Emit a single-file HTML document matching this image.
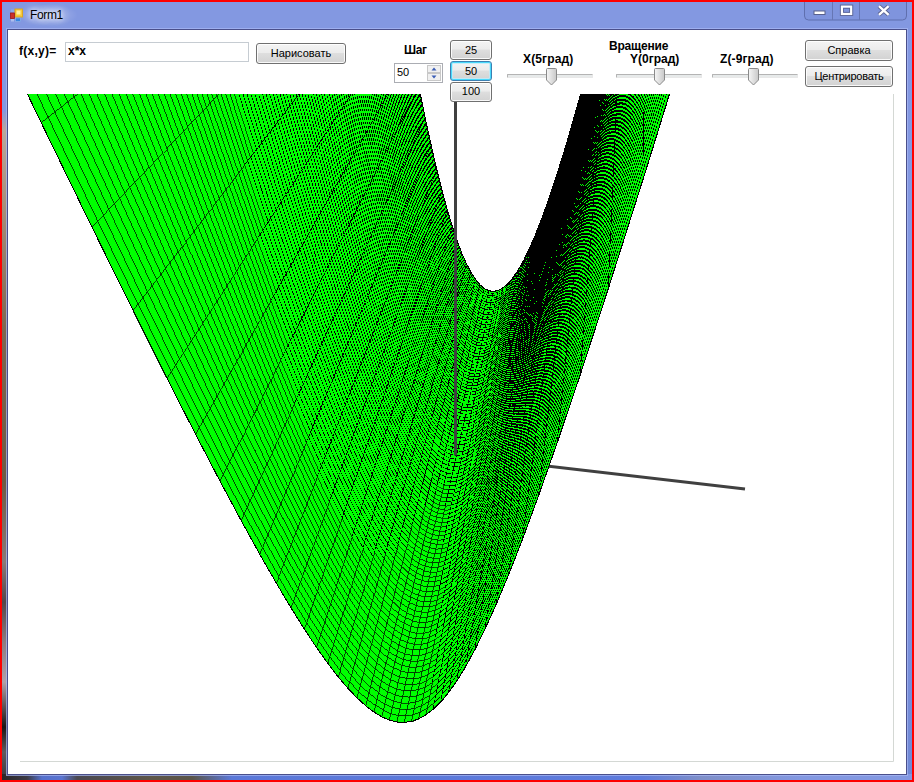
<!DOCTYPE html>
<html><head><meta charset="utf-8"><title>Form1</title><style>
html,body{margin:0;padding:0}
body{width:914px;height:782px;position:relative;overflow:hidden;background:#fe0000;font-family:"Liberation Sans",sans-serif;font-size:11px;color:#000}
div,span{position:absolute;box-sizing:border-box}
#frame{left:2px;top:2px;width:910px;height:778px;background:#8398e1}
#fl{left:2px;top:2px;width:6px;height:778px;background:linear-gradient(180deg,#8398e1 0,#8398e1 108px,#b9a79c 128px,#a8907c 200px,#7d6650 330px,#6e5a44 480px,#8a7a78 560px,#54464a 600px,#8c7c80 640px,#b0a0a8 680px,#1a1414 725px,#605a5e 750px,#38363c 778px)}
#fb{left:2px;top:774px;width:910px;height:6px;background:linear-gradient(90deg,#2a2628 0,#3c3a44 25px,#5570cc 40px,#5a74d0 60px,#4a4850 75px,#5e5648 150px,#5a5448 190px,#5b78d8 230px,#5e7bdc 640px,#7f8fc8 700px,#8398e1 800px)}
#fr{left:906px;top:30px;width:6px;height:750px;background:linear-gradient(180deg,#8398e1 0,#8398e1 500px,#6f88d4 750px)}
#client{left:7px;top:29px;width:900px;height:746px;background:#fff;border:1px solid #4a4f8a;box-shadow:0 0 0 1px rgba(170,185,245,.7)}
#title{left:30px;top:7.5px;font-size:12px;line-height:15px;letter-spacing:-.35px;color:#000;text-shadow:0 0 5px #fff,0 0 8px #dfe6ff,0 0 10px #dfe6ff}
#glow{left:18px;top:4px;width:60px;height:22px;border-radius:11px;background:radial-gradient(ellipse at center,rgba(255,255,255,.35),rgba(255,255,255,0) 70%)}
.b{font-weight:bold;font-size:12px;white-space:nowrap;line-height:13px}
.btn{border:1px solid #707070;border-radius:3px;background:linear-gradient(180deg,#f4f4f4 0,#ececec 45%,#dedede 50%,#d2d2d2 100%);box-shadow:inset 0 0 0 1px rgba(255,255,255,.85);text-align:center;white-space:nowrap}
.btn.f{border-color:#3c7fb1;box-shadow:inset 0 0 0 1px #48d8fb,inset 0 0 0 2px rgba(190,235,250,.8)}
.tr{height:4px;border:1px solid #b4b4b4;border-bottom-color:#e8e8e8;border-right-color:#e8e8e8;background:#e7eaea;border-radius:1px}
.th{width:11px;height:18px}
path.a{paint-order:normal;stroke-width:.85px;stroke:#003800}path.b{stroke-width:1.3px}path.c{stroke-width:1.18px}
</style></head><body>
<div id="frame"></div><div id="fl"></div><div id="fr"></div><div id="fb"></div>
<div id="glow"></div>
<svg style="position:absolute;left:10px;top:8px" width="13" height="14" viewBox="0 0 13 14"><rect x="5" y="1" width="7.5" height="8" fill="#f7c93a" stroke="#d9a520" stroke-width="1"/><rect x="6.5" y="2.5" width="4" height="4" fill="#fff0a8"/><rect x="0.5" y="5" width="4" height="5.5" fill="#c9302a" stroke="#a01818" stroke-width=".8"/><rect x="5.5" y="10" width="5" height="3.5" fill="#3a86e0" stroke="#9ab8e8" stroke-width=".6"/><rect x="1" y="1.5" width="3" height="2.5" fill="#8fb0ee" opacity=".8"/><rect x="1" y="11" width="3" height="2.5" fill="#b8c8f0" opacity=".8"/></svg>
<div id="title">Form1</div>
<svg style="position:absolute;left:803px;top:2px" width="105" height="20" viewBox="0 0 105 20"><path d="M1.5,0v14a4,4 0 0 0 4,4h94a4,4 0 0 0 4,-4v-14" fill="rgba(120,140,215,.35)" stroke="#5f6fae" stroke-width="1"/><path d="M29.5,0v18M56.5,0v18" stroke="#6676b4" stroke-width="1"/><rect x="11" y="9" width="11" height="3.5" fill="#fff" stroke="#58608c" stroke-width="1"/><rect x="38.8" y="4.5" width="9.5" height="7.5" fill="none" stroke="#fff" stroke-width="2.4"/><rect x="37.3" y="3" width="12.5" height="10.5" fill="none" stroke="#58608c" stroke-width=".8"/><rect x="40.6" y="6.3" width="6" height="4" fill="none" stroke="#58608c" stroke-width=".8"/><path d="M76,4.2l9.6,8.6M85.600,4.2l-9.6,8.6" stroke="#58608c" stroke-width="4.2"/><path d="M76,4.2l9.600,8.6M85.600,4.2l-9.6,8.6" stroke="#fff" stroke-width="2.4"/></svg>
<div id="client"></div>
<span class="b" style="left:19px;top:45px;letter-spacing:.27px">f(x,y)=</span>
<div style="left:65px;top:42px;width:184px;height:20px;border:1px solid #c6ccd2;background:#fff"></div>
<span class="b" style="left:68px;top:45px">x*x</span>
<div class="btn" style="left:256px;top:43px;width:90px;height:21px;line-height:19px">Нарисовать</div>
<span class="b" style="left:404px;top:44px;letter-spacing:-.4px">Шаг</span>
<div style="left:394px;top:63px;width:49px;height:20px;border:1px solid #abadb3;background:#fff"></div>
<span style="left:397px;top:66px;line-height:13px">50</span>
<div style="left:427px;top:65px;width:14px;height:8px;border:1px solid #c8c8c8;background:#f0f0f0"></div>
<div style="left:427px;top:73px;width:14px;height:8px;border:1px solid #c8c8c8;background:#f0f0f0"></div>
<svg style="position:absolute;left:427px;top:65px" width="14" height="16" viewBox="0 0 14 16"><path d="M4.500,5.500L7,2.500L9.500,5.500Z" fill="#3b5db5"/><path d="M4.500,10.500L7,13.500L9.500,10.500Z" fill="#3b5db5"/></svg>
<div class="btn" style="left:450px;top:40px;width:42px;height:20px;line-height:18px">25</div>
<div class="btn f" style="left:450px;top:61px;width:42px;height:20px;line-height:18px">50</div>
<div class="btn" style="left:450px;top:82px;width:42px;height:20px;line-height:17px;z-index:5">100</div>
<span class="b" style="left:523px;top:53px;letter-spacing:.15px">X(5град)</span>
<span class="b" style="left:609px;top:39.5px;letter-spacing:-.2px">Вращение</span>
<span class="b" style="left:630px;top:53px;letter-spacing:0">Y(0град)</span>
<span class="b" style="left:720px;top:53px;letter-spacing:.12px">Z(-9град)</span>
<div class="tr" style="left:507px;top:74px;width:86px"></div>
<div class="tr" style="left:616px;top:74px;width:86px"></div>
<div class="tr" style="left:712px;top:74px;width:86px"></div>
<svg class="th" style="position:absolute;left:546px;top:68px" width="11" height="18" viewBox="0 0 11 18"><defs><linearGradient id="tg1" x1="0" x2="1" y1="0" y2="0"><stop offset="0" stop-color="#f6f6f6"/><stop offset="1" stop-color="#c8c8c8"/></linearGradient></defs><path d="M1.5,.5h8a1,1 0 0 1 1,1v10.5l-5,5l-5,-5v-10.5a1,1 0 0 1 1,-1z" fill="url(#tg1)" stroke="#8a8a8a"/></svg><svg class="th" style="position:absolute;left:654px;top:68px" width="11" height="18" viewBox="0 0 11 18"><defs><linearGradient id="tg2" x1="0" x2="1" y1="0" y2="0"><stop offset="0" stop-color="#f6f6f6"/><stop offset="1" stop-color="#c8c8c8"/></linearGradient></defs><path d="M1.5,.5h8a1,1 0 0 1 1,1v10.5l-5,5l-5,-5v-10.5a1,1 0 0 1 1,-1z" fill="url(#tg2)" stroke="#8a8a8a"/></svg><svg class="th" style="position:absolute;left:748px;top:68px" width="11" height="18" viewBox="0 0 11 18"><defs><linearGradient id="tg3" x1="0" x2="1" y1="0" y2="0"><stop offset="0" stop-color="#f6f6f6"/><stop offset="1" stop-color="#c8c8c8"/></linearGradient></defs><path d="M1.5,.5h8a1,1 0 0 1 1,1v10.5l-5,5l-5,-5v-10.5a1,1 0 0 1 1,-1z" fill="url(#tg3)" stroke="#8a8a8a"/></svg>
<div class="btn" style="left:805px;top:40px;width:88px;height:21px;line-height:19px">Справка</div>
<div class="btn" style="left:805px;top:66px;width:88px;height:21px;line-height:19px;letter-spacing:-.25px">Центрировать</div>
<svg style="position:absolute;left:20px;top:94px" width="874" height="668" viewBox="20 94 874 668">
<path d="M893.5,94V761.500H20" fill="none" stroke="#d4d8d4" stroke-width="1"/>
<path d="M455.500,455.500L745,489" stroke="#404040" stroke-width="3" fill="none"/>
<g shape-rendering="crispEdges" fill="#0f0" stroke="#000" stroke-width="1.12" paint-order="stroke"><path d="M417.9,89l6.4,31.1l.9-1.9l-6.3-31.1z"/><path d="M424.3,120.1l6,27.6l.9-2l-6-27.5z"/><path d="M430.3,147.7l5.7,24.3l.8-2l-5.6-24.3z"/><path d="M436,172l5.4,21.6l.8-2.1l-5.4-21.5z"/><path d="M441.4,193.6l5.3,18.9l.7-2.1l-5.2-18.9z"/><path d="M446.7,212.5l5,16.6l.7-2.2l-5-16.5z"/><path d="M451.7,229.1l4.8,14.4l.7-2.2l-4.8-14.4z"/><path d="M456.5,243.5l4.8,12.4l.6-2.2l-4.7-12.4z"/><path d="M461.3,255.9l4.6,10.5l.7-2.3l-4.7-10.4z"/><path class="c" d="M465.9,266.4l4.6,8.6l.6-2.2l-4.5-8.7z"/><path class="c" d="M470.5,275l4.5,7l.6-2.3l-4.5-6.9z"/><path class="c" d="M475,282l4.6,5.3l.5-2.2l-4.5-5.4z"/><path class="c" d="M479.6,287.3l4.5,3.7l.5-2.2l-4.5-3.7z"/><path class="c" d="M484.1,291l4.5,2.2l.6-2.3l-4.6-2.1z"/><path class="c" d="M488.6,293.2l4.6,.5l.5-2.3l-4.5-.5z"/><path class="c" d="M493.2,293.7l4.7-1l.5-2.3l-4.7,1z"/><path class="c" d="M497.9,292.7l4.7-2.6l.5-2.3l-4.7,2.6z"/><path d="M502.6,290.1l4.9-4.2l.5-2.3l-4.9,4.2z"/><path d="M507.5,285.9l5-5.9l.5-2.3l-5,5.9z"/><path d="M512.5,280l5.2-7.6l.5-2.3l-5.2,7.6z"/><path d="M517.7,272.4l5.4-9.5l.5-2.3l-5.4,9.5z"/><path d="M523.1,262.9l5.7-11.5l.4-2.2l-5.6,11.4z"/><path d="M528.8,251.4l5.9-13.5l.4-2.3l-5.9,13.6z"/><path d="M534.7,237.9l6.3-15.8l.3-2.3l-6.2,15.8z"/><path d="M541,222.1l6.6-18.3l.4-2.2l-6.7,18.2z"/><path d="M547.6,203.8l7.1-21.1l.3-2.1l-7,21z"/><path d="M554.7,182.7l7.6-24l.3-2.1l-7.6,24z"/><path d="M562.3,158.7l8.2-27.5l.3-2.1l-8.2,27.5z"/><path d="M570.5,131.2l8.9-31.4l.2-2l-8.8,31.3z"/><path d="M579.4,99.8l9.7-35.8l.2-1.9l-9.7,35.7z"/><path d="M417,90.8l6.4,31.2l.9-1.9l-6.4-31.1z"/><path d="M423.4,122l6.1,27.7l.8-2l-6-27.6z"/><path d="M429.5,149.7l5.7,24.4l.8-2.1l-5.7-24.3z"/><path d="M435.2,174.1l5.5,21.6l.7-2.1l-5.4-21.6z"/><path d="M440.7,195.7l5.2,19l.8-2.2l-5.3-18.9z"/><path d="M445.9,214.7l5.1,16.6l.7-2.2l-5-16.6z"/><path d="M451,231.3l4.9,14.4l.6-2.2l-4.8-14.4z"/><path d="M455.9,245.7l4.7,12.4l.7-2.2l-4.8-12.4z"/><path d="M460.6,258.1l4.7,10.5l.6-2.2l-4.6-10.5z"/><path d="M465.3,268.6l4.6,8.7l.6-2.3l-4.6-8.6z"/><path class="c" d="M469.9,277.3l4.6,7l.5-2.3l-4.5-7z"/><path class="c" d="M474.5,284.3l4.5,5.3l.6-2.3l-4.6-5.3z"/><path class="c" d="M479,289.6l4.5,3.8l.6-2.4l-4.5-3.7z"/><path class="c" d="M483.5,293.4l4.6,2.1l.5-2.3l-4.5-2.2z"/><path class="c" d="M488.1,295.5l4.6,.6l.5-2.4l-4.6-.5z"/><path class="c" d="M492.7,296.1l4.7-1l.5-2.4l-4.7,1z"/><path class="c" d="M497.4,295.1l4.7-2.6l.5-2.4l-4.7,2.6z"/><path d="M502.1,292.5l4.9-4.3l.5-2.3l-4.9,4.2z"/><path d="M507,288.2l5.1-5.9l.4-2.3l-5,5.9z"/><path d="M512.1,282.3l5.2-7.6l.4-2.3l-5.2,7.6z"/><path d="M517.3,274.7l5.4-9.5l.4-2.3l-5.4,9.5z"/><path d="M522.7,265.2l5.7-11.5l.4-2.3l-5.7,11.5z"/><path d="M528.4,253.7l5.9-13.5l.4-2.3l-5.9,13.5z"/><path d="M534.3,240.2l6.3-15.9l.4-2.2l-6.3,15.8z"/><path d="M540.6,224.3l6.6-18.3l.4-2.2l-6.6,18.3z"/><path d="M547.2,206l7.2-21.1l.3-2.2l-7.1,21.1z"/><path d="M554.4,184.9l7.6-24.1l.3-2.1l-7.6,24z"/><path d="M562,160.8l8.2-27.6l.3-2l-8.2,27.5z"/><path d="M570.2,133.2l8.9-31.4l.3-2l-8.9,31.4z"/><path d="M579.1,101.8l9.8-35.9l.2-1.9l-9.7,35.8z"/><path d="M409.1,57.3l6.9,35.4l1-1.9l-6.9-35.3z"/><path d="M416,92.7l6.5,31.3l.9-2l-6.4-31.2z"/><path d="M422.5,124l6.1,27.7l.9-2l-6.1-27.7z"/><path d="M428.6,151.7l5.8,24.5l.8-2.1l-5.7-24.4z"/><path d="M434.4,176.2l5.5,21.6l.8-2.1l-5.5-21.6z"/><path d="M439.9,197.8l5.3,19l.7-2.1l-5.2-19z"/><path d="M445.2,216.8l5.1,16.7l.7-2.2l-5.1-16.6z"/><path d="M450.3,233.5l4.9,14.5l.7-2.3l-4.9-14.4z"/><path d="M455.2,248l4.8,12.4l.6-2.3l-4.7-12.4z"/><path d="M460,260.4l4.7,10.5l.6-2.3l-4.7-10.5z"/><path class="c" d="M464.7,270.9l4.6,8.7l.6-2.3l-4.6-8.7z"/><path class="c" d="M469.3,279.6l4.6,7l.6-2.3l-4.6-7z"/><path class="c" d="M473.9,286.6l4.5,5.3l.6-2.3l-4.5-5.3z"/><path class="c" d="M478.4,291.9l4.6,3.8l.5-2.3l-4.5-3.8z"/><path class="c" d="M483,295.7l4.5,2.1l.6-2.3l-4.6-2.1z"/><path class="c" d="M487.5,297.8l4.7,.6l.5-2.3l-4.6-.6z"/><path class="c" d="M492.2,298.4l4.7-1l.5-2.3l-4.7,1z"/><path class="c" d="M496.9,297.4l4.7-2.6l.5-2.3l-4.7,2.6z"/><path d="M501.6,294.8l5-4.2l.4-2.4l-4.9,4.3z"/><path d="M506.6,290.6l5-5.9l.5-2.4l-5.1,5.9z"/><path d="M511.6,284.7l5.2-7.7l.5-2.3l-5.2,7.6z"/><path d="M516.8,277l5.5-9.5l.4-2.3l-5.4,9.5z"/><path d="M522.3,267.5l5.6-11.5l.5-2.3l-5.7,11.5z"/><path d="M527.9,256l6-13.5l.4-2.3l-5.9,13.5z"/><path d="M533.9,242.5l6.3-15.9l.4-2.3l-6.3,15.9z"/><path d="M540.2,226.6l6.7-18.4l.3-2.2l-6.6,18.3z"/><path d="M546.9,208.2l7.1-21.1l.4-2.2l-7.2,21.1z"/><path d="M554,187.1l7.7-24.1l.3-2.2l-7.6,24.1z"/><path d="M561.7,163l8.2-27.7l.3-2.1l-8.2,27.6z"/><path d="M569.9,135.3l9-31.5l.2-2l-8.9,31.4z"/><path d="M578.9,103.8l9.8-36l.2-1.9l-9.8,35.9z"/><path d="M408.1,59.1l7,35.5l.9-1.9l-6.9-35.4z"/><path d="M415.1,94.6l6.5,31.4l.9-2l-6.5-31.3z"/><path d="M421.6,126l6.2,27.7l.8-2l-6.1-27.7z"/><path d="M427.8,153.7l5.8,24.6l.8-2.1l-5.8-24.5z"/><path d="M433.6,178.3l5.5,21.7l.8-2.2l-5.5-21.6z"/><path d="M439.1,200l5.3,19l.8-2.2l-5.3-19z"/><path d="M444.4,219l5.1,16.7l.8-2.2l-5.1-16.7z"/><path d="M449.5,235.7l5,14.5l.7-2.2l-4.9-14.5z"/><path d="M454.5,250.2l4.8,12.4l.7-2.2l-4.8-12.4z"/><path d="M459.3,262.6l4.7,10.6l.7-2.3l-4.7-10.5z"/><path class="c" d="M464,273.2l4.7,8.7l.6-2.3l-4.6-8.7z"/><path class="c" d="M468.7,281.9l4.6,7l.6-2.3l-4.6-7z"/><path class="c" d="M473.3,288.9l4.5,5.4l.6-2.4l-4.5-5.3z"/><path class="c" d="M477.8,294.3l4.6,3.7l.6-2.3l-4.6-3.8z"/><path class="c" d="M482.4,298l4.6,2.2l.5-2.4l-4.5-2.1z"/><path class="c" d="M487,300.2l4.6,.5l.6-2.3l-4.7-.6z"/><path class="c" d="M491.6,300.7l4.8-1l.5-2.3l-4.7,1z"/><path class="c" d="M496.4,299.7l4.8-2.5l.4-2.4l-4.7,2.6z"/><path d="M501.2,297.2l4.9-4.3l.5-2.3l-5,4.2z"/><path d="M506.1,292.9l5-5.9l.5-2.3l-5,5.9z"/><path d="M511.1,287l5.3-7.6l.4-2.4l-5.2,7.7z"/><path d="M516.4,279.4l5.4-9.6l.5-2.3l-5.5,9.5z"/><path d="M521.8,269.8l5.7-11.4l.4-2.4l-5.6,11.5z"/><path d="M527.5,258.4l6-13.6l.4-2.3l-6,13.5z"/><path d="M533.5,244.8l6.3-15.9l.4-2.3l-6.3,15.9z"/><path d="M539.8,228.9l6.7-18.4l.4-2.3l-6.7,18.4z"/><path d="M546.5,210.5l7.2-21.1l.3-2.3l-7.1,21.1z"/><path d="M553.7,189.4l7.6-24.3l.4-2.1l-7.7,24.1z"/><path d="M561.3,165.1l8.3-27.6l.3-2.2l-8.2,27.7z"/><path d="M569.6,137.5l9-31.7l.3-2l-9,31.5z"/><path d="M578.6,105.8l9.8-36.1l.3-1.9l-9.8,36z"/><path d="M407.1,60.9l7,35.6l1-1.9l-7-35.5z"/><path d="M414.1,96.5l6.6,31.5l.9-2l-6.5-31.4z"/><path d="M420.7,128l6.2,27.8l.9-2.1l-6.2-27.7z"/><path d="M426.9,155.8l5.9,24.6l.8-2.1l-5.8-24.6z"/><path d="M432.8,180.4l5.5,21.7l.8-2.1l-5.5-21.7z"/><path d="M438.3,202.1l5.4,19.1l.7-2.2l-5.3-19z"/><path d="M443.7,221.2l5.1,16.8l.7-2.3l-5.1-16.7z"/><path d="M448.8,238l5,14.5l.7-2.3l-5-14.5z"/><path d="M453.8,252.5l4.8,12.4l.7-2.3l-4.8-12.4z"/><path d="M458.6,264.9l4.8,10.6l.6-2.3l-4.7-10.6z"/><path class="c" d="M463.4,275.5l4.6,8.7l.7-2.3l-4.7-8.7z"/><path class="c" d="M468,284.2l4.7,7.1l.6-2.4l-4.6-7z"/><path class="c" d="M472.7,291.3l4.6,5.3l.5-2.3l-4.5-5.4z"/><path class="c" d="M477.3,296.6l4.5,3.8l.6-2.4l-4.6-3.7z"/><path class="c" d="M481.8,300.4l4.7,2.1l.5-2.3l-4.6-2.2z"/><path class="c" d="M486.5,302.5l4.6,.6l.5-2.4l-4.6-.5z"/><path class="c" d="M491.1,303.1l4.7-1l.6-2.4l-4.8,1z"/><path class="c" d="M495.8,302.1l4.8-2.6l.6-2.3l-4.8,2.5z"/><path d="M500.6,299.5l5-4.2l.5-2.4l-4.9,4.3z"/><path d="M505.6,295.3l5.1-5.9l.4-2.4l-5,5.9z"/><path d="M510.7,289.4l5.2-7.7l.5-2.3l-5.3,7.6z"/><path d="M515.9,281.7l5.5-9.5l.4-2.4l-5.4,9.6z"/><path d="M521.4,272.2l5.7-11.5l.4-2.3l-5.7,11.4z"/><path d="M527.1,260.7l6-13.6l.4-2.3l-6,13.6z"/><path d="M533.1,247.1l6.3-15.9l.4-2.3l-6.3,15.9z"/><path d="M539.4,231.2l6.7-18.4l.4-2.3l-6.7,18.4z"/><path d="M546.1,212.8l7.2-21.2l.4-2.2l-7.2,21.1z"/><path d="M553.3,191.6l7.7-24.3l.3-2.2l-7.6,24.3z"/><path d="M561,167.3l8.3-27.7l.3-2.1l-8.3,27.6z"/><path d="M569.3,139.6l9-31.7l.3-2.1l-9,31.7z"/><path d="M578.3,107.9l9.9-36.2l.2-2l-9.8,36.1z"/><path d="M406,62.7l7.2,35.7l.9-1.9l-7-35.6z"/><path d="M413.2,98.4l6.6,31.6l.9-2l-6.6-31.5z"/><path d="M419.8,130l6.2,27.9l.9-2.1l-6.2-27.8z"/><path d="M426,157.9l5.9,24.7l.9-2.2l-5.9-24.6z"/><path d="M431.9,182.6l5.6,21.7l.8-2.2l-5.5-21.7z"/><path d="M437.5,204.3l5.4,19.2l.8-2.3l-5.4-19.1z"/><path d="M442.9,223.5l5.2,16.7l.7-2.2l-5.1-16.8z"/><path d="M448.1,240.2l5,14.5l.7-2.2l-5-14.5z"/><path d="M453.1,254.7l4.9,12.5l.6-2.3l-4.8-12.4z"/><path d="M458,267.2l4.7,10.6l.7-2.3l-4.8-10.6z"/><path class="c" d="M462.7,277.8l4.7,8.8l.6-2.4l-4.6-8.7z"/><path class="c" d="M467.4,286.6l4.7,7l.6-2.3l-4.7-7.1z"/><path class="c" d="M472.1,293.6l4.6,5.4l.6-2.4l-4.6-5.3z"/><path class="c" d="M476.7,299l4.6,3.7l.5-2.3l-4.5-3.8z"/><path class="c" d="M481.3,302.7l4.6,2.2l.6-2.4l-4.7-2.1z"/><path class="b" d="M485.9,304.9l4.7,.6l.5-2.4l-4.6-.6z"/><path class="c" d="M490.6,305.5l4.7-1l.5-2.4l-4.7,1z"/><path class="c" d="M495.3,304.5l4.8-2.6l.5-2.4l-4.8,2.6z"/><path d="M500.1,301.9l5-4.2l.5-2.4l-5,4.2z"/><path d="M505.1,297.7l5.1-5.9l.5-2.4l-5.1,5.9z"/><path d="M510.2,291.8l5.3-7.7l.4-2.4l-5.2,7.7z"/><path d="M515.5,284.1l5.4-9.5l.5-2.4l-5.5,9.5z"/><path d="M520.9,274.6l5.8-11.5l.4-2.4l-5.7,11.5z"/><path d="M526.7,263.1l6-13.7l.4-2.3l-6,13.6z"/><path d="M532.7,249.4l6.3-15.9l.4-2.3l-6.3,15.9z"/><path d="M539,233.5l6.8-18.4l.3-2.3l-6.7,18.4z"/><path d="M545.8,215.1l7.2-21.2l.3-2.3l-7.2,21.2z"/><path d="M553,193.9l7.7-24.4l.3-2.2l-7.7,24.3z"/><path d="M560.7,169.5l8.3-27.8l.3-2.1l-8.3,27.7z"/><path d="M569,141.7l9.1-31.7l.2-2.1l-9,31.7z"/><path d="M578.1,110l9.9-36.4l.2-1.9l-9.9,36.2z"/><path d="M405,64.6l7.2,35.8l1-2l-7.2-35.7z"/><path d="M412.2,100.4l6.7,31.6l.9-2l-6.6-31.6z"/><path d="M418.9,132l6.3,28l.8-2.1l-6.2-27.9z"/><path d="M425.2,160l5.9,24.7l.8-2.1l-5.9-24.7z"/><path d="M431.1,184.7l5.6,21.8l.8-2.2l-5.6-21.7z"/><path d="M436.7,206.5l5.4,19.2l.8-2.2l-5.4-19.2z"/><path d="M442.1,225.7l5.2,16.8l.8-2.3l-5.2-16.7z"/><path d="M447.3,242.5l5.1,14.5l.7-2.3l-5-14.5z"/><path d="M452.4,257l4.9,12.6l.7-2.4l-4.9-12.5z"/><path d="M457.3,269.6l4.8,10.6l.6-2.4l-4.7-10.6z"/><path class="c" d="M462.1,280.2l4.7,8.7l.6-2.3l-4.7-8.8z"/><path class="c" d="M466.8,288.9l4.6,7.1l.7-2.4l-4.7-7z"/><path class="c" d="M471.4,296l4.7,5.4l.6-2.4l-4.6-5.4z"/><path class="c" d="M476.1,301.4l4.6,3.7l.6-2.4l-4.6-3.7z"/><path class="b" d="M480.7,305.1l4.6,2.2l.6-2.4l-4.6-2.2z"/><path class="b" d="M485.3,307.3l4.7,.6l.6-2.4l-4.7-.6z"/><path class="c" d="M490,307.9l4.8-1l.5-2.4l-4.7,1z"/><path class="c" d="M494.8,306.9l4.8-2.6l.5-2.4l-4.8,2.6z"/><path d="M499.6,304.3l5-4.2l.5-2.4l-5,4.2z"/><path d="M504.6,300.1l5.1-5.9l.5-2.4l-5.1,5.9z"/><path d="M509.7,294.2l5.3-7.7l.5-2.4l-5.3,7.7z"/><path d="M515,286.5l5.5-9.5l.4-2.4l-5.4,9.5z"/><path d="M520.5,277l5.7-11.6l.5-2.3l-5.8,11.5z"/><path d="M526.2,265.4l6.1-13.6l.4-2.4l-6,13.7z"/><path d="M532.3,251.8l6.3-15.9l.4-2.4l-6.3,15.9z"/><path d="M538.6,235.9l6.8-18.5l.4-2.3l-6.8,18.4z"/><path d="M545.4,217.4l7.2-21.3l.4-2.2l-7.2,21.2z"/><path d="M552.6,196.1l7.8-24.3l.3-2.3l-7.7,24.4z"/><path d="M560.4,171.8l8.3-27.9l.3-2.2l-8.3,27.8z"/><path d="M568.7,143.9l9.1-31.9l.3-2l-9.1,31.7z"/><path d="M577.8,112l9.9-36.4l.3-2l-9.9,36.4z"/><path d="M403.9,66.4l7.3,35.9l1-1.9l-7.2-35.8z"/><path d="M411.2,102.3l6.7,31.8l1-2.1l-6.7-31.6z"/><path d="M417.9,134.1l6.4,28l.9-2.1l-6.3-28z"/><path d="M424.3,162.1l6,24.8l.8-2.2l-5.9-24.7z"/><path d="M430.3,186.9l5.6,21.9l.8-2.3l-5.6-21.8z"/><path d="M435.9,208.8l5.5,19.2l.7-2.3l-5.4-19.2z"/><path d="M441.4,228l5.2,16.8l.7-2.3l-5.2-16.8z"/><path d="M446.6,244.8l5.1,14.6l.7-2.4l-5.1-14.5z"/><path d="M451.7,259.4l4.9,12.5l.7-2.3l-4.9-12.6z"/><path d="M456.6,271.9l4.8,10.6l.7-2.3l-4.8-10.6z"/><path class="c" d="M461.4,282.5l4.7,8.8l.7-2.4l-4.7-8.7z"/><path class="c" d="M466.1,291.3l4.7,7.1l.6-2.4l-4.6-7.1z"/><path class="c" d="M470.8,298.4l4.7,5.4l.6-2.4l-4.7-5.4z"/><path class="c" d="M475.5,303.8l4.6,3.7l.6-2.4l-4.6-3.7z"/><path class="b" d="M480.1,307.5l4.7,2.2l.5-2.4l-4.6-2.2z"/><path class="b" d="M484.8,309.7l4.7,.6l.5-2.4l-4.7-.6z"/><path class="c" d="M489.5,310.3l4.8-1l.5-2.4l-4.8,1z"/><path class="c" d="M494.3,309.3l4.8-2.5l.5-2.5l-4.8,2.6z"/><path d="M499.1,306.8l5-4.3l.5-2.4l-5,4.2z"/><path d="M504.1,302.5l5.1-5.9l.5-2.4l-5.1,5.9z"/><path d="M509.2,296.6l5.3-7.7l.5-2.4l-5.3,7.7z"/><path d="M514.5,288.9l5.5-9.5l.5-2.4l-5.5,9.5z"/><path d="M520,279.4l5.8-11.6l.4-2.4l-5.7,11.6z"/><path d="M525.8,267.8l6.1-13.6l.4-2.4l-6.1,13.6z"/><path d="M531.9,254.2l6.3-16l.4-2.3l-6.3,15.9z"/><path d="M538.2,238.2l6.8-18.5l.4-2.3l-6.8,18.5z"/><path d="M545,219.7l7.3-21.3l.3-2.3l-7.2,21.3z"/><path d="M552.3,198.4l7.7-24.4l.4-2.2l-7.8,24.3z"/><path d="M560,174l8.4-27.9l.3-2.2l-8.3,27.9z"/><path d="M568.4,146.1l9.1-31.9l.3-2.2l-9.1,31.9z"/><path d="M577.5,114.2l10-36.6l.2-2l-9.9,36.4z"/><path d="M402.9,68.3l7.3,36l1-2l-7.3-35.9z"/><path d="M410.2,104.3l6.8,31.8l.9-2l-6.7-31.8z"/><path d="M417,136.1l6.4,28.1l.9-2.1l-6.4-28z"/><path d="M423.4,164.2l6,24.9l.9-2.2l-6-24.8z"/><path d="M429.4,189.1l5.7,21.9l.8-2.2l-5.6-21.9z"/><path d="M435.1,211l5.5,19.2l.8-2.2l-5.5-19.2z"/><path d="M440.6,230.2l5.3,16.9l.7-2.3l-5.2-16.8z"/><path d="M445.9,247.1l5.1,14.6l.7-2.3l-5.1-14.6z"/><path d="M451,261.7l4.9,12.6l.7-2.4l-4.9-12.5z"/><path class="c" d="M455.9,274.3l4.8,10.6l.7-2.4l-4.8-10.6z"/><path class="c" d="M460.7,284.9l4.8,8.8l.6-2.4l-4.7-8.8z"/><path class="c" d="M465.5,293.7l4.7,7.1l.6-2.4l-4.7-7.1z"/><path class="c" d="M470.2,300.8l4.7,5.4l.6-2.4l-4.7-5.4z"/><path class="c" d="M474.9,306.2l4.6,3.8l.6-2.5l-4.6-3.7z"/><path class="b" d="M479.5,310l4.7,2.2l.6-2.5l-4.7-2.2z"/><path class="b" d="M484.2,312.2l4.7,.6l.6-2.5l-4.7-.6z"/><path class="c" d="M488.9,312.8l4.8-1l.6-2.5l-4.8,1z"/><path class="c" d="M493.7,311.8l4.9-2.6l.5-2.4l-4.8,2.5z"/><path d="M498.6,309.2l5-4.2l.5-2.5l-5,4.3z"/><path d="M503.6,305l5.1-5.9l.5-2.5l-5.1,5.9z"/><path d="M508.7,299.1l5.4-7.7l.4-2.5l-5.3,7.7z"/><path d="M514.1,291.4l5.5-9.6l.4-2.4l-5.5,9.5z"/><path d="M519.6,281.8l5.8-11.5l.4-2.5l-5.8,11.6z"/><path d="M525.4,270.3l6-13.7l.5-2.4l-6.1,13.6z"/><path d="M531.4,256.6l6.4-16l.4-2.4l-6.3,16z"/><path d="M537.8,240.6l6.8-18.5l.4-2.4l-6.8,18.5z"/><path d="M544.6,222.1l7.3-21.4l.4-2.3l-7.3,21.3z"/><path d="M551.9,200.7l7.8-24.4l.3-2.3l-7.7,24.4z"/><path d="M559.7,176.3l8.4-28l.3-2.2l-8.4,27.9z"/><path d="M568.1,148.3l9.2-32l.2-2.1l-9.1,31.9z"/><path d="M577.3,116.3l10-36.6l.2-2.1l-10,36.6z"/><path d="M401.8,70.2l7.4,36.1l1-2l-7.3-36z"/><path d="M409.2,106.3l6.8,31.9l1-2.1l-6.8-31.8z"/><path d="M416,138.2l6.5,28.2l.9-2.2l-6.4-28.1z"/><path d="M422.5,166.4l6,24.9l.9-2.2l-6-24.9z"/><path d="M428.5,191.3l5.8,21.9l.8-2.2l-5.7-21.9z"/><path d="M434.3,213.2l5.5,19.3l.8-2.3l-5.5-19.2z"/><path d="M439.8,232.5l5.3,16.9l.8-2.3l-5.3-16.9z"/><path d="M445.1,249.4l5.1,14.7l.8-2.4l-5.1-14.6z"/><path d="M450.2,264.1l5,12.5l.7-2.3l-4.9-12.6z"/><path d="M455.2,276.6l4.9,10.7l.6-2.4l-4.8-10.6z"/><path class="c" d="M460.1,287.3l4.8,8.8l.6-2.4l-4.8-8.8z"/><path class="c" d="M464.9,296.1l4.7,7.1l.6-2.4l-4.7-7.1z"/><path class="c" d="M469.6,303.2l4.7,5.4l.6-2.4l-4.7-5.4z"/><path class="c" d="M474.3,308.6l4.7,3.8l.5-2.4l-4.6-3.8z"/><path class="b" d="M479,312.4l4.6,2.2l.6-2.4l-4.7-2.2z"/><path class="b" d="M483.6,314.6l4.8,.6l.5-2.4l-4.7-.6z"/><path class="c" d="M488.4,315.2l4.8-1l.5-2.4l-4.8,1z"/><path class="c" d="M493.2,314.2l4.9-2.5l.5-2.5l-4.9,2.6z"/><path d="M498.1,311.7l5-4.3l.5-2.4l-5,4.2z"/><path d="M503.1,307.4l5.2-5.9l.4-2.4l-5.1,5.9z"/><path d="M508.3,301.5l5.3-7.7l.5-2.4l-5.4,7.7z"/><path d="M513.6,293.8l5.5-9.5l.5-2.5l-5.5,9.6z"/><path d="M519.1,284.3l5.8-11.6l.5-2.4l-5.8,11.5z"/><path d="M524.9,272.7l6.1-13.7l.4-2.4l-6,13.7z"/><path d="M531,259l6.4-16l.4-2.4l-6.4,16z"/><path d="M537.4,243l6.8-18.5l.4-2.4l-6.8,18.5z"/><path d="M544.2,224.5l7.3-21.4l.4-2.4l-7.3,21.4z"/><path d="M551.5,203.1l7.8-24.5l.4-2.3l-7.8,24.4z"/><path d="M559.3,178.6l8.5-28.1l.3-2.2l-8.4,28z"/><path d="M567.8,150.5l9.2-32.1l.3-2.1l-9.2,32z"/><path d="M577,118.4l10-36.7l.3-2l-10,36.6z"/><path d="M400.7,72.1l7.5,36.2l1-2l-7.4-36.1z"/><path d="M408.2,108.3l6.9,32l.9-2.1l-6.8-31.9z"/><path d="M415.1,140.3l6.5,28.3l.9-2.2l-6.5-28.2z"/><path d="M421.6,168.6l6.1,24.9l.8-2.2l-6-24.9z"/><path d="M427.7,193.5l5.8,22l.8-2.3l-5.8-21.9z"/><path d="M433.5,215.5l5.5,19.4l.8-2.4l-5.5-19.3z"/><path d="M439,234.9l5.4,16.9l.7-2.4l-5.3-16.9z"/><path d="M444.4,251.8l5.1,14.6l.7-2.3l-5.1-14.7z"/><path d="M449.5,266.4l5,12.6l.7-2.4l-5-12.5z"/><path class="c" d="M454.5,279l4.9,10.7l.7-2.4l-4.9-10.7z"/><path class="c" d="M459.4,289.7l4.8,8.9l.7-2.5l-4.8-8.8z"/><path class="c" d="M464.2,298.6l4.7,7.1l.7-2.5l-4.7-7.1z"/><path class="c" d="M468.9,305.7l4.8,5.4l.6-2.5l-4.7-5.4z"/><path class="c" d="M473.7,311.1l4.7,3.8l.6-2.5l-4.7-3.8z"/><path class="b" d="M478.4,314.9l4.7,2.2l.5-2.5l-4.6-2.2z"/><path class="b" d="M483.1,317.1l4.7,.6l.6-2.5l-4.8-.6z"/><path class="c" d="M487.8,317.7l4.9-1l.5-2.5l-4.8,1z"/><path class="c" d="M492.7,316.7l4.9-2.6l.5-2.4l-4.9,2.5z"/><path d="M497.6,314.1l5-4.2l.5-2.5l-5,4.3z"/><path d="M502.6,309.9l5.2-5.9l.5-2.5l-5.2,5.9z"/><path d="M507.8,304l5.3-7.7l.5-2.5l-5.3,7.7z"/><path d="M513.1,296.3l5.6-9.6l.4-2.4l-5.5,9.5z"/><path d="M518.7,286.7l5.8-11.5l.4-2.5l-5.8,11.6z"/><path d="M524.5,275.2l6.1-13.7l.4-2.5l-6.1,13.7z"/><path d="M530.6,261.5l6.4-16.1l.4-2.4l-6.4,16z"/><path d="M537,245.4l6.9-18.6l.3-2.3l-6.8,18.5z"/><path d="M543.9,226.8l7.3-21.4l.3-2.3l-7.3,21.4z"/><path d="M551.2,205.4l7.8-24.5l.3-2.3l-7.8,24.5z"/><path d="M559,180.9l8.5-28.1l.3-2.3l-8.5,28.1z"/><path d="M567.5,152.8l9.2-32.2l.3-2.2l-9.2,32.1z"/><path d="M576.7,120.6l10.1-36.8l.2-2.1l-10,36.7z"/><path d="M399.6,74.1l7.5,36.3l1.1-2.1l-7.5-36.2z"/><path d="M407.1,110.4l7,32l1-2.1l-6.9-32z"/><path d="M414.1,142.4l6.5,28.4l1-2.2l-6.5-28.3z"/><path d="M420.6,170.8l6.2,25l.9-2.3l-6.1-24.9z"/><path d="M426.8,195.8l5.8,22l.9-2.3l-5.8-22z"/><path d="M432.6,217.8l5.6,19.4l.8-2.3l-5.5-19.4z"/><path d="M438.2,237.2l5.4,16.9l.8-2.3l-5.4-16.9z"/><path d="M443.6,254.1l5.2,14.7l.7-2.4l-5.1-14.6z"/><path d="M448.8,268.8l5,12.7l.7-2.5l-5-12.6z"/><path class="c" d="M453.8,281.5l4.9,10.6l.7-2.4l-4.9-10.7z"/><path class="c" d="M458.7,292.1l4.8,8.9l.7-2.4l-4.8-8.9z"/><path class="c" d="M463.5,301l4.8,7.1l.6-2.4l-4.7-7.1z"/><path class="c" d="M468.3,308.1l4.7,5.5l.7-2.5l-4.8-5.4z"/><path class="c" d="M473,313.6l4.8,3.8l.6-2.5l-4.7-3.8z"/><path class="b" d="M477.8,317.4l4.7,2.2l.6-2.5l-4.7-2.2z"/><path class="b" d="M482.5,319.6l4.8,.6l.5-2.5l-4.7-.6z"/><path class="c" d="M487.3,320.2l4.8-1l.6-2.5l-4.9,1z"/><path class="c" d="M492.1,319.2l4.9-2.6l.6-2.5l-4.9,2.6z"/><path d="M497,316.6l5.1-4.2l.5-2.5l-5,4.2z"/><path d="M502.1,312.4l5.2-5.9l.5-2.5l-5.2,5.9z"/><path d="M507.3,306.5l5.3-7.7l.5-2.5l-5.3,7.7z"/><path d="M512.6,298.8l5.6-9.6l.5-2.5l-5.6,9.6z"/><path d="M518.2,289.2l5.8-11.6l.5-2.4l-5.8,11.5z"/><path d="M524,277.6l6.1-13.7l.5-2.4l-6.1,13.7z"/><path d="M530.1,263.9l6.5-16l.4-2.5l-6.4,16.1z"/><path d="M536.6,247.9l6.9-18.6l.4-2.5l-6.9,18.6z"/><path d="M543.5,229.3l7.3-21.5l.4-2.4l-7.3,21.4z"/><path d="M550.8,207.8l7.9-24.6l.3-2.3l-7.8,24.5z"/><path d="M558.7,183.2l8.5-28.2l.3-2.2l-8.5,28.1z"/><path d="M567.2,155l9.2-32.2l.3-2.2l-9.2,32.2z"/><path d="M576.4,122.8l10.2-36.9l.2-2.1l-10.1,36.8z"/><path d="M398.5,76l7.6,36.4l1-2l-7.5-36.3z"/><path d="M406.1,112.4l7,32.2l1-2.2l-7-32z"/><path d="M413.1,144.6l6.6,28.4l.9-2.2l-6.5-28.4z"/><path d="M419.7,173l6.2,25l.9-2.2l-6.2-25z"/><path d="M425.9,198l5.9,22.1l.8-2.3l-5.8-22z"/><path d="M431.8,220.1l5.6,19.4l.8-2.3l-5.6-19.4z"/><path d="M437.4,239.5l5.4,17l.8-2.4l-5.4-16.9z"/><path d="M442.8,256.5l5.2,14.7l.8-2.4l-5.2-14.7z"/><path d="M448,271.2l5.1,12.7l.7-2.4l-5-12.7z"/><path class="c" d="M453.1,283.9l4.9,10.7l.7-2.5l-4.9-10.6z"/><path class="c" d="M458,294.6l4.9,8.9l.6-2.5l-4.8-8.9z"/><path class="c" d="M462.9,303.5l4.8,7.1l.6-2.5l-4.8-7.1z"/><path class="c" d="M467.7,310.6l4.7,5.4l.6-2.4l-4.7-5.5z"/><path class="c" d="M472.4,316l4.8,3.9l.6-2.5l-4.8-3.8z"/><path class="b" d="M477.2,319.9l4.7,2.2l.6-2.5l-4.7-2.2z"/><path class="b" d="M481.9,322.1l4.8,.6l.6-2.5l-4.8-.6z"/><path class="c" d="M486.7,322.7l4.9-1l.5-2.5l-4.8,1z"/><path class="c" d="M491.6,321.7l4.9-2.5l.5-2.6l-4.9,2.6z"/><path class="c" d="M496.5,319.2l5.1-4.3l.5-2.5l-5.1,4.2z"/><path d="M501.6,314.9l5.2-5.9l.5-2.5l-5.2,5.9z"/><path d="M506.8,309l5.3-7.7l.5-2.5l-5.3,7.7z"/><path d="M512.1,301.3l5.6-9.6l.5-2.5l-5.6,9.6z"/><path d="M517.7,291.7l5.9-11.6l.4-2.5l-5.8,11.6z"/><path d="M523.6,280.1l6.1-13.7l.4-2.5l-6.1,13.7z"/><path d="M529.7,266.4l6.5-16.1l.4-2.4l-6.5,16z"/><path d="M536.2,250.3l6.9-18.6l.4-2.4l-6.9,18.6z"/><path d="M543.1,231.7l7.3-21.5l.4-2.4l-7.3,21.5z"/><path d="M550.4,210.2l7.9-24.6l.4-2.4l-7.9,24.6z"/><path d="M558.3,185.6l8.5-28.3l.4-2.3l-8.5,28.2z"/><path d="M566.8,157.3l9.3-32.3l.3-2.2l-9.2,32.2z"/><path d="M576.1,125l10.2-37l.3-2.1l-10.2,36.9z"/><path d="M397.4,78l7.6,36.5l1.1-2.1l-7.6-36.4z"/><path d="M405,114.5l7.1,32.2l1-2.1l-7-32.2z"/><path d="M412.1,146.7l6.7,28.5l.9-2.2l-6.6-28.4z"/><path d="M418.8,175.2l6.2,25.1l.9-2.3l-6.2-25z"/><path d="M425,200.3l6,22.2l.8-2.4l-5.9-22.1z"/><path d="M431,222.5l5.6,19.4l.8-2.4l-5.6-19.4z"/><path d="M436.6,241.9l5.4,17l.8-2.4l-5.4-17z"/><path d="M442,258.9l5.3,14.8l.7-2.5l-5.2-14.7z"/><path d="M447.3,273.7l5.1,12.6l.7-2.4l-5.1-12.7z"/><path class="c" d="M452.4,286.3l4.9,10.8l.7-2.5l-4.9-10.7z"/><path class="c" d="M457.3,297.1l4.9,8.9l.7-2.5l-4.9-8.9z"/><path class="c" d="M462.2,306l4.8,7.1l.7-2.5l-4.8-7.1z"/><path class="c" d="M467,313.1l4.8,5.5l.6-2.6l-4.7-5.4z"/><path class="c" d="M471.8,318.6l4.8,3.8l.6-2.5l-4.8-3.9z"/><path class="b" d="M476.6,322.4l4.7,2.2l.6-2.5l-4.7-2.2z"/><path class="b" d="M481.3,324.6l4.8,.6l.6-2.5l-4.8-.6z"/><path class="c" d="M486.1,325.2l4.9-.9l.6-2.6l-4.9,1z"/><path class="c" d="M491,324.3l5-2.6l.5-2.5l-4.9,2.5z"/><path d="M496,321.7l5-4.2l.6-2.6l-5.1,4.3z"/><path d="M501,317.5l5.3-5.9l.5-2.6l-5.2,5.9z"/><path d="M506.3,311.6l5.4-7.8l.4-2.5l-5.3,7.7z"/><path d="M511.7,303.8l5.6-9.5l.4-2.6l-5.6,9.6z"/><path d="M517.3,294.3l5.8-11.6l.5-2.6l-5.9,11.6z"/><path d="M523.1,282.7l6.2-13.8l.4-2.5l-6.1,13.7z"/><path d="M529.3,268.9l6.5-16.1l.4-2.5l-6.5,16.1z"/><path d="M535.8,252.8l6.9-18.7l.4-2.4l-6.9,18.6z"/><path d="M542.7,234.1l7.3-21.5l.4-2.4l-7.3,21.5z"/><path d="M550,212.6l8-24.7l.3-2.3l-7.9,24.6z"/><path d="M558,187.9l8.5-28.3l.3-2.3l-8.5,28.3z"/><path d="M566.5,159.6l9.3-32.4l.3-2.2l-9.3,32.3z"/><path d="M575.8,127.2l10.3-37.1l.2-2.1l-10.2,37z"/><path d="M396.3,79.9l7.7,36.7l1-2.1l-7.6-36.5z"/><path d="M404,116.6l7.1,32.3l1-2.2l-7.1-32.2z"/><path d="M411.1,148.9l6.7,28.5l1-2.2l-6.7-28.5z"/><path d="M417.8,177.4l6.3,25.2l.9-2.3l-6.2-25.1z"/><path d="M424.1,202.6l6,22.2l.9-2.3l-6-22.2z"/><path d="M430.1,224.8l5.7,19.5l.8-2.4l-5.6-19.4z"/><path d="M435.8,244.3l5.5,17l.7-2.4l-5.4-17z"/><path d="M441.3,261.3l5.2,14.8l.8-2.4l-5.3-14.8z"/><path class="c" d="M446.5,276.1l5.2,12.7l.7-2.5l-5.1-12.6z"/><path class="c" d="M451.7,288.8l4.9,10.8l.7-2.5l-4.9-10.8z"/><path class="c" d="M456.6,299.6l4.9,8.9l.7-2.5l-4.9-8.9z"/><path class="c" d="M461.5,308.5l4.9,7.1l.6-2.5l-4.8-7.1z"/><path class="c" d="M466.4,315.6l4.8,5.5l.6-2.5l-4.8-5.5z"/><path class="c" d="M471.2,321.1l4.7,3.8l.7-2.5l-4.8-3.8z"/><path class="b" d="M475.9,324.9l4.8,2.3l.6-2.6l-4.7-2.2z"/><path class="b" d="M480.7,327.2l4.9,.6l.5-2.6l-4.8-.6z"/><path class="c" d="M485.6,327.8l4.8-1l.6-2.5l-4.9,.9z"/><path class="c" d="M490.4,326.8l5-2.5l.6-2.6l-5,2.6z"/><path d="M495.4,324.3l5.1-4.3l.5-2.5l-5,4.2z"/><path d="M500.5,320l5.2-5.9l.6-2.5l-5.3,5.9z"/><path d="M505.7,314.1l5.5-7.7l.5-2.6l-5.4,7.8z"/><path d="M511.2,306.4l5.6-9.6l.5-2.5l-5.6,9.5z"/><path d="M516.8,296.8l5.9-11.6l.4-2.5l-5.8,11.6z"/><path d="M522.7,285.2l6.1-13.8l.5-2.5l-6.2,13.8z"/><path d="M528.8,271.4l6.5-16.1l.5-2.5l-6.5,16.1z"/><path d="M535.3,255.3l7-18.7l.4-2.5l-6.9,18.7z"/><path d="M542.3,236.6l7.4-21.5l.3-2.5l-7.3,21.5z"/><path d="M549.7,215.1l7.9-24.8l.4-2.4l-8,24.7z"/><path d="M557.6,190.3l8.6-28.3l.3-2.4l-8.5,28.3z"/><path d="M566.2,162l9.4-32.5l.2-2.3l-9.3,32.4z"/><path d="M575.6,129.5l10.2-37.3l.3-2.1l-10.3,37.1z"/><path d="M585.8,92.2l11.3-42.7l.2-2.1l-11.2,42.7z"/><path d="M395.2,81.9l7.7,36.8l1.1-2.1l-7.7-36.7z"/><path d="M402.9,118.7l7.2,32.4l1-2.2l-7.1-32.3z"/><path d="M410.1,151.1l6.8,28.6l.9-2.3l-6.7-28.5z"/><path d="M416.9,179.7l6.3,25.2l.9-2.3l-6.3-25.2z"/><path d="M423.2,204.9l6,22.3l.9-2.4l-6-22.2z"/><path d="M429.2,227.2l5.8,19.5l.8-2.4l-5.7-19.5z"/><path d="M435,246.7l5.5,17.1l.8-2.5l-5.5-17z"/><path d="M440.5,263.8l5.3,14.8l.7-2.5l-5.2-14.8z"/><path class="c" d="M445.8,278.6l5.1,12.7l.8-2.5l-5.2-12.7z"/><path class="c" d="M450.9,291.3l5,10.8l.7-2.5l-4.9-10.8z"/><path class="c" d="M455.9,302.1l5,8.9l.6-2.5l-4.9-8.9z"/><path class="c" d="M460.9,311l4.8,7.2l.7-2.6l-4.9-7.1z"/><path class="c" d="M465.7,318.2l4.8,5.4l.7-2.5l-4.8-5.5z"/><path class="c" d="M470.5,323.6l4.8,3.9l.6-2.6l-4.7-3.8z"/><path class="b" d="M475.3,327.5l4.8,2.2l.6-2.5l-4.8-2.3z"/><path class="b" d="M480.1,329.7l4.9,.7l.6-2.6l-4.9-.6z"/><path class="b" d="M485,330.4l4.9-1l.5-2.6l-4.8,1z"/><path class="c" d="M489.9,329.4l5-2.6l.5-2.5l-5,2.5z"/><path class="c" d="M494.9,326.8l5.1-4.2l.5-2.6l-5.1,4.3z"/><path d="M500,322.6l5.2-5.9l.5-2.6l-5.2,5.9z"/><path d="M505.2,316.7l5.5-7.7l.5-2.6l-5.5,7.7z"/><path d="M510.7,309l5.6-9.6l.5-2.6l-5.6,9.6z"/><path d="M516.3,299.4l5.9-11.6l.5-2.6l-5.9,11.6z"/><path d="M522.2,287.8l6.2-13.8l.4-2.6l-6.1,13.8z"/><path d="M528.4,274l6.5-16.2l.4-2.5l-6.5,16.1z"/><path d="M534.9,257.8l7-18.7l.4-2.5l-7,18.7z"/><path d="M541.9,239.1l7.4-21.6l.4-2.4l-7.4,21.5z"/><path d="M549.3,217.5l8-24.8l.3-2.4l-7.9,24.8z"/><path d="M557.3,192.7l8.6-28.4l.3-2.3l-8.6,28.3z"/><path d="M565.9,164.3l9.4-32.5l.3-2.3l-9.4,32.5z"/><path d="M575.3,131.8l10.3-37.4l.2-2.2l-10.2,37.3z"/><path d="M585.6,94.4l11.3-42.9l.2-2l-11.3,42.7z"/><path d="M394,84l7.9,36.8l1-2.1l-7.7-36.8z"/><path d="M401.9,120.8l7.2,32.5l1-2.2l-7.2-32.4z"/><path d="M409.1,153.3l6.8,28.7l1-2.3l-6.8-28.6z"/><path d="M415.9,182l6.4,25.3l.9-2.4l-6.3-25.2z"/><path d="M422.3,207.3l6.1,22.3l.8-2.4l-6-22.3z"/><path d="M428.4,229.6l5.8,19.5l.8-2.4l-5.8-19.5z"/><path d="M434.2,249.1l5.5,17.1l.8-2.4l-5.5-17.1z"/><path d="M439.7,266.2l5.3,14.9l.8-2.5l-5.3-14.8z"/><path class="c" d="M445,281.1l5.2,12.7l.7-2.5l-5.1-12.7z"/><path class="c" d="M450.2,293.8l5,10.8l.7-2.5l-5-10.8z"/><path class="c" d="M455.2,304.6l5,8.9l.7-2.5l-5-8.9z"/><path class="c" d="M460.2,313.5l4.9,7.2l.6-2.5l-4.8-7.2z"/><path class="c" d="M465.1,320.7l4.8,5.5l.6-2.6l-4.8-5.4z"/><path class="c" d="M469.9,326.2l4.8,3.9l.6-2.6l-4.8-3.9z"/><path class="b" d="M474.7,330.1l4.8,2.2l.6-2.6l-4.8-2.2z"/><path class="b" d="M479.5,332.3l4.9,.7l.6-2.6l-4.9-.7z"/><path class="b" d="M484.4,333l4.9-1l.6-2.6l-4.9,1z"/><path class="c" d="M489.3,332l5-2.6l.6-2.6l-5,2.6z"/><path class="c" d="M494.3,329.4l5.1-4.2l.6-2.6l-5.1,4.2z"/><path d="M499.4,325.2l5.3-5.9l.5-2.6l-5.2,5.9z"/><path d="M504.7,319.3l5.5-7.7l.5-2.6l-5.5,7.7z"/><path d="M510.2,311.6l5.6-9.6l.5-2.6l-5.6,9.6z"/><path d="M515.8,302l5.9-11.7l.5-2.5l-5.9,11.6z"/><path d="M521.7,290.3l6.2-13.8l.5-2.5l-6.2,13.8z"/><path d="M527.9,276.5l6.6-16.1l.4-2.6l-6.5,16.2z"/><path d="M534.5,260.4l7-18.8l.4-2.5l-7,18.7z"/><path d="M541.5,241.6l7.4-21.6l.4-2.5l-7.4,21.6z"/><path d="M548.9,220l8-24.8l.4-2.5l-8,24.8z"/><path d="M556.9,195.2l8.6-28.5l.4-2.4l-8.6,28.4z"/><path d="M565.5,166.7l9.5-32.6l.3-2.3l-9.4,32.5z"/><path d="M575,134.1l10.3-37.5l.3-2.2l-10.3,37.4z"/><path d="M585.3,96.6l11.4-43.1l.2-2l-11.3,42.9z"/><path d="M392.9,86l7.9,37l1.1-2.2l-7.9-36.8z"/><path d="M400.8,123l7.3,32.5l1-2.2l-7.2-32.5z"/><path d="M408.1,155.5l6.9,28.8l.9-2.3l-6.8-28.7z"/><path d="M415,184.3l6.4,25.4l.9-2.4l-6.4-25.3z"/><path d="M421.4,209.7l6.1,22.3l.9-2.4l-6.1-22.3z"/><path d="M427.5,232l5.8,19.6l.9-2.5l-5.8-19.5z"/><path d="M433.3,251.6l5.6,17.1l.8-2.5l-5.5-17.1z"/><path d="M438.9,268.7l5.4,14.9l.7-2.5l-5.3-14.9z"/><path d="M444.3,283.6l5.2,12.7l.7-2.5l-5.2-12.7z"/><path class="c" d="M449.5,296.3l5,10.8l.7-2.5l-5-10.8z"/><path class="c" d="M454.5,307.1l5,9l.7-2.6l-5-8.9z"/><path class="c" d="M459.5,316.1l4.9,7.2l.7-2.6l-4.9-7.2z"/><path class="c" d="M464.4,323.3l4.9,5.5l.6-2.6l-4.8-5.5z"/><path class="c" d="M469.3,328.8l4.8,3.9l.6-2.6l-4.8-3.9z"/><path class="b" d="M474.1,332.7l4.8,2.2l.6-2.6l-4.8-2.2z"/><path class="b" d="M478.9,334.9l4.9,.7l.6-2.6l-4.9-.7z"/><path class="b" d="M483.8,335.6l4.9-1l.6-2.6l-4.9,1z"/><path class="c" d="M488.7,334.6l5.1-2.5l.5-2.7l-5,2.6z"/><path class="c" d="M493.8,332.1l5.1-4.3l.5-2.6l-5.1,4.2z"/><path d="M498.9,327.8l5.3-5.9l.5-2.6l-5.3,5.9z"/><path d="M504.2,321.9l5.5-7.7l.5-2.6l-5.5,7.7z"/><path d="M509.7,314.2l5.6-9.6l.5-2.6l-5.6,9.6z"/><path d="M515.3,304.6l6-11.7l.4-2.6l-5.9,11.7z"/><path d="M521.3,292.9l6.2-13.8l.4-2.6l-6.2,13.8z"/><path d="M527.5,279.1l6.6-16.1l.4-2.6l-6.6,16.1z"/><path d="M534.1,263l6.9-18.8l.5-2.6l-7,18.8z"/><path d="M541,244.2l7.5-21.7l.4-2.5l-7.4,21.6z"/><path d="M548.5,222.5l8-24.9l.4-2.4l-8,24.8z"/><path d="M556.5,197.6l8.7-28.5l.3-2.4l-8.6,28.5z"/><path d="M565.2,169.1l9.5-32.7l.3-2.3l-9.5,32.6z"/><path d="M574.7,136.4l10.3-37.6l.3-2.2l-10.3,37.5z"/><path d="M585,98.8l11.5-43.2l.2-2.1l-11.4,43.1z"/><path d="M391.7,88.1l8,37l1.1-2.1l-7.9-37z"/><path d="M399.7,125.1l7.4,32.7l1-2.3l-7.3-32.5z"/><path d="M407.1,157.8l6.9,28.8l1-2.3l-6.9-28.8z"/><path d="M414,186.6l6.5,25.4l.9-2.3l-6.4-25.4z"/><path d="M420.5,212l6.1,22.4l.9-2.4l-6.1-22.3z"/><path d="M426.6,234.4l5.9,19.7l.8-2.5l-5.8-19.6z"/><path d="M432.5,254.1l5.6,17.1l.8-2.5l-5.6-17.1z"/><path class="c" d="M438.1,271.2l5.4,14.9l.8-2.5l-5.4-14.9z"/><path class="c" d="M443.5,286.1l5.2,12.8l.8-2.6l-5.2-12.7z"/><path class="c" d="M448.7,298.9l5.1,10.8l.7-2.6l-5-10.8z"/><path class="c" d="M453.8,309.7l5,9l.7-2.6l-5-9z"/><path class="c" d="M458.8,318.7l4.9,7.2l.7-2.6l-4.9-7.2z"/><path class="c" d="M463.7,325.9l4.9,5.5l.7-2.6l-4.9-5.5z"/><path class="b" d="M468.6,331.4l4.9,3.9l.6-2.6l-4.8-3.9z"/><path class="b" d="M473.5,335.3l4.8,2.2l.6-2.6l-4.8-2.2z"/><path class="b" d="M478.3,337.5l4.9,.7l.6-2.6l-4.9-.7z"/><path class="b" d="M483.2,338.2l5-.9l.5-2.7l-4.9,1z"/><path class="c" d="M488.2,337.3l5-2.6l.6-2.6l-5.1,2.5z"/><path class="c" d="M493.2,334.7l5.2-4.2l.5-2.7l-5.1,4.3z"/><path d="M498.4,330.5l5.3-6l.5-2.6l-5.3,5.9z"/><path d="M503.7,324.5l5.4-7.7l.6-2.6l-5.5,7.7z"/><path d="M509.1,316.8l5.7-9.6l.5-2.6l-5.6,9.6z"/><path d="M514.8,307.2l6-11.6l.5-2.7l-6,11.7z"/><path d="M520.8,295.6l6.2-13.9l.5-2.6l-6.2,13.8z"/><path d="M527,281.7l6.6-16.2l.5-2.5l-6.6,16.1z"/><path d="M533.6,265.5l7-18.8l.4-2.5l-6.9,18.8z"/><path d="M540.6,246.7l7.5-21.6l.4-2.6l-7.5,21.7z"/><path d="M548.1,225.1l8.1-25l.3-2.5l-8,24.9z"/><path d="M556.2,200.1l8.7-28.6l.3-2.4l-8.7,28.5z"/><path d="M564.9,171.5l9.5-32.8l.3-2.3l-9.5,32.7z"/><path d="M574.4,138.7l10.4-37.6l.2-2.3l-10.3,37.6z"/><path d="M584.8,101.1l11.5-43.4l.2-2.1l-11.5,43.2z"/><path d="M390.5,90.1l8.1,37.2l1.1-2.2l-8-37z"/><path d="M398.6,127.3l7.4,32.8l1.1-2.3l-7.4-32.7z"/><path d="M406,160.1l7,28.9l1-2.4l-6.9-28.8z"/><path d="M413,189l6.5,25.4l1-2.4l-6.5-25.4z"/><path d="M419.5,214.4l6.2,22.5l.9-2.5l-6.1-22.4z"/><path d="M425.7,236.9l5.9,19.6l.9-2.4l-5.9-19.7z"/><path d="M431.6,256.5l5.7,17.2l.8-2.5l-5.6-17.1z"/><path class="c" d="M437.3,273.7l5.4,15l.8-2.6l-5.4-14.9z"/><path class="c" d="M442.7,288.7l5.3,12.8l.7-2.6l-5.2-12.8z"/><path class="c" d="M448,301.5l5.1,10.8l.7-2.6l-5.1-10.8z"/><path class="c" d="M453.1,312.3l5,9l.7-2.6l-5-9z"/><path class="c" d="M458.1,321.3l4.9,7.2l.7-2.6l-4.9-7.2z"/><path class="c" d="M463,328.5l4.9,5.5l.7-2.6l-4.9-5.5z"/><path class="b" d="M467.9,334l4.9,3.9l.7-2.6l-4.9-3.9z"/><path class="b" d="M472.8,337.9l4.9,2.3l.6-2.7l-4.8-2.2z"/><path class="b" d="M477.7,340.2l4.9,.6l.6-2.6l-4.9-.7z"/><path class="b" d="M482.6,340.8l5-.9l.6-2.6l-5,.9z"/><path class="c" d="M487.6,339.9l5.1-2.5l.5-2.7l-5,2.6z"/><path class="c" d="M492.7,337.4l5.1-4.3l.6-2.6l-5.2,4.2z"/><path d="M497.8,333.1l5.3-5.9l.6-2.7l-5.3,6z"/><path d="M503.1,327.2l5.5-7.7l.5-2.7l-5.4,7.7z"/><path d="M508.6,319.5l5.7-9.7l.5-2.6l-5.7,9.6z"/><path d="M514.3,309.8l6-11.6l.5-2.6l-6,11.6z"/><path d="M520.3,298.2l6.3-13.8l.4-2.7l-6.2,13.9z"/><path d="M526.6,284.4l6.6-16.2l.4-2.7l-6.6,16.2z"/><path d="M533.2,268.2l7-18.9l.4-2.6l-7,18.8z"/><path d="M540.2,249.3l7.5-21.7l.4-2.5l-7.5,21.6z"/><path d="M547.7,227.6l8.1-25l.4-2.5l-8.1,25z"/><path d="M555.8,202.6l8.7-28.6l.4-2.5l-8.7,28.6z"/><path d="M564.5,174l9.6-32.9l.3-2.4l-9.5,32.8z"/><path d="M574.1,141.1l10.4-37.8l.3-2.2l-10.4,37.6z"/><path d="M584.5,103.3l11.6-43.5l.2-2.1l-11.5,43.4z"/><path class="c" d="M380.5,49.8l8.8,42.4l1.2-2.1l-8.7-42.3z"/><path d="M389.3,92.2l8.2,37.3l1.1-2.2l-8.1-37.2z"/><path d="M397.5,129.5l7.5,32.9l1-2.3l-7.4-32.8z"/><path d="M405,162.4l7,28.9l1-2.3l-7-28.9z"/><path d="M412,191.3l6.6,25.6l.9-2.5l-6.5-25.4z"/><path d="M418.6,216.9l6.2,22.4l.9-2.4l-6.2-22.5z"/><path d="M424.8,239.3l6,19.8l.8-2.6l-5.9-19.6z"/><path class="c" d="M430.8,259.1l5.6,17.2l.9-2.6l-5.7-17.2z"/><path class="c" d="M436.4,276.3l5.5,14.9l.8-2.5l-5.4-15z"/><path class="c" d="M441.9,291.2l5.3,12.9l.8-2.6l-5.3-12.8z"/><path class="c" d="M447.2,304.1l5.2,10.8l.7-2.6l-5.1-10.8z"/><path class="c" d="M452.4,314.9l5,9l.7-2.6l-5-9z"/><path class="c" d="M457.4,323.9l5,7.2l.6-2.6l-4.9-7.2z"/><path class="c" d="M462.4,331.1l4.9,5.6l.6-2.7l-4.9-5.5z"/><path class="b" d="M467.3,336.7l4.9,3.9l.6-2.7l-4.9-3.9z"/><path class="b" d="M472.2,340.6l4.9,2.2l.6-2.6l-4.9-2.3z"/><path class="b" d="M477.1,342.8l4.9,.7l.6-2.7l-4.9-.6z"/><path class="b" d="M482,343.5l5-.9l.6-2.7l-5,.9z"/><path class="c" d="M487,342.6l5.1-2.6l.6-2.6l-5.1,2.5z"/><path class="c" d="M492.1,340l5.2-4.2l.5-2.7l-5.1,4.3z"/><path d="M497.3,335.8l5.3-5.9l.5-2.7l-5.3,5.9z"/><path d="M502.6,329.9l5.5-7.7l.5-2.7l-5.5,7.7z"/><path d="M508.1,322.2l5.7-9.7l.5-2.7l-5.7,9.7z"/><path d="M513.8,312.5l6-11.6l.5-2.7l-6,11.6z"/><path d="M519.8,300.9l6.3-13.9l.5-2.6l-6.3,13.8z"/><path d="M526.1,287l6.6-16.2l.5-2.6l-6.6,16.2z"/><path d="M532.7,270.8l7.1-18.9l.4-2.6l-7,18.9z"/><path d="M539.8,251.9l7.5-21.7l.4-2.6l-7.5,21.7z"/><path d="M547.3,230.2l8.1-25l.4-2.6l-8.1,25z"/><path d="M555.4,205.2l8.8-28.8l.3-2.4l-8.7,28.6z"/><path d="M564.2,176.4l9.5-32.9l.4-2.4l-9.6,32.9z"/><path d="M573.7,143.5l10.6-37.9l.2-2.3l-10.4,37.8z"/><path d="M584.3,105.6l11.6-43.6l.2-2.2l-11.6,43.5z"/><path class="c" d="M379.2,51.8l8.9,42.6l1.2-2.2l-8.8-42.4z"/><path class="c" d="M388.1,94.4l8.2,37.4l1.2-2.3l-8.2-37.3z"/><path class="c" d="M396.3,131.8l7.6,32.9l1.1-2.3l-7.5-32.9z"/><path d="M403.9,164.7l7.1,29l1-2.4l-7-28.9z"/><path d="M411,193.7l6.7,25.6l.9-2.4l-6.6-25.6z"/><path d="M417.7,219.3l6.2,22.5l.9-2.5l-6.2-22.4z"/><path d="M423.9,241.8l6,19.8l.9-2.5l-6-19.8z"/><path d="M429.9,261.6l5.7,17.2l.8-2.5l-5.6-17.2z"/><path class="c" d="M435.6,278.8l5.5,15l.8-2.6l-5.5-14.9z"/><path class="c" d="M441.1,293.8l5.3,12.9l.8-2.6l-5.3-12.9z"/><path class="c" d="M446.4,306.7l5.2,10.8l.8-2.6l-5.2-10.8z"/><path class="c" d="M451.6,317.5l5.1,9.1l.7-2.7l-5-9z"/><path class="c" d="M456.7,326.6l5,7.2l.7-2.7l-5-7.2z"/><path class="c" d="M461.7,333.8l4.9,5.5l.7-2.6l-4.9-5.6z"/><path class="b" d="M466.6,339.3l4.9,3.9l.7-2.6l-4.9-3.9z"/><path class="b" d="M471.5,343.2l5,2.3l.6-2.7l-4.9-2.2z"/><path class="b" d="M476.5,345.5l4.9,.7l.6-2.7l-4.9-.7z"/><path class="b" d="M481.4,346.2l5-.9l.6-2.7l-5,.9z"/><path class="c" d="M486.4,345.3l5.1-2.6l.6-2.7l-5.1,2.6z"/><path class="c" d="M491.5,342.7l5.2-4.2l.6-2.7l-5.2,4.2z"/><path d="M496.7,338.5l5.4-5.9l.5-2.7l-5.3,5.9z"/><path d="M502.1,332.6l5.5-7.7l.5-2.7l-5.5,7.7z"/><path d="M507.6,324.9l5.7-9.7l.5-2.7l-5.7,9.7z"/><path d="M513.3,315.2l6-11.7l.5-2.6l-6,11.6z"/><path d="M519.3,303.5l6.3-13.8l.5-2.7l-6.3,13.9z"/><path d="M525.6,289.7l6.7-16.3l.4-2.6l-6.6,16.2z"/><path d="M532.3,273.4l7.1-18.8l.4-2.7l-7.1,18.9z"/><path d="M539.4,254.6l7.5-21.8l.4-2.6l-7.5,21.7z"/><path d="M546.9,232.8l8.1-25.1l.4-2.5l-8.1,25z"/><path d="M555,207.7l8.8-28.8l.4-2.5l-8.8,28.8z"/><path d="M563.8,178.9l9.6-33l.3-2.4l-9.5,32.9z"/><path d="M573.4,145.9l10.6-38l.3-2.3l-10.6,37.9z"/><path d="M584,107.9l11.7-43.7l.2-2.2l-11.6,43.6z"/><path class="c" d="M377.9,53.8l9,42.7l1.2-2.1l-8.9-42.6z"/><path d="M386.9,96.5l8.3,37.5l1.1-2.2l-8.2-37.4z"/><path d="M395.2,134l7.7,33l1-2.3l-7.6-32.9z"/><path d="M402.9,167l7.1,29.1l1-2.4l-7.1-29z"/><path d="M410,196.1l6.7,25.7l1-2.5l-6.7-25.6z"/><path d="M416.7,221.8l6.3,22.5l.9-2.5l-6.2-22.5z"/><path d="M423,244.3l6,19.8l.9-2.5l-6-19.8z"/><path class="c" d="M429,264.1l5.8,17.3l.8-2.6l-5.7-17.2z"/><path class="c" d="M434.8,281.4l5.5,15l.8-2.6l-5.5-15z"/><path class="c" d="M440.3,296.4l5.4,12.9l.7-2.6l-5.3-12.9z"/><path class="c" d="M445.7,309.3l5.2,10.9l.7-2.7l-5.2-10.8z"/><path class="c" d="M450.9,320.2l5.1,9l.7-2.6l-5.1-9.1z"/><path class="c" d="M456,329.2l5,7.3l.7-2.7l-5-7.2z"/><path class="c" d="M461,336.5l5,5.5l.6-2.7l-4.9-5.5z"/><path class="b" d="M466,342l4.9,4l.6-2.8l-4.9-3.9z"/><path class="b" d="M470.9,346l4.9,2.2l.7-2.7l-5-2.3z"/><path class="b" d="M475.8,348.2l5,.7l.6-2.7l-4.9-.7z"/><path class="b" d="M480.8,348.9l5-.9l.6-2.7l-5,.9z"/><path class="c" d="M485.8,348l5.1-2.5l.6-2.8l-5.1,2.6z"/><path class="c" d="M490.9,345.5l5.3-4.2l.5-2.8l-5.2,4.2z"/><path d="M496.2,341.3l5.3-6l.6-2.7l-5.4,5.9z"/><path d="M501.5,335.3l5.6-7.7l.5-2.7l-5.5,7.7z"/><path d="M507.1,327.6l5.7-9.7l.5-2.7l-5.7,9.7z"/><path d="M512.8,317.9l6-11.6l.5-2.8l-6,11.7z"/><path d="M518.8,306.3l6.4-13.9l.4-2.7l-6.3,13.8z"/><path d="M525.2,292.4l6.6-16.3l.5-2.7l-6.7,16.3z"/><path d="M531.8,276.1l7.1-18.9l.5-2.6l-7.1,18.8z"/><path d="M538.9,257.2l7.6-21.8l.4-2.6l-7.5,21.8z"/><path d="M546.5,235.4l8.2-25.1l.3-2.6l-8.1,25.1z"/><path d="M554.7,210.3l8.8-28.9l.3-2.5l-8.8,28.8z"/><path d="M563.5,181.4l9.6-33.1l.3-2.4l-9.6,33z"/><path d="M573.1,148.3l10.6-38.1l.3-2.3l-10.6,38z"/><path d="M583.7,110.2l11.7-43.9l.3-2.1l-11.7,43.7z"/><path class="c" d="M376.6,55.8l9.1,42.9l1.2-2.2l-9-42.7z"/><path class="c" d="M385.7,98.7l8.3,37.6l1.2-2.3l-8.3-37.5z"/><path class="c" d="M394,136.3l7.8,33.1l1.1-2.4l-7.7-33z"/><path class="c" d="M401.8,169.4l7.2,29.2l1-2.5l-7.1-29.1z"/><path d="M409,198.6l6.7,25.7l1-2.5l-6.7-25.7z"/><path class="c" d="M415.7,224.3l6.4,22.6l.9-2.6l-6.3-22.5z"/><path d="M422.1,246.9l6.1,19.8l.8-2.6l-6-19.8z"/><path class="c" d="M428.2,266.7l5.7,17.3l.9-2.6l-5.8-17.3z"/><path class="c" d="M433.9,284l5.6,15.1l.8-2.7l-5.5-15z"/><path class="c" d="M439.5,299.1l5.4,12.9l.8-2.7l-5.4-12.9z"/><path class="c" d="M444.9,312l5.2,10.9l.8-2.7l-5.2-10.9z"/><path class="c" d="M450.1,322.9l5.2,9l.7-2.7l-5.1-9z"/><path class="c" d="M455.3,331.9l5,7.3l.7-2.7l-5-7.3z"/><path class="c" d="M460.3,339.2l5,5.6l.7-2.8l-5-5.5z"/><path class="b" d="M465.3,344.8l4.9,3.9l.7-2.7l-4.9-4z"/><path class="b" d="M470.2,348.7l5,2.3l.6-2.8l-4.9-2.2z"/><path class="b" d="M475.2,351l5,.7l.6-2.8l-5-.7z"/><path class="b" d="M480.2,351.7l5-.9l.6-2.8l-5,.9z"/><path class="c" d="M485.2,350.8l5.2-2.6l.5-2.7l-5.1,2.5z"/><path class="c" d="M490.4,348.2l5.2-4.2l.6-2.7l-5.3,4.2z"/><path d="M495.6,344l5.4-5.9l.5-2.8l-5.3,6z"/><path d="M501,338.1l5.5-7.8l.6-2.7l-5.6,7.7z"/><path d="M506.5,330.3l5.8-9.6l.5-2.8l-5.7,9.7z"/><path d="M512.3,320.7l6-11.7l.5-2.7l-6,11.6z"/><path d="M518.3,309l6.4-13.9l.5-2.7l-6.4,13.9z"/><path d="M524.7,295.1l6.7-16.3l.4-2.7l-6.6,16.3z"/><path d="M531.4,278.8l7.1-18.9l.4-2.7l-7.1,18.9z"/><path d="M538.5,259.9l7.6-21.9l.4-2.6l-7.6,21.8z"/><path d="M546.1,238l8.2-25.1l.4-2.6l-8.2,25.1z"/><path d="M554.3,212.9l8.8-28.9l.4-2.6l-8.8,28.9z"/><path d="M563.1,184l9.7-33.2l.3-2.5l-9.6,33.1z"/><path d="M572.8,150.8l10.6-38.2l.3-2.4l-10.6,38.1z"/><path d="M583.4,112.6l11.8-44l.2-2.3l-11.7,43.9z"/><path class="c" d="M375.3,57.8l9.2,43l1.2-2.1l-9.1-42.9z"/><path d="M384.5,100.8l8.4,37.8l1.1-2.3l-8.3-37.6z"/><path class="c" d="M392.9,138.6l7.8,33.2l1.1-2.4l-7.8-33.1z"/><path class="c" d="M400.7,171.8l7.2,29.2l1.1-2.4l-7.2-29.2z"/><path class="c" d="M407.9,201l6.8,25.8l1-2.5l-6.7-25.7z"/><path d="M414.7,226.8l6.5,22.6l.9-2.5l-6.4-22.6z"/><path class="c" d="M421.2,249.4l6.1,19.9l.9-2.6l-6.1-19.8z"/><path class="c" d="M427.3,269.3l5.8,17.4l.8-2.7l-5.7-17.3z"/><path class="c" d="M433.1,286.7l5.6,15l.8-2.6l-5.6-15.1z"/><path class="c" d="M438.7,301.7l5.4,12.9l.8-2.6l-5.4-12.9z"/><path class="c" d="M444.1,314.6l5.3,11l.7-2.7l-5.2-10.9z"/><path class="c" d="M449.4,325.6l5.1,9l.8-2.7l-5.2-9z"/><path class="c" d="M454.5,334.6l5.1,7.3l.7-2.7l-5-7.3z"/><path class="c" d="M459.6,341.9l5,5.6l.7-2.7l-5-5.6z"/><path class="b" d="M464.6,347.5l5,3.9l.6-2.7l-4.9-3.9z"/><path class="b" d="M469.6,351.4l5,2.3l.6-2.7l-5-2.3z"/><path class="b" d="M474.6,353.7l5,.7l.6-2.7l-5-.7z"/><path class="b" d="M479.6,354.4l5-.9l.6-2.7l-5,.9z"/><path class="c" d="M484.6,353.5l5.2-2.5l.6-2.8l-5.2,2.6z"/><path class="c" d="M489.8,351l5.2-4.2l.6-2.8l-5.2,4.2z"/><path d="M495,346.8l5.4-6l.6-2.7l-5.4,5.9z"/><path d="M500.4,340.8l5.6-7.7l.5-2.8l-5.5,7.8z"/><path d="M506,333.1l5.8-9.7l.5-2.7l-5.8,9.6z"/><path d="M511.8,323.4l6-11.7l.5-2.7l-6,11.7z"/><path d="M517.8,311.7l6.4-13.9l.5-2.7l-6.4,13.9z"/><path d="M524.2,297.8l6.7-16.3l.5-2.7l-6.7,16.3z"/><path d="M530.9,281.5l7.1-18.9l.5-2.7l-7.1,18.9z"/><path d="M538,262.6l7.7-21.9l.4-2.7l-7.6,21.9z"/><path d="M545.7,240.7l8.2-25.2l.4-2.6l-8.2,25.1z"/><path d="M553.9,215.5l8.9-29l.3-2.5l-8.8,28.9z"/><path d="M562.8,186.5l9.7-33.2l.3-2.5l-9.7,33.2z"/><path d="M572.5,153.3l10.7-38.3l.2-2.4l-10.6,38.2z"/><path d="M583.2,115l11.8-44.2l.2-2.2l-11.8,44z"/><path class="c" d="M373.9,59.9l9.3,43.1l1.3-2.2l-9.2-43z"/><path class="c" d="M383.2,103l8.5,37.9l1.2-2.3l-8.4-37.8z"/><path class="c" d="M391.7,140.9l7.9,33.3l1.1-2.4l-7.8-33.2z"/><path class="c" d="M399.6,174.2l7.3,29.3l1-2.5l-7.2-29.2z"/><path d="M406.9,203.5l6.9,25.8l.9-2.5l-6.8-25.8z"/><path class="c" d="M413.8,229.3l6.4,22.7l1-2.6l-6.5-22.6z"/><path class="c" d="M420.2,252l6.2,19.9l.9-2.6l-6.1-19.9z"/><path class="c" d="M426.4,271.9l5.8,17.4l.9-2.6l-5.8-17.4z"/><path class="c" d="M432.2,289.3l5.7,15.1l.8-2.7l-5.6-15z"/><path class="c" d="M437.9,304.4l5.4,12.9l.8-2.7l-5.4-12.9z"/><path class="c" d="M443.3,317.3l5.3,11l.8-2.7l-5.3-11z"/><path class="c" d="M448.6,328.3l5.2,9l.7-2.7l-5.1-9z"/><path class="c" d="M453.8,337.3l5.1,7.3l.7-2.7l-5.1-7.3z"/><path class="c" d="M458.9,344.6l5,5.6l.7-2.7l-5-5.6z"/><path class="b" d="M463.9,350.2l5,4l.7-2.8l-5-3.9z"/><path class="b" d="M468.9,354.2l5,2.3l.7-2.8l-5-2.3z"/><path class="b" d="M473.9,356.5l5,.7l.7-2.8l-5-.7z"/><path class="b" d="M478.9,357.2l5.1-.9l.6-2.8l-5,.9z"/><path class="c" d="M484,356.3l5.2-2.5l.6-2.8l-5.2,2.5z"/><path class="c" d="M489.2,353.8l5.3-4.2l.5-2.8l-5.2,4.2z"/><path d="M494.5,349.6l5.4-6l.5-2.8l-5.4,6z"/><path d="M499.9,343.6l5.6-7.7l.5-2.8l-5.6,7.7z"/><path d="M505.5,335.9l5.8-9.7l.5-2.8l-5.8,9.7z"/><path d="M511.3,326.2l6-11.7l.5-2.8l-6,11.7z"/><path d="M517.3,314.5l6.4-13.9l.5-2.8l-6.4,13.9z"/><path d="M523.7,300.6l6.7-16.3l.5-2.8l-6.7,16.3z"/><path d="M530.4,284.3l7.2-19l.4-2.7l-7.1,18.9z"/><path d="M537.6,265.3l7.7-21.9l.4-2.7l-7.7,21.9z"/><path d="M545.3,243.4l8.2-25.3l.4-2.6l-8.2,25.2z"/><path d="M553.5,218.1l8.9-29l.4-2.6l-8.9,29z"/><path d="M562.4,189.1l9.8-33.3l.3-2.5l-9.7,33.2z"/><path d="M572.2,155.8l10.7-38.4l.3-2.4l-10.7,38.3z"/><path d="M582.9,117.4l11.9-44.3l.2-2.3l-11.8,44.2z"/><path class="c" d="M372.6,62l9.3,43.3l1.3-2.3l-9.3-43.1z"/><path class="c" d="M381.9,105.3l8.6,37.9l1.2-2.3l-8.5-37.9z"/><path class="c" d="M390.5,143.2l8,33.4l1.1-2.4l-7.9-33.3z"/><path class="c" d="M398.5,176.6l7.4,29.4l1-2.5l-7.3-29.3z"/><path class="c" d="M405.9,206l6.9,25.9l1-2.6l-6.9-25.8z"/><path class="c" d="M412.8,231.9l6.5,22.7l.9-2.6l-6.4-22.7z"/><path class="c" d="M419.3,254.6l6.2,20l.9-2.7l-6.2-19.9z"/><path class="c" d="M425.5,274.6l5.9,17.4l.8-2.7l-5.8-17.4z"/><path class="c" d="M431.4,292l5.6,15.1l.9-2.7l-5.7-15.1z"/><path class="c" d="M437,307.1l5.5,12.9l.8-2.7l-5.4-12.9z"/><path class="c" d="M442.5,320l5.3,11l.8-2.7l-5.3-11z"/><path class="c" d="M447.8,331l5.3,9.1l.7-2.8l-5.2-9z"/><path class="c" d="M453.1,340.1l5.1,7.3l.7-2.8l-5.1-7.3z"/><path class="c" d="M458.2,347.4l5,5.6l.7-2.8l-5-5.6z"/><path class="b" d="M463.2,353l5,4l.7-2.8l-5-4z"/><path class="b" d="M468.2,357l5.1,2.3l.6-2.8l-5-2.3z"/><path class="b" d="M473.3,359.3l5,.7l.6-2.8l-5-.7z"/><path class="b" d="M478.3,360l5.1-.9l.6-2.8l-5.1,.9z"/><path class="c" d="M483.4,359.1l5.2-2.5l.6-2.8l-5.2,2.5z"/><path class="c" d="M488.6,356.6l5.3-4.2l.6-2.8l-5.3,4.2z"/><path d="M493.9,352.4l5.4-6l.6-2.8l-5.4,6z"/><path d="M499.3,346.4l5.6-7.7l.6-2.8l-5.6,7.7z"/><path d="M504.9,338.7l5.9-9.7l.5-2.8l-5.8,9.7z"/><path d="M510.8,329l6-11.7l.5-2.8l-6,11.7z"/><path d="M516.8,317.3l6.4-13.9l.5-2.8l-6.4,13.9z"/><path d="M523.2,303.4l6.8-16.3l.4-2.8l-6.7,16.3z"/><path d="M530,287.1l7.2-19l.4-2.8l-7.2,19z"/><path d="M537.2,268.1l7.6-22l.5-2.7l-7.7,21.9z"/><path d="M544.8,246.1l8.3-25.3l.4-2.7l-8.2,25.3z"/><path d="M553.1,220.8l9-29.1l.3-2.6l-8.9,29z"/><path d="M562.1,191.7l9.7-33.4l.4-2.5l-9.8,33.3z"/><path d="M571.8,158.3l10.8-38.5l.3-2.4l-10.7,38.4z"/><path d="M582.6,119.8l11.9-44.5l.3-2.2l-11.9,44.3z"/><path class="c" d="M371.2,64.1l9.5,43.4l1.2-2.2l-9.3-43.3z"/><path class="c" d="M380.7,107.5l8.7,38.1l1.1-2.4l-8.6-37.9z"/><path class="c" d="M389.4,145.6l8,33.5l1.1-2.5l-8-33.4z"/><path class="c" d="M397.4,179.1l7.4,29.4l1.1-2.5l-7.4-29.4z"/><path class="c" d="M404.8,208.5l7,26l1-2.6l-6.9-25.9z"/><path class="c" d="M411.8,234.5l6.5,22.8l1-2.7l-6.5-22.7z"/><path class="c" d="M418.3,257.3l6.3,19.9l.9-2.6l-6.2-20z"/><path class="c" d="M424.6,277.2l5.9,17.5l.9-2.7l-5.9-17.4z"/><path class="c" d="M430.5,294.7l5.7,15.1l.8-2.7l-5.6-15.1z"/><path class="c" d="M436.2,309.8l5.5,13l.8-2.8l-5.5-12.9z"/><path class="c" d="M441.7,322.8l5.4,11l.7-2.8l-5.3-11z"/><path class="c" d="M447.1,333.8l5.2,9.1l.8-2.8l-5.3-9.1z"/><path class="c" d="M452.3,342.9l5.1,7.3l.8-2.8l-5.1-7.3z"/><path class="b" d="M457.4,350.2l5.1,5.6l.7-2.8l-5-5.6z"/><path class="b" d="M462.5,355.8l5.1,4l.6-2.8l-5-4z"/><path class="b" d="M467.6,359.8l5,2.3l.7-2.8l-5.1-2.3z"/><path class="b" d="M472.6,362.1l5.1,.7l.6-2.8l-5-.7z"/><path class="b" d="M477.7,362.8l5.1-.9l.6-2.8l-5.1,.9z"/><path class="c" d="M482.8,361.9l5.2-2.5l.6-2.8l-5.2,2.5z"/><path class="c" d="M488,359.4l5.3-4.2l.6-2.8l-5.3,4.2z"/><path d="M493.3,355.2l5.4-5.9l.6-2.9l-5.4,6z"/><path d="M498.7,349.3l5.7-7.8l.5-2.8l-5.6,7.7z"/><path d="M504.4,341.5l5.8-9.6l.6-2.9l-5.9,9.7z"/><path d="M510.2,331.9l6.1-11.7l.5-2.9l-6,11.7z"/><path d="M516.3,320.2l6.4-14l.5-2.8l-6.4,13.9z"/><path d="M522.7,306.2l6.8-16.3l.5-2.8l-6.8,16.3z"/><path d="M529.5,289.9l7.2-19.1l.5-2.7l-7.2,19z"/><path d="M536.7,270.8l7.7-21.9l.4-2.8l-7.6,22z"/><path d="M544.4,248.9l8.3-25.4l.4-2.7l-8.3,25.3z"/><path d="M552.7,223.5l9-29.1l.4-2.7l-9,29.1z"/><path d="M561.7,194.4l9.8-33.5l.3-2.6l-9.7,33.4z"/><path d="M571.5,160.9l10.8-38.6l.3-2.5l-10.8,38.5z"/><path d="M582.3,122.3l12-44.6l.2-2.4l-11.9,44.5z"/><path class="c" d="M369.8,66.2l9.6,43.6l1.3-2.3l-9.5-43.4z"/><path class="c" d="M379.4,109.8l8.7,38.2l1.3-2.4l-8.7-38.1z"/><path class="c" d="M388.1,148l8.1,33.5l1.2-2.4l-8-33.5z"/><path class="c" d="M396.2,181.5l7.5,29.6l1.1-2.6l-7.4-29.4z"/><path class="c" d="M403.7,211.1l7.1,26l1-2.6l-7-26z"/><path class="c" d="M410.8,237.1l6.6,22.8l.9-2.6l-6.5-22.8z"/><path class="c" d="M417.4,259.9l6.2,20l1-2.7l-6.3-19.9z"/><path class="c" d="M423.6,279.9l6,17.5l.9-2.7l-5.9-17.5z"/><path class="c" d="M429.6,297.4l5.8,15.2l.8-2.8l-5.7-15.1z"/><path class="c" d="M435.4,312.6l5.5,13l.8-2.8l-5.5-13z"/><path class="c" d="M440.9,325.6l5.4,11l.8-2.8l-5.4-11z"/><path class="c" d="M446.3,336.6l5.3,9.1l.7-2.8l-5.2-9.1z"/><path class="c" d="M451.6,345.7l5.1,7.3l.7-2.8l-5.1-7.3z"/><path class="b" d="M456.7,353l5.1,5.6l.7-2.8l-5.1-5.6z"/><path class="b" d="M461.8,358.6l5.1,4l.7-2.8l-5.1-4z"/><path class="b" d="M466.9,362.6l5.1,2.3l.6-2.8l-5-2.3z"/><path class="b" d="M472,364.9l5,.8l.7-2.9l-5.1-.7z"/><path class="b" d="M477,365.7l5.2-.9l.6-2.9l-5.1,.9z"/><path class="c" d="M482.2,364.8l5.2-2.5l.6-2.9l-5.2,2.5z"/><path class="c" d="M487.4,362.3l5.3-4.2l.6-2.9l-5.3,4.2z"/><path d="M492.7,358.1l5.5-6l.5-2.8l-5.4,5.9z"/><path d="M498.2,352.1l5.6-7.7l.6-2.9l-5.7,7.8z"/><path d="M503.8,344.4l5.9-9.7l.5-2.8l-5.8,9.6z"/><path d="M509.7,334.7l6.1-11.7l.5-2.8l-6.1,11.7z"/><path d="M515.8,323l6.4-13.9l.5-2.9l-6.4,14z"/><path d="M522.2,309.1l6.8-16.4l.5-2.8l-6.8,16.3z"/><path d="M529,292.7l7.2-19l.5-2.9l-7.2,19.1z"/><path d="M536.2,273.7l7.8-22.1l.4-2.7l-7.7,21.9z"/><path d="M544,251.6l8.3-25.4l.4-2.7l-8.3,25.4z"/><path d="M552.3,226.2l9-29.2l.4-2.6l-9,29.1z"/><path d="M561.3,197l9.9-33.6l.3-2.5l-9.8,33.5z"/><path d="M571.2,163.4l10.8-38.7l.3-2.4l-10.8,38.6z"/><path d="M582,124.7l12.1-44.7l.2-2.3l-12,44.6z"/><path class="c" d="M368.4,68.4l9.7,43.7l1.3-2.3l-9.6-43.6z"/><path class="c" d="M378.1,112.1l8.8,38.3l1.2-2.4l-8.7-38.2z"/><path class="c" d="M386.9,150.4l8.2,33.6l1.1-2.5l-8.1-33.5z"/><path class="c" d="M395.1,184l7.6,29.6l1-2.5l-7.5-29.6z"/><path class="c" d="M402.7,213.6l7,26.1l1.1-2.6l-7.1-26z"/><path class="c" d="M409.7,239.7l6.7,22.9l1-2.7l-6.6-22.8z"/><path class="c" d="M416.4,262.6l6.3,20l.9-2.7l-6.2-20z"/><path class="c" d="M422.7,282.6l6,17.5l.9-2.7l-6-17.5z"/><path class="c" d="M428.7,300.1l5.8,15.2l.9-2.7l-5.8-15.2z"/><path class="c" d="M434.5,315.3l5.6,13l.8-2.7l-5.5-13z"/><path class="c" d="M440.1,328.3l5.4,11.1l.8-2.8l-5.4-11z"/><path class="c" d="M445.5,339.4l5.3,9.1l.8-2.8l-5.3-9.1z"/><path class="c" d="M450.8,348.5l5.2,7.4l.7-2.9l-5.1-7.3z"/><path class="b" d="M456,355.9l5.1,5.6l.7-2.9l-5.1-5.6z"/><path class="b" d="M461.1,361.5l5.1,4l.7-2.9l-5.1-4z"/><path class="b" d="M466.2,365.5l5.1,2.3l.7-2.9l-5.1-2.3z"/><path class="b" d="M471.3,367.8l5.1,.7l.6-2.8l-5-.8z"/><path class="b" d="M476.4,368.5l5.1-.8l.7-2.9l-5.2,.9z"/><path class="c" d="M481.5,367.7l5.3-2.5l.6-2.9l-5.2,2.5z"/><path class="c" d="M486.8,365.2l5.3-4.2l.6-2.9l-5.3,4.2z"/><path d="M492.1,361l5.5-6l.6-2.9l-5.5,6z"/><path d="M497.6,355l5.7-7.7l.5-2.9l-5.6,7.7z"/><path d="M503.3,347.3l5.8-9.7l.6-2.9l-5.9,9.7z"/><path d="M509.1,337.6l6.2-11.7l.5-2.9l-6.1,11.7z"/><path d="M515.3,325.9l6.4-14l.5-2.8l-6.4,13.9z"/><path d="M521.7,311.9l6.8-16.4l.5-2.8l-6.8,16.4z"/><path d="M528.5,295.5l7.3-19l.4-2.8l-7.2,19z"/><path d="M535.8,276.5l7.7-22.1l.5-2.8l-7.8,22.1z"/><path d="M543.5,254.4l8.4-25.4l.4-2.8l-8.3,25.4z"/><path d="M551.9,229l9-29.3l.4-2.7l-9,29.2z"/><path d="M560.9,199.7l9.9-33.6l.4-2.7l-9.9,33.6z"/><path d="M570.8,166.1l10.9-38.9l.3-2.5l-10.8,38.7z"/><path d="M581.7,127.2l12.1-44.8l.3-2.4l-12.1,44.7z"/><path class="c" d="M367,70.5l9.8,43.9l1.3-2.3l-9.7-43.7z"/><path class="c" d="M376.8,114.4l8.9,38.4l1.2-2.4l-8.8-38.3z"/><path class="c" d="M385.7,152.8l8.2,33.7l1.2-2.5l-8.2-33.6z"/><path class="c" d="M393.9,186.5l7.7,29.7l1.1-2.6l-7.6-29.6z"/><path class="c" d="M401.6,216.2l7.1,26.1l1-2.6l-7-26.1z"/><path class="c" d="M408.7,242.3l6.7,23l1-2.7l-6.7-22.9z"/><path class="c" d="M415.4,265.3l6.4,20.1l.9-2.8l-6.3-20z"/><path class="c" d="M421.8,285.4l6.1,17.5l.8-2.8l-6-17.5z"/><path class="c" d="M427.9,302.9l5.8,15.2l.8-2.8l-5.8-15.2z"/><path class="c" d="M433.7,318.1l5.6,13.1l.8-2.9l-5.6-13z"/><path class="c" d="M439.3,331.2l5.4,11l.8-2.8l-5.4-11.1z"/><path class="c" d="M444.7,342.2l5.3,9.1l.8-2.8l-5.3-9.1z"/><path class="c" d="M450,351.3l5.3,7.4l.7-2.8l-5.2-7.4z"/><path class="b" d="M455.3,358.7l5.1,5.7l.7-2.9l-5.1-5.6z"/><path class="b" d="M460.4,364.4l5.1,3.9l.7-2.8l-5.1-4z"/><path class="b" d="M465.5,368.3l5.1,2.4l.7-2.9l-5.1-2.3z"/><path class="b" d="M470.6,370.7l5.1,.7l.7-2.9l-5.1-.7z"/><path class="b" d="M475.7,371.4l5.2-.8l.6-2.9l-5.1,.8z"/><path class="c" d="M480.9,370.6l5.3-2.5l.6-2.9l-5.3,2.5z"/><path class="c" d="M486.2,368.1l5.3-4.2l.6-2.9l-5.3,4.2z"/><path d="M491.5,363.9l5.5-6l.6-2.9l-5.5,6z"/><path d="M497,357.9l5.7-7.7l.6-2.9l-5.7,7.7z"/><path d="M502.7,350.2l5.9-9.7l.5-2.9l-5.8,9.7z"/><path d="M508.6,340.5l6.2-11.7l.5-2.9l-6.2,11.7z"/><path d="M514.8,328.8l6.4-14l.5-2.9l-6.4,14z"/><path d="M521.2,314.8l6.9-16.4l.4-2.9l-6.8,16.4z"/><path d="M528.1,298.4l7.2-19.1l.5-2.8l-7.3,19z"/><path d="M535.3,279.3l7.8-22.1l.4-2.8l-7.7,22.1z"/><path d="M543.1,257.2l8.4-25.4l.4-2.8l-8.4,25.4z"/><path d="M551.5,231.8l9.1-29.4l.3-2.7l-9,29.3z"/><path d="M560.6,202.4l9.9-33.7l.3-2.6l-9.9,33.6z"/><path d="M570.5,168.7l10.9-38.9l.3-2.6l-10.9,38.9z"/><path d="M581.4,129.8l12.2-45l.2-2.4l-12.1,44.8z"/><path class="c" d="M365.6,72.7l9.9,44l1.3-2.3l-9.8-43.9z"/><path class="c" d="M375.5,116.7l9,38.6l1.2-2.5l-8.9-38.4z"/><path class="c" d="M384.5,155.3l8.3,33.8l1.1-2.6l-8.2-33.7z"/><path class="c" d="M392.8,189.1l7.7,29.7l1.1-2.6l-7.7-29.7z"/><path class="c" d="M400.5,218.8l7.2,26.2l1-2.7l-7.1-26.1z"/><path class="c" d="M407.7,245l6.7,23l1-2.7l-6.7-23z"/><path class="c" d="M414.4,268l6.4,20.1l1-2.7l-6.4-20.1z"/><path class="c" d="M420.8,288.1l6.2,17.6l.9-2.8l-6.1-17.5z"/><path class="c" d="M427,305.7l5.8,15.2l.9-2.8l-5.8-15.2z"/><path class="c" d="M432.8,320.9l5.6,13.1l.9-2.8l-5.6-13.1z"/><path class="c" d="M438.4,334l5.5,11l.8-2.8l-5.4-11z"/><path class="c" d="M443.9,345l5.4,9.2l.7-2.9l-5.3-9.1z"/><path class="c" d="M449.3,354.2l5.2,7.4l.8-2.9l-5.3-7.4z"/><path class="b" d="M454.5,361.6l5.2,5.6l.7-2.8l-5.1-5.7z"/><path class="b" d="M459.7,367.2l5.1,4l.7-2.9l-5.1-3.9z"/><path class="b" d="M464.8,371.2l5.1,2.4l.7-2.9l-5.1-2.4z"/><path class="b" d="M469.9,373.6l5.2,.8l.6-3l-5.1-.7z"/><path class="b" d="M475.1,374.4l5.2-.9l.6-2.9l-5.2,.8z"/><path class="c" d="M480.3,373.5l5.2-2.5l.7-2.9l-5.3,2.5z"/><path class="c" d="M485.5,371l5.4-4.2l.6-2.9l-5.3,4.2z"/><path d="M490.9,366.8l5.5-5.9l.6-3l-5.5,6z"/><path d="M496.4,360.9l5.7-7.8l.6-2.9l-5.7,7.7z"/><path d="M502.1,353.1l6-9.7l.5-2.9l-5.9,9.7z"/><path d="M508.1,343.4l6.1-11.7l.6-2.9l-6.2,11.7z"/><path d="M514.2,331.7l6.5-14l.5-2.9l-6.4,14z"/><path d="M520.7,317.7l6.9-16.4l.5-2.9l-6.9,16.4z"/><path d="M527.6,301.3l7.3-19.1l.4-2.9l-7.2,19.1z"/><path d="M534.9,282.2l7.8-22.1l.4-2.9l-7.8,22.1z"/><path d="M542.7,260.1l8.4-25.5l.4-2.8l-8.4,25.4z"/><path d="M551.1,234.6l9.1-29.4l.4-2.8l-9.1,29.4z"/><path d="M560.2,205.2l9.9-33.8l.4-2.7l-9.9,33.7z"/><path d="M570.1,171.4l11-39.1l.3-2.5l-10.9,38.9z"/><path d="M581.1,132.3l12.2-45.1l.3-2.4l-12.2,45z"/><path class="c" d="M364.1,74.9l10,44.2l1.4-2.4l-9.9-44z"/><path class="c" d="M374.1,119.1l9.1,38.6l1.3-2.4l-9-38.6z"/><path class="c" d="M383.2,157.7l8.4,34l1.2-2.6l-8.3-33.8z"/><path class="c" d="M391.6,191.7l7.8,29.8l1.1-2.7l-7.7-29.7z"/><path class="c" d="M399.4,221.5l7.2,26.2l1.1-2.7l-7.2-26.2z"/><path class="c" d="M406.6,247.7l6.8,23l1-2.7l-6.7-23z"/><path class="c" d="M413.4,270.7l6.5,20.2l.9-2.8l-6.4-20.1z"/><path class="c" d="M419.9,290.9l6.1,17.6l1-2.8l-6.2-17.6z"/><path class="c" d="M426,308.5l5.9,15.3l.9-2.9l-5.8-15.2z"/><path class="c" d="M431.9,323.8l5.7,13l.8-2.8l-5.6-13.1z"/><path class="c" d="M437.6,336.8l5.5,11.1l.8-2.9l-5.5-11z"/><path class="c" d="M443.1,347.9l5.4,9.2l.8-2.9l-5.4-9.2z"/><path class="c" d="M448.5,357.1l5.3,7.4l.7-2.9l-5.2-7.4z"/><path class="b" d="M453.8,364.5l5.2,5.7l.7-3l-5.2-5.6z"/><path class="b" d="M459,370.2l5.1,4l.7-3l-5.1-4z"/><path class="b" d="M464.1,374.2l5.2,2.3l.6-2.9l-5.1-2.4z"/><path class="b" d="M469.3,376.5l5.1,.8l.7-2.9l-5.2-.8z"/><path class="b" d="M474.4,377.3l5.2-.9l.7-2.9l-5.2,.9z"/><path class="c" d="M479.6,376.4l5.3-2.5l.6-2.9l-5.2,2.5z"/><path class="c" d="M484.9,373.9l5.4-4.1l.6-3l-5.4,4.2z"/><path class="c" d="M490.3,369.8l5.6-6l.5-2.9l-5.5,5.9z"/><path d="M495.9,363.8l5.7-7.7l.5-3l-5.7,7.8z"/><path d="M501.6,356.1l5.9-9.7l.6-3l-6,9.7z"/><path d="M507.5,346.4l6.2-11.7l.5-3l-6.1,11.7z"/><path d="M513.7,334.7l6.5-14l.5-3l-6.5,14z"/><path d="M520.2,320.7l6.9-16.5l.5-2.9l-6.9,16.4z"/><path d="M527.1,304.2l7.3-19.1l.5-2.9l-7.3,19.1z"/><path d="M534.4,285.1l7.8-22.1l.5-2.9l-7.8,22.1z"/><path d="M542.2,263l8.4-25.6l.5-2.8l-8.4,25.5z"/><path d="M550.6,237.4l9.2-29.4l.4-2.8l-9.1,29.4z"/><path d="M559.8,208l10-33.9l.3-2.7l-9.9,33.8z"/><path d="M569.8,174.1l11-39.2l.3-2.6l-11,39.1z"/><path d="M580.8,134.9l12.3-45.3l.2-2.4l-12.2,45.1z"/><path class="c" d="M362.7,77.2l10.1,44.3l1.3-2.4l-10-44.2z"/><path class="c" d="M372.8,121.5l9.2,38.7l1.2-2.5l-9.1-38.6z"/><path class="c" d="M382,160.2l8.4,34l1.2-2.5l-8.4-34z"/><path class="c" d="M390.4,194.2l7.8,29.9l1.2-2.6l-7.8-29.8z"/><path class="c" d="M398.2,224.1l7.4,26.3l1-2.7l-7.2-26.2z"/><path class="c" d="M405.6,250.4l6.8,23.1l1-2.8l-6.8-23z"/><path class="c" d="M412.4,273.5l6.5,20.2l1-2.8l-6.5-20.2z"/><path class="c" d="M418.9,293.7l6.2,17.7l.9-2.9l-6.1-17.6z"/><path class="c" d="M425.1,311.4l6,15.2l.8-2.8l-5.9-15.3z"/><path class="c" d="M431.1,326.6l5.7,13.1l.8-2.9l-5.7-13z"/><path class="c" d="M436.8,339.7l5.5,11.1l.8-2.9l-5.5-11.1z"/><path class="c" d="M442.3,350.8l5.4,9.2l.8-2.9l-5.4-9.2z"/><path class="c" d="M447.7,360l5.3,7.4l.8-2.9l-5.3-7.4z"/><path class="b" d="M453,367.4l5.2,5.7l.8-2.9l-5.2-5.7z"/><path class="b" d="M458.2,373.1l5.2,4l.7-2.9l-5.1-4z"/><path class="b" d="M463.4,377.1l5.2,2.4l.7-3l-5.2-2.3z"/><path class="b" d="M468.6,379.5l5.2,.8l.6-3l-5.1-.8z"/><path class="b" d="M473.8,380.3l5.2-.9l.6-3l-5.2,.9z"/><path class="b" d="M479,379.4l5.3-2.5l.6-3l-5.3,2.5z"/><path class="c" d="M484.3,376.9l5.4-4.2l.6-2.9l-5.4,4.1z"/><path d="M489.7,372.7l5.6-5.9l.6-3l-5.6,6z"/><path d="M495.3,366.8l5.7-7.7l.6-3l-5.7,7.7z"/><path d="M501,359.1l5.9-9.7l.6-3l-5.9,9.7z"/><path d="M506.9,349.4l6.3-11.8l.5-2.9l-6.2,11.7z"/><path d="M513.2,337.6l6.5-14l.5-2.9l-6.5,14z"/><path d="M519.7,323.6l6.9-16.4l.5-3l-6.9,16.5z"/><path d="M526.6,307.2l7.3-19.2l.5-2.9l-7.3,19.1z"/><path d="M533.9,288l7.9-22.1l.4-2.9l-7.8,22.1z"/><path d="M541.8,265.9l8.4-25.6l.4-2.9l-8.4,25.6z"/><path d="M550.2,240.3l9.2-29.5l.4-2.8l-9.2,29.4z"/><path d="M559.4,210.8l10-34l.4-2.7l-10,33.9z"/><path d="M569.4,176.8l11.1-39.3l.3-2.6l-11,39.2z"/><path d="M580.5,137.5l12.3-45.4l.3-2.5l-12.3,45.3z"/><path d="M592.8,92.1l13.9-52.9l.2-2.3l-13.8,52.7z"/><path class="c" d="M361.2,79.4l10.2,44.5l1.4-2.4l-10.1-44.3z"/><path class="c" d="M371.4,123.9l9.3,38.9l1.3-2.6l-9.2-38.7z"/><path class="c" d="M380.7,162.8l8.5,34.1l1.2-2.7l-8.4-34z"/><path class="c" d="M389.2,196.9l7.9,29.9l1.1-2.7l-7.8-29.9z"/><path class="c" d="M397.1,226.8l7.4,26.4l1.1-2.8l-7.4-26.3z"/><path class="c" d="M404.5,253.2l6.9,23.1l1-2.8l-6.8-23.1z"/><path class="c" d="M411.4,276.3l6.6,20.3l.9-2.9l-6.5-20.2z"/><path class="c" d="M418,296.6l6.2,17.6l.9-2.8l-6.2-17.7z"/><path class="c" d="M424.2,314.2l6,15.3l.9-2.9l-6-15.2z"/><path class="c" d="M430.2,329.5l5.7,13.1l.9-2.9l-5.7-13.1z"/><path class="c" d="M435.9,342.6l5.6,11.1l.8-2.9l-5.5-11.1z"/><path class="c" d="M441.5,353.7l5.4,9.3l.8-3l-5.4-9.2z"/><path class="c" d="M446.9,363l5.3,7.4l.8-3l-5.3-7.4z"/><path class="b" d="M452.2,370.4l5.3,5.7l.7-3l-5.2-5.7z"/><path class="b" d="M457.5,376.1l5.2,4l.7-3l-5.2-4z"/><path class="b" d="M462.7,380.1l5.2,2.4l.7-3l-5.2-2.4z"/><path class="b" d="M467.9,382.5l5.2,.8l.7-3l-5.2-.8z"/><path class="b" d="M473.1,383.3l5.2-.9l.7-3l-5.2,.9z"/><path class="b" d="M478.3,382.4l5.4-2.5l.6-3l-5.3,2.5z"/><path class="c" d="M483.7,379.9l5.4-4.2l.6-3l-5.4,4.2z"/><path class="c" d="M489.1,375.7l5.6-5.9l.6-3l-5.6,5.9z"/><path d="M494.7,369.8l5.7-7.7l.6-3l-5.7,7.7z"/><path d="M500.4,362.1l6-9.7l.5-3l-5.9,9.7z"/><path d="M506.4,352.4l6.2-11.8l.6-3l-6.3,11.8z"/><path d="M512.6,340.6l6.6-14l.5-3l-6.5,14z"/><path d="M519.2,326.6l6.9-16.4l.5-3l-6.9,16.4z"/><path d="M526.1,310.2l7.3-19.2l.5-3l-7.3,19.2z"/><path d="M533.4,291l7.9-22.2l.5-2.9l-7.9,22.1z"/><path d="M541.3,268.8l8.5-25.6l.4-2.9l-8.4,25.6z"/><path d="M549.8,243.2l9.2-29.6l.4-2.8l-9.2,29.5z"/><path d="M559,213.6l10.1-34.1l.3-2.7l-10,34z"/><path d="M569.1,179.5l11.1-39.3l.3-2.7l-11.1,39.3z"/><path d="M580.2,140.2l12.4-45.6l.2-2.5l-12.3,45.4z"/><path d="M592.6,94.6l13.9-53.1l.2-2.3l-13.9,52.9z"/><path class="c" d="M359.7,81.7l10.3,44.6l1.4-2.4l-10.2-44.5z"/><path class="c" d="M370,126.3l9.4,39l1.3-2.5l-9.3-38.9z"/><path class="c" d="M379.4,165.3l8.6,34.2l1.2-2.6l-8.5-34.1z"/><path class="c" d="M388,199.5l8,30.1l1.1-2.8l-7.9-29.9z"/><path class="c" d="M396,229.6l7.4,26.3l1.1-2.7l-7.4-26.4z"/><path class="c" d="M403.4,255.9l7,23.2l1-2.8l-6.9-23.1z"/><path class="c" d="M410.4,279.1l6.6,20.3l1-2.8l-6.6-20.3z"/><path class="c" d="M417,299.4l6.3,17.7l.9-2.9l-6.2-17.6z"/><path class="c" d="M423.3,317.1l6,15.3l.9-2.9l-6-15.3z"/><path class="c" d="M429.3,332.4l5.8,13.2l.8-3l-5.7-13.1z"/><path class="c" d="M435.1,345.6l5.6,11.1l.8-3l-5.6-11.1z"/><path class="c" d="M440.7,356.7l5.4,9.2l.8-2.9l-5.4-9.3z"/><path class="c" d="M446.1,365.9l5.4,7.5l.7-3l-5.3-7.4z"/><path class="b" d="M451.5,373.4l5.2,5.7l.8-3l-5.3-5.7z"/><path class="b" d="M456.7,379.1l5.3,4l.7-3l-5.2-4z"/><path class="b" d="M462,383.1l5.2,2.4l.7-3l-5.2-2.4z"/><path class="b" d="M467.2,385.5l5.2,.8l.7-3l-5.2-.8z"/><path class="b" d="M472.4,386.3l5.3-.9l.6-3l-5.2,.9z"/><path class="b" d="M477.7,385.4l5.3-2.5l.7-3l-5.4,2.5z"/><path class="c" d="M483,382.9l5.5-4.1l.6-3.1l-5.4,4.2z"/><path class="c" d="M488.5,378.8l5.6-5.9l.6-3.1l-5.6,5.9z"/><path d="M494.1,372.9l5.7-7.8l.6-3l-5.7,7.7z"/><path d="M499.8,365.1l6-9.7l.6-3l-6,9.7z"/><path d="M505.8,355.4l6.3-11.7l.5-3.1l-6.2,11.8z"/><path d="M512.1,343.7l6.5-14l.6-3.1l-6.6,14z"/><path d="M518.6,329.7l7-16.5l.5-3l-6.9,16.4z"/><path d="M525.6,313.2l7.3-19.2l.5-3l-7.3,19.2z"/><path d="M532.9,294l7.9-22.2l.5-3l-7.9,22.2z"/><path d="M540.8,271.8l8.6-25.7l.4-2.9l-8.5,25.6z"/><path d="M549.4,246.1l9.2-29.6l.4-2.9l-9.2,29.6z"/><path d="M558.6,216.5l10.1-34.2l.4-2.8l-10.1,34.1z"/><path d="M568.7,182.3l11.2-39.4l.3-2.7l-11.1,39.3z"/><path d="M579.9,142.9l12.4-45.8l.3-2.5l-12.4,45.6z"/><path d="M592.3,97.1l14-53.2l.2-2.4l-13.9,53.1z"/><path class="c" d="M358.2,84.1l10.4,44.7l1.4-2.5l-10.3-44.6z"/><path class="c" d="M368.6,128.8l9.5,39.1l1.3-2.6l-9.4-39z"/><path class="c" d="M378.1,167.9l8.7,34.3l1.2-2.7l-8.6-34.2z"/><path class="c" d="M386.8,202.2l8,30.1l1.2-2.7l-8-30.1z"/><path class="c" d="M394.8,232.3l7.5,26.4l1.1-2.8l-7.4-26.3z"/><path class="c" d="M402.3,258.7l7.1,23.3l1-2.9l-7-23.2z"/><path class="c" d="M409.4,282l6.6,20.3l1-2.9l-6.6-20.3z"/><path class="c" d="M416,302.3l6.3,17.7l1-2.9l-6.3-17.7z"/><path class="c" d="M422.3,320l6.1,15.4l.9-3l-6-15.3z"/><path class="c" d="M428.4,335.4l5.8,13.1l.9-2.9l-5.8-13.2z"/><path class="c" d="M434.2,348.5l5.6,11.2l.9-3l-5.6-11.1z"/><path class="c" d="M439.8,359.7l5.5,9.2l.8-3l-5.4-9.2z"/><path class="b" d="M445.3,368.9l5.4,7.5l.8-3l-5.4-7.5z"/><path class="b" d="M450.7,376.4l5.3,5.7l.7-3l-5.2-5.7z"/><path class="b" d="M456,382.1l5.2,4l.8-3l-5.3-4z"/><path class="b" d="M461.2,386.1l5.3,2.4l.7-3l-5.2-2.4z"/><path class="b" d="M466.5,388.5l5.2,.8l.7-3l-5.2-.8z"/><path class="b" d="M471.7,389.3l5.3-.8l.7-3.1l-5.3,.9z"/><path class="b" d="M477,388.5l5.4-2.5l.6-3.1l-5.3,2.5z"/><path class="c" d="M482.4,386l5.4-4.2l.7-3l-5.5,4.1z"/><path class="c" d="M487.8,381.8l5.7-5.9l.6-3l-5.6,5.9z"/><path d="M493.5,375.9l5.7-7.7l.6-3.1l-5.7,7.8z"/><path d="M499.2,368.2l6-9.7l.6-3.1l-6,9.7z"/><path d="M505.2,358.5l6.3-11.8l.6-3l-6.3,11.7z"/><path d="M511.5,346.7l6.6-14l.5-3l-6.5,14z"/><path d="M518.1,332.7l6.9-16.5l.6-3l-7,16.5z"/><path d="M525,316.2l7.5-19.2l.4-3l-7.3,19.2z"/><path d="M532.5,297l7.9-22.3l.4-2.9l-7.9,22.2z"/><path d="M540.4,274.7l8.5-25.7l.5-2.9l-8.6,25.7z"/><path d="M548.9,249l9.3-29.7l.4-2.8l-9.2,29.6z"/><path d="M558.2,219.3l10.2-34.2l.3-2.8l-10.1,34.2z"/><path d="M568.4,185.1l11.2-39.5l.3-2.7l-11.2,39.4z"/><path d="M579.6,145.6l12.5-45.9l.2-2.6l-12.4,45.8z"/><path d="M592.1,99.7l14-53.5l.2-2.3l-14,53.2z"/><path class="c" d="M356.7,86.4l10.5,44.9l1.4-2.5l-10.4-44.7z"/><path class="c" d="M367.2,131.3l9.6,39.2l1.3-2.6l-9.5-39.1z"/><path class="c" d="M376.8,170.5l8.8,34.4l1.2-2.7l-8.7-34.3z"/><path class="c" d="M385.6,204.9l8.1,30.2l1.1-2.8l-8-30.1z"/><path class="c" d="M393.7,235.1l7.5,26.5l1.1-2.9l-7.5-26.4z"/><path class="c" d="M401.2,261.6l7.1,23.2l1.1-2.8l-7.1-23.3z"/><path class="c" d="M408.3,284.8l6.7,20.4l1-2.9l-6.6-20.3z"/><path class="c" d="M415,305.2l6.4,17.8l.9-3l-6.3-17.7z"/><path class="c" d="M421.4,323l6.1,15.3l.9-2.9l-6.1-15.4z"/><path class="c" d="M427.5,338.3l5.8,13.2l.9-3l-5.8-13.1z"/><path class="c" d="M433.3,351.5l5.7,11.2l.8-3l-5.6-11.2z"/><path class="c" d="M439,362.7l5.5,9.2l.8-3l-5.5-9.2z"/><path class="b" d="M444.5,371.9l5.4,7.5l.8-3l-5.4-7.5z"/><path class="b" d="M449.9,379.4l5.3,5.7l.8-3l-5.3-5.7z"/><path class="b" d="M455.2,385.1l5.3,4.1l.7-3.1l-5.2-4z"/><path class="b" d="M460.5,389.2l5.3,2.4l.7-3.1l-5.3-2.4z"/><path class="b" d="M465.8,391.6l5.2,.8l.7-3.1l-5.2-.8z"/><path class="b" d="M471,392.4l5.3-.9l.7-3l-5.3,.8z"/><path class="b" d="M476.3,391.5l5.4-2.4l.7-3.1l-5.4,2.5z"/><path class="c" d="M481.7,389.1l5.5-4.2l.6-3.1l-5.4,4.2z"/><path class="c" d="M487.2,384.9l5.6-5.9l.7-3.1l-5.7,5.9z"/><path d="M492.8,379l5.8-7.7l.6-3.1l-5.7,7.7z"/><path d="M498.6,371.3l6.1-9.7l.5-3.1l-6,9.7z"/><path d="M504.7,361.6l6.2-11.8l.6-3.1l-6.3,11.8z"/><path d="M510.9,349.8l6.7-14l.5-3.1l-6.6,14z"/><path d="M517.6,335.8l6.9-16.5l.5-3.1l-6.9,16.5z"/><path d="M524.5,319.3l7.5-19.2l.5-3.1l-7.5,19.2z"/><path d="M532,300.1l7.9-22.3l.5-3.1l-7.9,22.3z"/><path d="M539.9,277.8l8.6-25.8l.4-3l-8.5,25.7z"/><path d="M548.5,252l9.3-29.7l.4-3l-9.3,29.7z"/><path d="M557.8,222.3l10.2-34.3l.4-2.9l-10.2,34.2z"/><path d="M568,188l11.3-39.7l.3-2.7l-11.2,39.5z"/><path d="M579.3,148.3l12.5-46l.3-2.6l-12.5,45.9z"/><path d="M591.8,102.3l14.2-53.7l.1-2.4l-14,53.5z"/><path class="c" d="M355.2,88.8l10.6,45l1.4-2.5l-10.5-44.9z"/><path class="c" d="M365.8,133.8l9.6,39.3l1.4-2.6l-9.6-39.2z"/><path class="c" d="M375.4,173.1l8.9,34.5l1.3-2.7l-8.8-34.4z"/><path class="c" d="M384.3,207.6l8.2,30.3l1.2-2.8l-8.1-30.2z"/><path class="c" d="M392.5,237.9l7.6,26.5l1.1-2.8l-7.5-26.5z"/><path class="c" d="M400.1,264.4l7.2,23.3l1-2.9l-7.1-23.2z"/><path class="c" d="M407.3,287.7l6.7,20.4l1-2.9l-6.7-20.4z"/><path class="c" d="M414,308.1l6.4,17.8l1-2.9l-6.4-17.8z"/><path class="c" d="M420.4,325.9l6.2,15.4l.9-3l-6.1-15.3z"/><path class="c" d="M426.6,341.3l5.8,13.2l.9-3l-5.8-13.2z"/><path class="c" d="M432.4,354.5l5.7,11.2l.9-3l-5.7-11.2z"/><path class="c" d="M438.1,365.7l5.6,9.3l.8-3.1l-5.5-9.2z"/><path class="b" d="M443.7,375l5.4,7.4l.8-3l-5.4-7.5z"/><path class="b" d="M449.1,382.4l5.4,5.8l.7-3.1l-5.3-5.7z"/><path class="b" d="M454.5,388.2l5.3,4l.7-3l-5.3-4.1z"/><path class="b" d="M459.8,392.2l5.3,2.5l.7-3.1l-5.3-2.4z"/><path class="b" d="M465.1,394.7l5.2,.8l.7-3.1l-5.2-.8z"/><path class="b" d="M470.3,395.5l5.4-.9l.6-3.1l-5.3,.9z"/><path class="b" d="M475.7,394.6l5.4-2.4l.6-3.1l-5.4,2.4z"/><path class="c" d="M481.1,392.2l5.5-4.2l.6-3.1l-5.5,4.2z"/><path class="c" d="M486.6,388l5.6-5.9l.6-3.1l-5.6,5.9z"/><path d="M492.2,382.1l5.8-7.7l.6-3.1l-5.8,7.7z"/><path d="M498,374.4l6.1-9.7l.6-3.1l-6.1,9.7z"/><path d="M504.1,364.7l6.3-11.8l.5-3.1l-6.2,11.8z"/><path d="M510.4,352.9l6.6-14l.6-3.1l-6.7,14z"/><path d="M517,338.9l7-16.5l.5-3.1l-6.9,16.5z"/><path d="M524,322.4l7.5-19.3l.5-3l-7.5,19.2z"/><path d="M531.5,303.1l7.9-22.3l.5-3l-7.9,22.3z"/><path d="M539.4,280.8l8.6-25.8l.5-3l-8.6,25.8z"/><path d="M548,255l9.4-29.8l.4-2.9l-9.3,29.7z"/><path d="M557.4,225.2l10.2-34.4l.4-2.8l-10.2,34.3z"/><path d="M567.6,190.8l11.3-39.7l.4-2.8l-11.3,39.7z"/><path d="M578.9,151.1l12.7-46.2l.2-2.6l-12.5,46z"/><path d="M591.6,104.9l14.2-53.9l.2-2.4l-14.2,53.7z"/><path class="c" d="M353.6,91.1l10.7,45.2l1.5-2.5l-10.6-45z"/><path class="c" d="M364.3,136.3l9.8,39.5l1.3-2.7l-9.6-39.3z"/><path class="c" d="M374.1,175.8l8.9,34.6l1.3-2.8l-8.9-34.5z"/><path class="c" d="M383,210.4l8.3,30.3l1.2-2.8l-8.2-30.3z"/><path class="c" d="M391.3,240.7l7.7,26.6l1.1-2.9l-7.6-26.5z"/><path class="c" d="M399,267.3l7.2,23.4l1.1-3l-7.2-23.3z"/><path class="c" d="M406.2,290.7l6.8,20.4l1-3l-6.7-20.4z"/><path class="c" d="M413,311.1l6.5,17.8l.9-3l-6.4-17.8z"/><path class="c" d="M419.5,328.9l6.1,15.4l1-3l-6.2-15.4z"/><path class="c" d="M425.6,344.3l6,13.3l.8-3.1l-5.8-13.2z"/><path class="c" d="M431.6,357.6l5.7,11.2l.8-3.1l-5.7-11.2z"/><path class="c" d="M437.3,368.8l5.6,9.2l.8-3l-5.6-9.3z"/><path class="b" d="M442.9,378l5.4,7.5l.8-3.1l-5.4-7.4z"/><path class="b" d="M448.3,385.5l5.4,5.8l.8-3.1l-5.4-5.8z"/><path class="b" d="M453.7,391.3l5.3,4l.8-3.1l-5.3-4z"/><path class="b" d="M459,395.3l5.3,2.5l.8-3.1l-5.3-2.5z"/><path class="b" d="M464.3,397.8l5.3,.8l.7-3.1l-5.2-.8z"/><path class="b" d="M469.6,398.6l5.4-.8l.7-3.2l-5.4,.9z"/><path class="b" d="M475,397.8l5.4-2.5l.7-3.1l-5.4,2.4z"/><path class="c" d="M480.4,395.3l5.5-4.1l.7-3.2l-5.5,4.2z"/><path class="c" d="M485.9,391.2l5.7-5.9l.6-3.2l-5.6,5.9z"/><path d="M491.6,385.3l5.8-7.8l.6-3.1l-5.8,7.7z"/><path d="M497.4,377.5l6.1-9.7l.6-3.1l-6.1,9.7z"/><path d="M503.5,367.8l6.3-11.7l.6-3.2l-6.3,11.8z"/><path d="M509.8,356.1l6.7-14.1l.5-3.1l-6.6,14z"/><path d="M516.5,342l7-16.5l.5-3.1l-7,16.5z"/><path d="M523.5,325.5l7.5-19.3l.5-3.1l-7.5,19.3z"/><path d="M531,306.2l8-22.3l.4-3.1l-7.9,22.3z"/><path d="M539,283.9l8.6-25.9l.4-3l-8.6,25.8z"/><path d="M547.6,258l9.4-29.8l.4-3l-9.4,29.8z"/><path d="M557,228.2l10.3-34.5l.3-2.9l-10.2,34.4z"/><path d="M567.3,193.7l11.3-39.8l.3-2.8l-11.3,39.7z"/><path d="M578.6,153.9l12.7-46.4l.3-2.6l-12.7,46.2z"/><path d="M591.3,107.5l14.3-54l.2-2.5l-14.2,53.9z"/><path class="c" d="M340,41.4l12,52.2l1.6-2.5l-11.9-51.9z"/><path class="c" d="M352,93.6l10.9,45.3l1.4-2.6l-10.7-45.2z"/><path class="c" d="M362.9,138.9l9.8,39.6l1.4-2.7l-9.8-39.5z"/><path class="c" d="M372.7,178.5l9.1,34.6l1.2-2.7l-8.9-34.6z"/><path class="c" d="M381.8,213.1l8.3,30.4l1.2-2.8l-8.3-30.3z"/><path class="c" d="M390.1,243.5l7.8,26.7l1.1-2.9l-7.7-26.6z"/><path class="c" d="M397.9,270.2l7.2,23.4l1.1-2.9l-7.2-23.4z"/><path class="c" d="M405.1,293.6l6.9,20.5l1-3l-6.8-20.4z"/><path class="c" d="M412,314.1l6.5,17.8l1-3l-6.5-17.8z"/><path class="c" d="M418.5,331.9l6.2,15.5l.9-3.1l-6.1-15.4z"/><path class="c" d="M424.7,347.4l6,13.2l.9-3l-6-13.3z"/><path class="c" d="M430.7,360.6l5.7,11.2l.9-3l-5.7-11.2z"/><path class="c" d="M436.4,371.8l5.6,9.3l.9-3.1l-5.6-9.2z"/><path class="b" d="M442,381.1l5.5,7.5l.8-3.1l-5.4-7.5z"/><path class="b" d="M447.5,388.6l5.4,5.8l.8-3.1l-5.4-5.8z"/><path class="b" d="M452.9,394.4l5.4,4.1l.7-3.2l-5.3-4z"/><path class="b" d="M458.3,398.5l5.3,2.4l.7-3.1l-5.3-2.5z"/><path class="b" d="M463.6,400.9l5.3,.8l.7-3.1l-5.3-.8z"/><path class="b" d="M468.9,401.7l5.4-.8l.7-3.1l-5.4,.8z"/><path class="b" d="M474.3,400.9l5.4-2.4l.7-3.2l-5.4,2.5z"/><path class="c" d="M479.7,398.5l5.6-4.2l.6-3.1l-5.5,4.1z"/><path class="c" d="M485.3,394.3l5.7-5.9l.6-3.1l-5.7,5.9z"/><path d="M491,388.4l5.8-7.7l.6-3.2l-5.8,7.8z"/><path d="M496.8,380.7l6.1-9.7l.6-3.2l-6.1,9.7z"/><path d="M502.9,371l6.3-11.8l.6-3.1l-6.3,11.7z"/><path d="M509.2,359.2l6.7-14l.6-3.2l-6.7,14.1z"/><path d="M515.9,345.2l7-16.6l.6-3.1l-7,16.5z"/><path d="M522.9,328.6l7.5-19.2l.6-3.2l-7.5,19.3z"/><path d="M530.4,309.4l8.1-22.4l.5-3.1l-8,22.3z"/><path d="M538.5,287l8.6-25.9l.5-3.1l-8.6,25.9z"/><path d="M547.1,261.1l9.5-29.9l.4-3l-9.4,29.8z"/><path d="M556.6,231.2l10.3-34.5l.4-3l-10.3,34.5z"/><path d="M566.9,196.7l11.4-40l.3-2.8l-11.3,39.8z"/><path d="M578.3,156.7l12.7-46.5l.3-2.7l-12.7,46.4z"/><path d="M591,110.2l14.4-54.2l.2-2.5l-14.3,54z"/><path class="c" d="M338.3,43.7l12.2,52.3l1.5-2.4l-12-52.2z"/><path class="c" d="M350.5,96l10.9,45.5l1.5-2.6l-10.9-45.3z"/><path class="c" d="M361.4,141.5l10,39.7l1.3-2.7l-9.8-39.6z"/><path class="c" d="M371.4,181.2l9.1,34.7l1.3-2.8l-9.1-34.6z"/><path class="c" d="M380.5,215.9l8.4,30.5l1.2-2.9l-8.3-30.4z"/><path class="c" d="M388.9,246.4l7.8,26.7l1.2-2.9l-7.8-26.7z"/><path class="c" d="M396.7,273.1l7.4,23.5l1-3l-7.2-23.4z"/><path class="c" d="M404.1,296.6l6.9,20.5l1-3l-6.9-20.5z"/><path class="c" d="M411,317.1l6.5,17.9l1-3.1l-6.5-17.8z"/><path class="c" d="M417.5,335l6.3,15.4l.9-3l-6.2-15.5z"/><path class="c" d="M423.8,350.4l6,13.3l.9-3.1l-6-13.2z"/><path class="c" d="M429.8,363.7l5.8,11.2l.8-3.1l-5.7-11.2z"/><path class="c" d="M435.6,374.9l5.6,9.3l.8-3.1l-5.6-9.3z"/><path class="b" d="M441.2,384.2l5.5,7.6l.8-3.2l-5.5-7.5z"/><path class="b" d="M446.7,391.8l5.5,5.7l.7-3.1l-5.4-5.8z"/><path class="b" d="M452.2,397.5l5.3,4.1l.8-3.1l-5.4-4.1z"/><path class="b" d="M457.5,401.6l5.4,2.5l.7-3.2l-5.3-2.4z"/><path class="b" d="M462.9,404.1l5.3,.8l.7-3.2l-5.3-.8z"/><path class="b" d="M468.2,404.9l5.4-.8l.7-3.2l-5.4,.8z"/><path class="b" d="M473.6,404.1l5.5-2.5l.6-3.1l-5.4,2.4z"/><path class="c" d="M479.1,401.6l5.5-4.1l.7-3.2l-5.6,4.2z"/><path class="c" d="M484.6,397.5l5.7-5.9l.7-3.2l-5.7,5.9z"/><path d="M490.3,391.6l5.9-7.7l.6-3.2l-5.8,7.7z"/><path d="M496.2,383.9l6.1-9.7l.6-3.2l-6.1,9.7z"/><path d="M502.3,374.2l6.4-11.8l.5-3.2l-6.3,11.8z"/><path d="M508.7,362.4l6.6-14l.6-3.2l-6.7,14z"/><path d="M515.3,348.4l7.1-16.6l.5-3.2l-7,16.6z"/><path d="M522.4,331.8l7.5-19.3l.5-3.1l-7.5,19.2z"/><path d="M529.9,312.5l8.1-22.4l.5-3.1l-8.1,22.4z"/><path d="M538,290.1l8.7-25.9l.4-3.1l-8.6,25.9z"/><path d="M546.7,264.2l9.4-30l.5-3l-9.5,29.9z"/><path d="M556.1,234.2l10.4-34.6l.4-2.9l-10.3,34.5z"/><path d="M566.5,199.6l11.5-40.1l.3-2.8l-11.4,40z"/><path d="M578,159.5l12.8-46.6l.2-2.7l-12.7,46.5z"/><path d="M590.8,112.9l14.4-54.4l.2-2.5l-14.4,54.2z"/><path class="c" d="M336.5,45.9l12.4,52.6l1.6-2.5l-12.2-52.3z"/><path class="c" d="M348.9,98.5l11,45.6l1.5-2.6l-10.9-45.5z"/><path class="c" d="M359.9,144.1l10.1,39.8l1.4-2.7l-10-39.7z"/><path class="c" d="M370,183.9l9.2,34.9l1.3-2.9l-9.1-34.7z"/><path class="c" d="M379.2,218.8l8.5,30.5l1.2-2.9l-8.4-30.5z"/><path class="c" d="M387.7,249.3l7.9,26.8l1.1-3l-7.8-26.7z"/><path class="c" d="M395.6,276.1l7.4,23.5l1.1-3l-7.4-23.5z"/><path class="c" d="M403,299.6l6.9,20.5l1.1-3l-6.9-20.5z"/><path class="c" d="M409.9,320.1l6.6,17.9l1-3l-6.5-17.9z"/><path class="c" d="M416.5,338l6.3,15.5l1-3.1l-6.3-15.4z"/><path class="c" d="M422.8,353.5l6.1,13.3l.9-3.1l-6-13.3z"/><path class="c" d="M428.9,366.8l5.8,11.3l.9-3.2l-5.8-11.2z"/><path class="c" d="M434.7,378.1l5.7,9.3l.8-3.2l-5.6-9.3z"/><path class="b" d="M440.4,387.4l5.5,7.5l.8-3.1l-5.5-7.6z"/><path class="b" d="M445.9,394.9l5.5,5.8l.8-3.2l-5.5-5.7z"/><path class="b" d="M451.4,400.7l5.4,4.1l.7-3.2l-5.3-4.1z"/><path class="b" d="M456.8,404.8l5.3,2.5l.8-3.2l-5.4-2.5z"/><path class="b" d="M462.1,407.3l5.4,.8l.7-3.2l-5.3-.8z"/><path class="b" d="M467.5,408.1l5.4-.8l.7-3.2l-5.4,.8z"/><path class="b" d="M472.9,407.3l5.5-2.4l.7-3.3l-5.5,2.5z"/><path class="c" d="M478.4,404.9l5.6-4.2l.6-3.2l-5.5,4.1z"/><path class="c" d="M484,400.7l5.7-5.9l.6-3.2l-5.7,5.9z"/><path d="M489.7,394.8l5.9-7.7l.6-3.2l-5.9,7.7z"/><path d="M495.6,387.1l6.1-9.7l.6-3.2l-6.1,9.7z"/><path d="M501.7,377.4l6.4-11.7l.6-3.3l-6.4,11.8z"/><path d="M508.1,365.7l6.7-14.1l.5-3.2l-6.6,14z"/><path d="M514.8,351.6l7.1-16.6l.5-3.2l-7.1,16.6z"/><path d="M521.9,335l7.5-19.3l.5-3.2l-7.5,19.3z"/><path d="M529.4,315.7l8.1-22.4l.5-3.2l-8.1,22.4z"/><path d="M537.5,293.3l8.7-26l.5-3.1l-8.7,25.9z"/><path d="M546.2,267.3l9.5-30l.4-3.1l-9.4,30z"/><path d="M555.7,237.3l10.4-34.7l.4-3l-10.4,34.6z"/><path d="M566.1,202.6l11.5-40.2l.4-2.9l-11.5,40.1z"/><path d="M577.6,162.4l12.9-46.7l.3-2.8l-12.8,46.6z"/><path d="M590.5,115.7l14.5-54.7l.2-2.5l-14.4,54.4z"/><path class="c" d="M334.8,48.2l12.4,52.8l1.7-2.5l-12.4-52.6z"/><path class="c" d="M347.2,101l11.2,45.8l1.5-2.7l-11-45.6z"/><path class="c" d="M358.4,146.8l10.2,39.9l1.4-2.8l-10.1-39.8z"/><path class="c" d="M368.6,186.7l9.3,34.9l1.3-2.8l-9.2-34.9z"/><path class="c" d="M377.9,221.6l8.6,30.6l1.2-2.9l-8.5-30.5z"/><path class="c" d="M386.5,252.2l7.9,26.9l1.2-3l-7.9-26.8z"/><path class="c" d="M394.4,279.1l7.5,23.5l1.1-3l-7.4-23.5z"/><path class="c" d="M401.9,302.6l7,20.6l1-3.1l-6.9-20.5z"/><path class="c" d="M408.9,323.2l6.6,17.9l1-3.1l-6.6-17.9z"/><path class="c" d="M415.5,341.1l6.4,15.6l.9-3.2l-6.3-15.5z"/><path class="c" d="M421.9,356.7l6,13.3l1-3.2l-6.1-13.3z"/><path class="c" d="M427.9,370l5.9,11.2l.9-3.1l-5.8-11.3z"/><path class="b" d="M433.8,381.2l5.7,9.4l.9-3.2l-5.7-9.3z"/><path class="b" d="M439.5,390.6l5.6,7.5l.8-3.2l-5.5-7.5z"/><path class="b" d="M445.1,398.1l5.5,5.8l.8-3.2l-5.5-5.8z"/><path class="b" d="M450.6,403.9l5.4,4.1l.8-3.2l-5.4-4.1z"/><path class="b" d="M456,408l5.4,2.5l.7-3.2l-5.3-2.5z"/><path class="b" d="M461.4,410.5l5.4,.8l.7-3.2l-5.4-.8z"/><path class="b" d="M466.8,411.3l5.4-.8l.7-3.2l-5.4,.8z"/><path class="b" d="M472.2,410.5l5.5-2.4l.7-3.2l-5.5,2.4z"/><path class="c" d="M477.7,408.1l5.6-4.1l.7-3.3l-5.6,4.2z"/><path class="c" d="M483.3,404l5.7-5.9l.7-3.3l-5.7,5.9z"/><path d="M489,398.1l6-7.7l.6-3.3l-5.9,7.7z"/><path d="M495,390.4l6.1-9.7l.6-3.3l-6.1,9.7z"/><path d="M501.1,380.7l6.4-11.8l.6-3.2l-6.4,11.7z"/><path d="M507.5,368.9l6.7-14.1l.6-3.2l-6.7,14.1z"/><path d="M514.2,354.8l7.1-16.5l.6-3.3l-7.1,16.6z"/><path d="M521.3,338.3l7.6-19.4l.5-3.2l-7.5,19.3z"/><path d="M528.9,318.9l8.1-22.4l.5-3.2l-8.1,22.4z"/><path d="M537,296.5l8.7-26l.5-3.2l-8.7,26z"/><path d="M545.7,270.5l9.6-30.1l.4-3.1l-9.5,30z"/><path d="M555.3,240.4l10.4-34.7l.4-3.1l-10.4,34.7z"/><path d="M565.7,205.7l11.6-40.3l.3-3l-11.5,40.2z"/><path d="M577.3,165.4l12.9-46.9l.3-2.8l-12.9,46.7z"/><path d="M590.2,118.5l14.6-54.9l.2-2.6l-14.5,54.7z"/><path class="c" d="M333,50.6l12.6,52.9l1.6-2.5l-12.4-52.8z"/><path class="c" d="M345.6,103.5l11.3,46l1.5-2.7l-11.2-45.8z"/><path class="c" d="M356.9,149.5l10.3,40l1.4-2.8l-10.2-39.9z"/><path class="c" d="M367.2,189.5l9.4,35l1.3-2.9l-9.3-34.9z"/><path class="c" d="M376.6,224.5l8.6,30.7l1.3-3l-8.6-30.6z"/><path class="c" d="M385.2,255.2l8,26.9l1.2-3l-7.9-26.9z"/><path class="c" d="M393.2,282.1l7.6,23.6l1.1-3.1l-7.5-23.5z"/><path class="c" d="M400.8,305.7l7,20.6l1.1-3.1l-7-20.6z"/><path class="c" d="M407.8,326.3l6.7,18l1-3.2l-6.6-17.9z"/><path class="c" d="M414.5,344.3l6.4,15.5l1-3.1l-6.4-15.6z"/><path class="c" d="M420.9,359.8l6.1,13.3l.9-3.1l-6-13.3z"/><path class="c" d="M427,373.1l5.9,11.3l.9-3.2l-5.9-11.2z"/><path class="c" d="M432.9,384.4l5.8,9.4l.8-3.2l-5.7-9.4z"/><path class="b" d="M438.7,393.8l5.6,7.5l.8-3.2l-5.6-7.5z"/><path class="b" d="M444.3,401.3l5.5,5.8l.8-3.2l-5.5-5.8z"/><path class="b" d="M449.8,407.1l5.4,4.1l.8-3.2l-5.4-4.1z"/><path class="b" d="M455.2,411.2l5.4,2.5l.8-3.2l-5.4-2.5z"/><path class="b" d="M460.6,413.7l5.4,.9l.8-3.3l-5.4-.8z"/><path class="b" d="M466,414.6l5.5-.8l.7-3.3l-5.4,.8z"/><path class="b" d="M471.5,413.8l5.5-2.4l.7-3.3l-5.5,2.4z"/><path class="c" d="M477,411.4l5.6-4.2l.7-3.2l-5.6,4.1z"/><path class="c" d="M482.6,407.2l5.8-5.8l.6-3.3l-5.7,5.9z"/><path d="M488.4,401.4l5.9-7.8l.7-3.2l-6,7.7z"/><path d="M494.3,393.6l6.2-9.6l.6-3.3l-6.1,9.7z"/><path d="M500.5,384l6.4-11.8l.6-3.3l-6.4,11.8z"/><path d="M506.9,372.2l6.7-14.1l.6-3.3l-6.7,14.1z"/><path d="M513.6,358.1l7.2-16.5l.5-3.3l-7.1,16.5z"/><path d="M520.8,341.6l7.6-19.4l.5-3.3l-7.6,19.4z"/><path d="M528.4,322.2l8.1-22.5l.5-3.2l-8.1,22.4z"/><path d="M536.5,299.7l8.8-26l.4-3.2l-8.7,26z"/><path d="M545.3,273.7l9.5-30.1l.5-3.2l-9.6,30.1z"/><path d="M554.8,243.6l10.5-34.9l.4-3l-10.4,34.7z"/><path d="M565.3,208.7l11.6-40.4l.4-2.9l-11.6,40.3z"/><path d="M576.9,168.3l13-47l.3-2.8l-12.9,46.9z"/><path d="M589.9,121.3l14.7-55.1l.2-2.6l-14.6,54.9z"/><path class="c" d="M331.2,52.9l12.7,53.2l1.7-2.6l-12.6-52.9z"/><path class="c" d="M343.9,106.1l11.5,46.1l1.5-2.7l-11.3-46z"/><path class="c" d="M355.4,152.2l10.4,40.1l1.4-2.8l-10.3-40z"/><path class="c" d="M365.8,192.3l9.4,35.1l1.4-2.9l-9.4-35z"/><path class="c" d="M375.2,227.4l8.8,30.8l1.2-3l-8.6-30.7z"/><path class="c" d="M384,258.2l8.1,27l1.1-3.1l-8-26.9z"/><path class="c" d="M392.1,285.2l7.5,23.6l1.2-3.1l-7.6-23.6z"/><path class="c" d="M399.6,308.8l7.1,20.6l1.1-3.1l-7-20.6z"/><path class="c" d="M406.7,329.4l6.8,18l1-3.1l-6.7-18z"/><path class="c" d="M413.5,347.4l6.4,15.6l1-3.2l-6.4-15.5z"/><path class="c" d="M419.9,363l6.2,13.3l.9-3.2l-6.1-13.3z"/><path class="c" d="M426.1,376.3l5.9,11.3l.9-3.2l-5.9-11.3z"/><path class="b" d="M432,387.6l5.8,9.4l.9-3.2l-5.8-9.4z"/><path class="b" d="M437.8,397l5.6,7.6l.9-3.3l-5.6-7.5z"/><path class="b" d="M443.4,404.6l5.6,5.8l.8-3.3l-5.5-5.8z"/><path class="b" d="M449,410.4l5.4,4.1l.8-3.3l-5.4-4.1z"/><path class="b" d="M454.4,414.5l5.5,2.5l.7-3.3l-5.4-2.5z"/><path class="b" d="M459.9,417l5.4,.8l.7-3.2l-5.4-.9z"/><path class="b" d="M465.3,417.8l5.5-.7l.7-3.3l-5.5,.8z"/><path class="b" d="M470.8,417.1l5.5-2.4l.7-3.3l-5.5,2.4z"/><path class="c" d="M476.3,414.7l5.7-4.2l.6-3.3l-5.6,4.2z"/><path class="c" d="M482,410.5l5.7-5.8l.7-3.3l-5.8,5.8z"/><path d="M487.7,404.7l6-7.7l.6-3.4l-5.9,7.8z"/><path d="M493.7,397l6.2-9.7l.6-3.3l-6.2,9.6z"/><path d="M499.9,387.3l6.4-11.8l.6-3.3l-6.4,11.8z"/><path d="M506.3,375.5l6.8-14.1l.5-3.3l-6.7,14.1z"/><path d="M513.1,361.4l7.1-16.5l.6-3.3l-7.2,16.5z"/><path d="M520.2,344.9l7.6-19.4l.6-3.3l-7.6,19.4z"/><path d="M527.8,325.5l8.2-22.5l.5-3.3l-8.1,22.5z"/><path d="M536,303l8.8-26.1l.5-3.2l-8.8,26z"/><path d="M544.8,276.9l9.6-30.2l.4-3.1l-9.5,30.1z"/><path d="M554.4,246.7l10.5-34.9l.4-3.1l-10.5,34.9z"/><path d="M564.9,211.8l11.7-40.5l.3-3l-11.6,40.4z"/><path d="M576.6,171.3l13-47.2l.3-2.8l-13,47z"/><path d="M589.6,124.1l14.8-55.3l.2-2.6l-14.7,55.1z"/><path class="c" d="M329.3,55.3l12.9,53.4l1.7-2.6l-12.7-53.2z"/><path class="c" d="M342.2,108.7l11.6,46.2l1.6-2.7l-11.5-46.1z"/><path class="c" d="M353.8,154.9l10.5,40.3l1.5-2.9l-10.4-40.1z"/><path class="c" d="M364.3,195.2l9.6,35.2l1.3-3l-9.4-35.1z"/><path class="c" d="M373.9,230.4l8.8,30.8l1.3-3l-8.8-30.8z"/><path class="c" d="M382.7,261.2l8.2,27l1.2-3l-8.1-27z"/><path class="c" d="M390.9,288.2l7.6,23.7l1.1-3.1l-7.5-23.6z"/><path class="c" d="M398.5,311.9l7.2,20.7l1-3.2l-7.1-20.6z"/><path class="c" d="M405.7,332.6l6.8,18l1-3.2l-6.8-18z"/><path class="c" d="M412.5,350.6l6.4,15.6l1-3.2l-6.4-15.6z"/><path class="c" d="M418.9,366.2l6.2,13.4l1-3.3l-6.2-13.3z"/><path class="c" d="M425.1,379.6l6,11.3l.9-3.3l-5.9-11.3z"/><path class="b" d="M431.1,390.9l5.8,9.4l.9-3.3l-5.8-9.4z"/><path class="b" d="M436.9,400.3l5.7,7.5l.8-3.2l-5.6-7.6z"/><path class="b" d="M442.6,407.8l5.5,5.8l.9-3.2l-5.6-5.8z"/><path class="b" d="M448.1,413.6l5.5,4.2l.8-3.3l-5.4-4.1z"/><path class="b" d="M453.6,417.8l5.5,2.5l.8-3.3l-5.5-2.5z"/><path class="b" d="M459.1,420.3l5.5,.9l.7-3.4l-5.4-.8z"/><path class="b" d="M464.6,421.2l5.5-.8l.7-3.3l-5.5,.7z"/><path class="b" d="M470.1,420.4l5.5-2.4l.7-3.3l-5.5,2.4z"/><path class="c" d="M475.6,418l5.7-4.1l.7-3.4l-5.7,4.2z"/><path class="c" d="M481.3,413.9l5.8-5.9l.6-3.3l-5.7,5.8z"/><path d="M487.1,408l5.9-7.7l.7-3.3l-6,7.7z"/><path d="M493,400.3l6.2-9.7l.7-3.3l-6.2,9.7z"/><path d="M499.2,390.6l6.5-11.7l.6-3.4l-6.4,11.8z"/><path d="M505.7,378.9l6.8-14.1l.6-3.4l-6.8,14.1z"/><path d="M512.5,364.8l7.1-16.6l.6-3.3l-7.1,16.5z"/><path d="M519.6,348.2l7.7-19.4l.5-3.3l-7.6,19.4z"/><path d="M527.3,328.8l8.2-22.5l.5-3.3l-8.2,22.5z"/><path d="M535.5,306.3l8.8-26.1l.5-3.3l-8.8,26.1z"/><path d="M544.3,280.2l9.6-30.2l.5-3.3l-9.6,30.2z"/><path d="M553.9,250l10.6-35l.4-3.2l-10.5,34.9z"/><path d="M564.5,215l11.7-40.7l.4-3l-11.7,40.5z"/><path d="M576.2,174.3l13.1-47.3l.3-2.9l-13,47.2z"/><path d="M589.3,127l14.9-55.5l.2-2.7l-14.8,55.3z"/><path class="c" d="M327.5,57.7l13,53.6l1.7-2.6l-12.9-53.4z"/><path class="c" d="M340.5,111.3l11.8,46.4l1.5-2.8l-11.6-46.2z"/><path class="c" d="M352.3,157.7l10.6,40.4l1.4-2.9l-10.5-40.3z"/><path class="c" d="M362.9,198.1l9.6,35.3l1.4-3l-9.6-35.2z"/><path class="c" d="M372.5,233.4l8.9,30.9l1.3-3.1l-8.8-30.8z"/><path class="c" d="M381.4,264.3l8.3,27.1l1.2-3.2l-8.2-27z"/><path class="c" d="M389.7,291.4l7.7,23.7l1.1-3.2l-7.6-23.7z"/><path class="c" d="M397.4,315.1l7.2,20.7l1.1-3.2l-7.2-20.7z"/><path class="c" d="M404.6,335.8l6.8,18l1.1-3.2l-6.8-18z"/><path class="c" d="M411.4,353.8l6.5,15.6l1-3.2l-6.4-15.6z"/><path class="c" d="M417.9,369.4l6.3,13.4l.9-3.2l-6.2-13.4z"/><path class="c" d="M424.2,382.8l6,11.3l.9-3.2l-6-11.3z"/><path class="b" d="M430.2,394.1l5.8,9.4l.9-3.2l-5.8-9.4z"/><path class="b" d="M436,403.5l5.7,7.6l.9-3.3l-5.7-7.5z"/><path class="b" d="M441.7,411.1l5.6,5.9l.8-3.4l-5.5-5.8z"/><path class="b" d="M447.3,417l5.5,4.1l.8-3.3l-5.5-4.2z"/><path class="b" d="M452.8,421.1l5.5,2.5l.8-3.3l-5.5-2.5z"/><path class="b" d="M458.3,423.6l5.5,.9l.8-3.3l-5.5-.9z"/><path class="b" d="M463.8,424.5l5.5-.8l.8-3.3l-5.5,.8z"/><path class="b" d="M469.3,423.7l5.6-2.4l.7-3.3l-5.5,2.4z"/><path class="c" d="M474.9,421.3l5.7-4.1l.7-3.3l-5.7,4.1z"/><path class="c" d="M480.6,417.2l5.8-5.8l.7-3.4l-5.8,5.9z"/><path d="M486.4,411.4l6-7.7l.6-3.4l-5.9,7.7z"/><path d="M492.4,403.7l6.2-9.7l.6-3.4l-6.2,9.7z"/><path d="M498.6,394l6.5-11.8l.6-3.3l-6.5,11.7z"/><path d="M505.1,382.2l6.8-14l.6-3.4l-6.8,14.1z"/><path d="M511.9,368.2l7.2-16.6l.5-3.4l-7.1,16.6z"/><path d="M519.1,351.6l7.6-19.4l.6-3.4l-7.7,19.4z"/><path d="M526.7,332.2l8.2-22.6l.6-3.3l-8.2,22.5z"/><path d="M534.9,309.6l8.9-26.1l.5-3.3l-8.8,26.1z"/><path d="M543.8,283.5l9.7-30.3l.4-3.2l-9.6,30.2z"/><path d="M553.5,253.2l10.6-35.1l.4-3.1l-10.6,35z"/><path d="M564.1,218.1l11.8-40.7l.3-3.1l-11.7,40.7z"/><path d="M575.9,177.4l13.1-47.5l.3-2.9l-13.1,47.3z"/><path d="M589,129.9l14.9-55.7l.3-2.7l-14.9,55.5z"/><path class="c" d="M325.6,60.2l13.2,53.7l1.7-2.6l-13-53.6z"/><path class="c" d="M338.8,113.9l11.9,46.6l1.6-2.8l-11.8-46.4z"/><path class="c" d="M350.7,160.5l10.7,40.5l1.5-2.9l-10.6-40.4z"/><path class="c" d="M361.4,201l9.7,35.4l1.4-3l-9.6-35.3z"/><path class="c" d="M371.1,236.4l9,31l1.3-3.1l-8.9-30.9z"/><path class="c" d="M380.1,267.4l8.3,27.1l1.3-3.1l-8.3-27.1z"/><path class="c" d="M388.4,294.5l7.8,23.8l1.2-3.2l-7.7-23.7z"/><path class="c" d="M396.2,318.3l7.3,20.7l1.1-3.2l-7.2-20.7z"/><path class="c" d="M403.5,339l6.9,18.1l1-3.3l-6.8-18z"/><path class="c" d="M410.4,357.1l6.5,15.6l1-3.3l-6.5-15.6z"/><path class="c" d="M416.9,372.7l6.3,13.4l1-3.3l-6.3-13.4z"/><path class="c" d="M423.2,386.1l6.1,11.3l.9-3.3l-6-11.3z"/><path class="b" d="M429.3,397.4l5.8,9.5l.9-3.4l-5.8-9.4z"/><path class="b" d="M435.1,406.9l5.8,7.5l.8-3.3l-5.7-7.6z"/><path class="b" d="M440.9,414.4l5.6,5.9l.8-3.3l-5.6-5.9z"/><path class="b" d="M446.5,420.3l5.5,4.2l.8-3.4l-5.5-4.1z"/><path class="b" d="M452,424.5l5.5,2.5l.8-3.4l-5.5-2.5z"/><path class="b" d="M457.5,427l5.6,.9l.7-3.4l-5.5-.9z"/><path class="b" d="M463.1,427.9l5.5-.8l.7-3.4l-5.5,.8z"/><path class="b" d="M468.6,427.1l5.6-2.4l.7-3.4l-5.6,2.4z"/><path class="c" d="M474.2,424.7l5.7-4.1l.7-3.4l-5.7,4.1z"/><path class="c" d="M479.9,420.6l5.8-5.8l.7-3.4l-5.8,5.8z"/><path d="M485.7,414.8l6-7.7l.7-3.4l-6,7.7z"/><path d="M491.7,407.1l6.3-9.7l.6-3.4l-6.2,9.7z"/><path d="M498,397.4l6.5-11.8l.6-3.4l-6.5,11.8z"/><path d="M504.5,385.6l6.8-14l.6-3.4l-6.8,14z"/><path d="M511.3,371.6l7.2-16.6l.6-3.4l-7.2,16.6z"/><path d="M518.5,355l7.7-19.5l.5-3.3l-7.6,19.4z"/><path d="M526.2,335.5l8.2-22.5l.5-3.4l-8.2,22.6z"/><path d="M534.4,313l8.9-26.2l.5-3.3l-8.9,26.1z"/><path d="M543.3,286.8l9.7-30.3l.5-3.3l-9.7,30.3z"/><path d="M553,256.5l10.7-35.2l.4-3.2l-10.6,35.1z"/><path d="M563.7,221.3l11.8-40.8l.4-3.1l-11.8,40.7z"/><path d="M575.5,180.5l13.2-47.6l.3-3l-13.1,47.5z"/><path d="M588.7,132.9l15-55.9l.2-2.8l-14.9,55.7z"/><path class="c" d="M323.7,62.6l13.4,54l1.7-2.7l-13.2-53.7z"/><path class="c" d="M337.1,116.6l12,46.7l1.6-2.8l-11.9-46.6z"/><path class="c" d="M349.1,163.3l10.8,40.7l1.5-3l-10.7-40.5z"/><path class="c" d="M359.9,204l9.8,35.4l1.4-3l-9.7-35.4z"/><path class="c" d="M369.7,239.4l9.1,31.1l1.3-3.1l-9-31z"/><path class="c" d="M378.8,270.5l8.4,27.2l1.2-3.2l-8.3-27.1z"/><path class="c" d="M387.2,297.7l7.8,23.8l1.2-3.2l-7.8-23.8z"/><path class="c" d="M395,321.5l7.4,20.8l1.1-3.3l-7.3-20.7z"/><path class="c" d="M402.4,342.3l6.9,18.1l1.1-3.3l-6.9-18.1z"/><path class="c" d="M409.3,360.4l6.6,15.6l1-3.3l-6.5-15.6z"/><path class="c" d="M415.9,376l6.3,13.4l1-3.3l-6.3-13.4z"/><path class="b" d="M422.2,389.4l6.1,11.4l1-3.4l-6.1-11.3z"/><path class="b" d="M428.3,400.8l5.9,9.4l.9-3.3l-5.8-9.5z"/><path class="b" d="M434.2,410.2l5.8,7.6l.9-3.4l-5.8-7.5z"/><path class="b" d="M440,417.8l5.6,5.9l.9-3.4l-5.6-5.9z"/><path class="b" d="M445.6,423.7l5.6,4.1l.8-3.3l-5.5-4.2z"/><path class="b" d="M451.2,427.8l5.6,2.6l.7-3.4l-5.5-2.5z"/><path class="b" d="M456.8,430.4l5.5,.9l.8-3.4l-5.6-.9z"/><path class="b" d="M462.3,431.3l5.5-.8l.8-3.4l-5.5,.8z"/><path class="b" d="M467.8,430.5l5.7-2.4l.7-3.4l-5.6,2.4z"/><path class="b" d="M473.5,428.1l5.7-4l.7-3.5l-5.7,4.1z"/><path class="c" d="M479.2,424.1l5.8-5.9l.7-3.4l-5.8,5.8z"/><path d="M485,418.2l6.1-7.7l.6-3.4l-6,7.7z"/><path d="M491.1,410.5l6.2-9.6l.7-3.5l-6.3,9.7z"/><path d="M497.3,400.9l6.5-11.8l.7-3.5l-6.5,11.8z"/><path d="M503.8,389.1l6.9-14.1l.6-3.4l-6.8,14z"/><path d="M510.7,375l7.2-16.6l.6-3.4l-7.2,16.6z"/><path d="M517.9,358.4l7.7-19.4l.6-3.5l-7.7,19.5z"/><path d="M525.6,339l8.3-22.6l.5-3.4l-8.2,22.5z"/><path d="M533.9,316.4l8.9-26.2l.5-3.4l-8.9,26.2z"/><path d="M542.8,290.2l9.8-30.4l.4-3.3l-9.7,30.3z"/><path d="M552.6,259.8l10.7-35.2l.4-3.3l-10.7,35.2z"/><path d="M563.3,224.6l11.8-40.9l.4-3.2l-11.8,40.8z"/><path d="M575.1,183.7l13.3-47.8l.3-3l-13.2,47.6z"/><path d="M588.4,135.9l15.1-56.1l.2-2.8l-15,55.9z"/><path class="b" d="M321.8,65.1l13.5,54.2l1.8-2.7l-13.4-54z"/><path class="c" d="M335.3,119.3l12.1,46.9l1.7-2.9l-12-46.7z"/><path class="c" d="M347.4,166.2l11,40.7l1.5-2.9l-10.8-40.7z"/><path class="c" d="M358.4,206.9l9.9,35.6l1.4-3.1l-9.8-35.4z"/><path class="c" d="M368.3,242.5l9.2,31.1l1.3-3.1l-9.1-31.1z"/><path class="c" d="M377.5,273.6l8.5,27.3l1.2-3.2l-8.4-27.2z"/><path class="c" d="M386,300.9l7.8,23.8l1.2-3.2l-7.8-23.8z"/><path class="c" d="M393.8,324.7l7.5,20.8l1.1-3.2l-7.4-20.8z"/><path class="c" d="M401.3,345.5l6.9,18.2l1.1-3.3l-6.9-18.1z"/><path class="c" d="M408.2,363.7l6.7,15.6l1-3.3l-6.6-15.6z"/><path class="c" d="M414.9,379.3l6.4,13.5l.9-3.4l-6.3-13.4z"/><path class="c" d="M421.3,392.8l6.1,11.3l.9-3.3l-6.1-11.4z"/><path class="b" d="M427.4,404.1l5.9,9.5l.9-3.4l-5.9-9.4z"/><path class="b" d="M433.3,413.6l5.8,7.6l.9-3.4l-5.8-7.6z"/><path class="b" d="M439.1,421.2l5.7,5.9l.8-3.4l-5.6-5.9z"/><path class="b" d="M444.8,427.1l5.6,4.1l.8-3.4l-5.6-4.1z"/><path class="b" d="M450.4,431.2l5.6,2.6l.8-3.4l-5.6-2.6z"/><path class="b" d="M456,433.8l5.5,.9l.8-3.4l-5.5-.9z"/><path class="b" d="M461.5,434.7l5.6-.7l.7-3.5l-5.5,.8z"/><path class="b" d="M467.1,434l5.6-2.4l.8-3.5l-5.7,2.4z"/><path class="c" d="M472.7,431.6l5.8-4.1l.7-3.4l-5.7,4z"/><path class="c" d="M478.5,427.5l5.9-5.8l.6-3.5l-5.8,5.9z"/><path class="c" d="M484.4,421.7l6-7.7l.7-3.5l-6.1,7.7z"/><path d="M490.4,414l6.3-9.7l.6-3.4l-6.2,9.6z"/><path d="M496.7,404.3l6.5-11.7l.6-3.5l-6.5,11.8z"/><path d="M503.2,392.6l6.9-14.1l.6-3.5l-6.9,14.1z"/><path d="M510.1,378.5l7.2-16.6l.6-3.5l-7.2,16.6z"/><path d="M517.3,361.9l7.8-19.5l.5-3.4l-7.7,19.4z"/><path d="M525.1,342.4l8.3-22.6l.5-3.4l-8.3,22.6z"/><path d="M533.4,319.8l8.9-26.2l.5-3.4l-8.9,26.2z"/><path d="M542.3,293.6l9.8-30.4l.5-3.4l-9.8,30.4z"/><path d="M552.1,263.2l10.7-35.3l.5-3.3l-10.7,35.2z"/><path d="M562.8,227.9l12-41.1l.3-3.1l-11.8,40.9z"/><path d="M574.8,186.8l13.3-47.9l.3-3l-13.3,47.8z"/><path d="M588.1,138.9l15.2-56.3l.2-2.8l-15.1,56.1z"/><path class="b" d="M319.8,67.7l13.7,54.3l1.8-2.7l-13.5-54.2z"/><path class="c" d="M333.5,122l12.3,47.1l1.6-2.9l-12.1-46.9z"/><path class="c" d="M345.8,169.1l11.1,40.9l1.5-3.1l-11-40.7z"/><path class="c" d="M356.9,210l10,35.6l1.4-3.1l-9.9-35.6z"/><path class="c" d="M366.9,245.6l9.3,31.2l1.3-3.2l-9.2-31.1z"/><path class="c" d="M376.2,276.8l8.5,27.3l1.3-3.2l-8.5-27.3z"/><path class="c" d="M384.7,304.1l8,23.9l1.1-3.3l-7.8-23.8z"/><path class="c" d="M392.7,328l7.4,20.9l1.2-3.4l-7.5-20.8z"/><path class="c" d="M400.1,348.9l7.1,18.1l1-3.3l-6.9-18.2z"/><path class="c" d="M407.2,367l6.7,15.7l1-3.4l-6.7-15.6z"/><path class="c" d="M413.9,382.7l6.4,13.5l1-3.4l-6.4-13.5z"/><path class="b" d="M420.3,396.2l6.1,11.3l1-3.4l-6.1-11.3z"/><path class="b" d="M426.4,407.5l6,9.5l.9-3.4l-5.9-9.5z"/><path class="b" d="M432.4,417l5.8,7.6l.9-3.4l-5.8-7.6z"/><path class="b" d="M438.2,424.6l5.8,5.9l.8-3.4l-5.7-5.9z"/><path class="b" d="M444,430.5l5.6,4.2l.8-3.5l-5.6-4.1z"/><path class="b" d="M449.6,434.7l5.6,2.5l.8-3.4l-5.6-2.6z"/><path class="b" d="M455.2,437.2l5.5,.9l.8-3.4l-5.5-.9z"/><path class="b" d="M460.7,438.1l5.6-.7l.8-3.4l-5.6,.7z"/><path class="b" d="M466.3,437.4l5.7-2.3l.7-3.5l-5.6,2.4z"/><path class="b" d="M472,435.1l5.8-4.1l.7-3.5l-5.8,4.1z"/><path class="c" d="M477.8,431l5.9-5.8l.7-3.5l-5.9,5.8z"/><path d="M483.7,425.2l6-7.7l.7-3.5l-6,7.7z"/><path d="M489.7,417.5l6.3-9.7l.7-3.5l-6.3,9.7z"/><path d="M496,407.8l6.6-11.7l.6-3.5l-6.5,11.7z"/><path d="M502.6,396.1l6.9-14.1l.6-3.5l-6.9,14.1z"/><path d="M509.5,382l7.2-16.6l.6-3.5l-7.2,16.6z"/><path d="M516.7,365.4l7.8-19.5l.6-3.5l-7.8,19.5z"/><path d="M524.5,345.9l8.3-22.6l.6-3.5l-8.3,22.6z"/><path d="M532.8,323.3l9-26.3l.5-3.4l-8.9,26.2z"/><path d="M541.8,297l9.8-30.5l.5-3.3l-9.8,30.4z"/><path d="M551.6,266.5l10.8-35.3l.4-3.3l-10.7,35.3z"/><path d="M562.4,231.2l12-41.2l.4-3.2l-12,41.1z"/><path d="M574.4,190l13.4-48l.3-3.1l-13.3,47.9z"/><path d="M587.8,142l15.3-56.6l.2-2.8l-15.2,56.3z"/><path class="b" d="M317.9,70.2l13.8,54.6l1.8-2.8l-13.7-54.3z"/><path class="b" d="M331.7,124.8l12.4,47.2l1.7-2.9l-12.3-47.1z"/><path class="c" d="M344.1,172l11.2,41l1.6-3l-11.1-40.9z"/><path class="c" d="M355.3,213l10.2,35.8l1.4-3.2l-10-35.6z"/><path class="c" d="M365.5,248.8l9.3,31.2l1.4-3.2l-9.3-31.2z"/><path class="c" d="M374.8,280l8.6,27.4l1.3-3.3l-8.5-27.3z"/><path class="c" d="M383.4,307.4l8.1,23.9l1.2-3.3l-8-23.9z"/><path class="c" d="M391.5,331.3l7.5,20.9l1.1-3.3l-7.4-20.9z"/><path class="c" d="M399,352.2l7.1,18.2l1.1-3.4l-7.1-18.1z"/><path class="c" d="M406.1,370.4l6.7,15.7l1.1-3.4l-6.7-15.7z"/><path class="b" d="M412.8,386.1l6.5,13.5l1-3.4l-6.4-13.5z"/><path class="b" d="M419.3,399.6l6.2,11.4l.9-3.5l-6.1-11.3z"/><path class="b" d="M425.5,411l6,9.4l.9-3.4l-6-9.5z"/><path class="b" d="M431.5,420.4l5.9,7.7l.8-3.5l-5.8-7.6z"/><path class="b" d="M437.4,428.1l5.7,5.8l.9-3.4l-5.8-5.9z"/><path class="b" d="M443.1,433.9l5.6,4.2l.9-3.4l-5.6-4.2z"/><path class="b" d="M448.7,438.1l5.7,2.6l.8-3.5l-5.6-2.5z"/><path class="b" d="M454.4,440.7l5.6,.9l.7-3.5l-5.5-.9z"/><path class="b" d="M460,441.6l5.6-.7l.7-3.5l-5.6,.7z"/><path class="b" d="M465.6,440.9l5.7-2.3l.7-3.5l-5.7,2.3z"/><path class="b" d="M471.3,438.6l5.7-4.1l.8-3.5l-5.8,4.1z"/><path class="c" d="M477,434.5l6-5.8l.7-3.5l-5.9,5.8z"/><path d="M483,428.7l6-7.7l.7-3.5l-6,7.7z"/><path d="M489,421l6.3-9.6l.7-3.6l-6.3,9.7z"/><path d="M495.3,411.4l6.6-11.8l.7-3.5l-6.6,11.7z"/><path d="M501.9,399.6l6.9-14.1l.7-3.5l-6.9,14.1z"/><path d="M508.8,385.5l7.3-16.6l.6-3.5l-7.2,16.6z"/><path d="M516.1,368.9l7.8-19.5l.6-3.5l-7.8,19.5z"/><path d="M523.9,349.4l8.4-22.6l.5-3.5l-8.3,22.6z"/><path d="M532.3,326.8l9-26.3l.5-3.5l-9,26.3z"/><path d="M541.3,300.5l9.9-30.5l.4-3.5l-9.8,30.5z"/><path d="M551.2,270l10.8-35.5l.4-3.3l-10.8,35.3z"/><path d="M562,234.5l12-41.2l.4-3.3l-12,41.2z"/><path d="M574,193.3l13.5-48.2l.3-3.1l-13.4,48z"/><path d="M587.5,145.1l15.3-56.8l.3-2.9l-15.3,56.6z"/><path class="b" d="M315.9,72.8l14,54.8l1.8-2.8l-13.8-54.6z"/><path class="c" d="M329.9,127.6l12.6,47.4l1.6-3l-12.4-47.2z"/><path class="c" d="M342.5,175l11.3,41.1l1.5-3.1l-11.2-41z"/><path class="c" d="M353.8,216.1l10.2,35.8l1.5-3.1l-10.2-35.8z"/><path class="c" d="M364,251.9l9.4,31.4l1.4-3.3l-9.3-31.2z"/><path class="c" d="M373.4,283.3l8.7,27.4l1.3-3.3l-8.6-27.4z"/><path class="c" d="M382.1,310.7l8.1,23.9l1.3-3.3l-8.1-23.9z"/><path class="c" d="M390.2,334.6l7.6,21l1.2-3.4l-7.5-20.9z"/><path class="c" d="M397.8,355.6l7.2,18.2l1.1-3.4l-7.1-18.2z"/><path class="c" d="M405,373.8l6.8,15.7l1-3.4l-6.7-15.7z"/><path class="c" d="M411.8,389.5l6.5,13.5l1-3.4l-6.5-13.5z"/><path class="b" d="M418.3,403l6.2,11.4l1-3.4l-6.2-11.4z"/><path class="b" d="M424.5,414.4l6.1,9.5l.9-3.5l-6-9.4z"/><path class="b" d="M430.6,423.9l5.9,7.6l.9-3.4l-5.9-7.7z"/><path class="b" d="M436.5,431.5l5.7,5.9l.9-3.5l-5.7-5.8z"/><path class="b" d="M442.2,437.4l5.7,4.2l.8-3.5l-5.6-4.2z"/><path class="b" d="M447.9,441.6l5.6,2.6l.9-3.5l-5.7-2.6z"/><path class="b" d="M453.5,444.2l5.7,.9l.8-3.5l-5.6-.9z"/><path class="b" d="M459.2,445.1l5.6-.7l.8-3.5l-5.6,.7z"/><path class="b" d="M464.8,444.4l5.7-2.3l.8-3.5l-5.7,2.3z"/><path class="b" d="M470.5,442.1l5.8-4l.7-3.6l-5.7,4.1z"/><path class="c" d="M476.3,438.1l5.9-5.9l.8-3.5l-6,5.8z"/><path class="c" d="M482.2,432.2l6.2-7.6l.6-3.6l-6,7.7z"/><path d="M488.4,424.6l6.3-9.7l.6-3.5l-6.3,9.6z"/><path d="M494.7,414.9l6.6-11.7l.6-3.6l-6.6,11.8z"/><path d="M501.3,403.2l6.9-14.1l.6-3.6l-6.9,14.1z"/><path d="M508.2,389.1l7.3-16.6l.6-3.6l-7.3,16.6z"/><path d="M515.5,372.5l7.8-19.5l.6-3.6l-7.8,19.5z"/><path d="M523.3,353l8.4-22.7l.6-3.5l-8.4,22.6z"/><path d="M531.7,330.3l9.1-26.3l.5-3.5l-9,26.3z"/><path d="M540.8,304l9.9-30.6l.5-3.4l-9.9,30.5z"/><path d="M550.7,273.4l10.8-35.5l.5-3.4l-10.8,35.5z"/><path d="M561.5,237.9l12.1-41.3l.4-3.3l-12,41.2z"/><path d="M573.6,196.6l13.6-48.4l.3-3.1l-13.5,48.2z"/><path d="M587.2,148.2l15.4-56.9l.2-3l-15.3,56.8z"/><path class="b" d="M313.8,75.4l14.3,55.1l1.8-2.9l-14-54.8z"/><path class="b" d="M328.1,130.5l12.7,47.5l1.7-3l-12.6-47.4z"/><path class="b" d="M340.8,178l11.4,41.2l1.6-3.1l-11.3-41.1z"/><path class="c" d="M352.2,219.2l10.4,36l1.4-3.3l-10.2-35.8z"/><path class="c" d="M362.6,255.2l9.5,31.4l1.3-3.3l-9.4-31.4z"/><path class="c" d="M372.1,286.6l8.8,27.4l1.2-3.3l-8.7-27.4z"/><path class="c" d="M380.9,314l8.1,24l1.2-3.4l-8.1-23.9z"/><path class="c" d="M389,338l7.7,21l1.1-3.4l-7.6-21z"/><path class="c" d="M396.7,359l7.2,18.2l1.1-3.4l-7.2-18.2z"/><path class="c" d="M403.9,377.2l6.8,15.8l1.1-3.5l-6.8-15.7z"/><path class="b" d="M410.7,393l6.6,13.5l1-3.5l-6.5-13.5z"/><path class="b" d="M417.3,406.5l6.3,11.4l.9-3.5l-6.2-11.4z"/><path class="b" d="M423.6,417.9l6,9.5l1-3.5l-6.1-9.5z"/><path class="b" d="M429.6,427.4l6,7.6l.9-3.5l-5.9-7.6z"/><path class="b" d="M435.6,435l5.7,6l.9-3.6l-5.7-5.9z"/><path class="b" d="M441.3,441l5.8,4.2l.8-3.6l-5.7-4.2z"/><path class="b" d="M447.1,445.2l5.6,2.5l.8-3.5l-5.6-2.6z"/><path class="b" d="M452.7,447.7l5.7,1l.8-3.6l-5.7-.9z"/><path class="b" d="M458.4,448.7l5.6-.7l.8-3.6l-5.6,.7z"/><path class="b" d="M464,448l5.8-2.3l.7-3.6l-5.7,2.3z"/><path class="b" d="M469.8,445.7l5.8-4.1l.7-3.5l-5.8,4z"/><path class="c" d="M475.6,441.6l5.9-5.8l.7-3.6l-5.9,5.9z"/><path class="c" d="M481.5,435.8l6.2-7.6l.7-3.6l-6.2,7.6z"/><path d="M487.7,428.2l6.3-9.7l.7-3.6l-6.3,9.7z"/><path d="M494,418.5l6.6-11.7l.7-3.6l-6.6,11.7z"/><path d="M500.6,406.8l7-14.1l.6-3.6l-6.9,14.1z"/><path d="M507.6,392.7l7.3-16.6l.6-3.6l-7.3,16.6z"/><path d="M514.9,376.1l7.9-19.5l.5-3.6l-7.8,19.5z"/><path d="M522.8,356.6l8.4-22.7l.5-3.6l-8.4,22.7z"/><path d="M531.2,333.9l9.1-26.3l.5-3.6l-9.1,26.3z"/><path d="M540.3,307.6l9.9-30.7l.5-3.5l-9.9,30.6z"/><path d="M550.2,276.9l10.9-35.5l.4-3.5l-10.8,35.5z"/><path d="M561.1,241.4l12.1-41.5l.4-3.3l-12.1,41.3z"/><path d="M573.2,199.9l13.7-48.5l.3-3.2l-13.6,48.4z"/><path d="M586.9,151.4l15.5-57.2l.2-2.9l-15.4,56.9z"/><path d="M602.4,94.2l17.8-67.9l.1-2.6l-17.7,67.6z"/><path class="b" d="M311.8,78.1l14.4,55.2l1.9-2.8l-14.3-55.1z"/><path class="b" d="M326.2,133.3l12.8,47.7l1.8-3l-12.7-47.5z"/><path class="b" d="M339,181l11.6,41.4l1.6-3.2l-11.4-41.2z"/><path class="c" d="M350.6,222.4l10.5,36l1.5-3.2l-10.4-36z"/><path class="c" d="M361.1,258.4l9.6,31.5l1.4-3.3l-9.5-31.4z"/><path class="c" d="M370.7,289.9l8.8,27.5l1.4-3.4l-8.8-27.4z"/><path class="c" d="M379.5,317.4l8.3,24l1.2-3.4l-8.1-24z"/><path class="c" d="M387.8,341.4l7.7,21l1.2-3.4l-7.7-21z"/><path class="c" d="M395.5,362.4l7.3,18.3l1.1-3.5l-7.2-18.2z"/><path class="c" d="M402.8,380.7l6.9,15.8l1-3.5l-6.8-15.8z"/><path class="b" d="M409.7,396.5l6.5,13.5l1.1-3.5l-6.6-13.5z"/><path class="b" d="M416.2,410l6.4,11.4l1-3.5l-6.3-11.4z"/><path class="b" d="M422.6,421.4l6.1,9.5l.9-3.5l-6-9.5z"/><path class="b" d="M428.7,430.9l5.9,7.7l1-3.6l-6-7.6z"/><path class="b" d="M434.6,438.6l5.9,5.9l.8-3.5l-5.7-6z"/><path class="b" d="M440.5,444.5l5.7,4.2l.9-3.5l-5.8-4.2z"/><path class="b" d="M446.2,448.7l5.7,2.6l.8-3.6l-5.6-2.5z"/><path class="b" d="M451.9,451.3l5.7,1l.8-3.6l-5.7-1z"/><path class="b" d="M457.6,452.3l5.7-.7l.7-3.6l-5.6,.7z"/><path class="b" d="M463.3,451.6l5.7-2.3l.8-3.6l-5.8,2.3z"/><path class="b" d="M469,449.3l5.8-4.1l.8-3.6l-5.8,4.1z"/><path class="c" d="M474.8,445.2l6-5.7l.7-3.7l-5.9,5.8z"/><path class="c" d="M480.8,439.5l6.2-7.7l.7-3.6l-6.2,7.6z"/><path d="M487,431.8l6.3-9.6l.7-3.7l-6.3,9.7z"/><path d="M493.3,422.2l6.7-11.8l.6-3.6l-6.6,11.7z"/><path d="M500,410.4l6.9-14l.7-3.7l-7,14.1z"/><path d="M506.9,396.4l7.4-16.7l.6-3.6l-7.3,16.6z"/><path d="M514.3,379.7l7.9-19.5l.6-3.6l-7.9,19.5z"/><path d="M522.2,360.2l8.4-22.7l.6-3.6l-8.4,22.7z"/><path d="M530.6,337.5l9.1-26.4l.6-3.5l-9.1,26.3z"/><path d="M539.7,311.1l10-30.6l.5-3.6l-9.9,30.7z"/><path d="M549.7,280.5l11-35.6l.4-3.5l-10.9,35.5z"/><path d="M560.7,244.9l12.2-41.6l.3-3.4l-12.1,41.5z"/><path d="M572.9,203.3l13.7-48.7l.3-3.2l-13.7,48.5z"/><path d="M586.6,154.6l15.5-57.3l.3-3.1l-15.5,57.2z"/><path d="M602.1,97.3l18-68.2l.1-2.8l-17.8,67.9z"/><path class="b" d="M309.7,80.8l14.6,55.4l1.9-2.9l-14.4-55.2z"/><path class="b" d="M324.3,136.2l13,47.9l1.7-3.1l-12.8-47.7z"/><path class="b" d="M337.3,184.1l11.7,41.5l1.6-3.2l-11.6-41.4z"/><path class="b" d="M349,225.6l10.6,36.1l1.5-3.3l-10.5-36z"/><path class="c" d="M359.6,261.7l9.7,31.5l1.4-3.3l-9.6-31.5z"/><path class="c" d="M369.3,293.2l8.9,27.6l1.3-3.4l-8.8-27.5z"/><path class="c" d="M378.2,320.8l8.3,24.1l1.3-3.5l-8.3-24z"/><path class="c" d="M386.5,344.9l7.8,21l1.2-3.5l-7.7-21z"/><path class="b" d="M394.3,365.9l7.3,18.3l1.2-3.5l-7.3-18.3z"/><path class="b" d="M401.6,384.2l7,15.8l1.1-3.5l-6.9-15.8z"/><path class="b" d="M408.6,400l6.6,13.5l1-3.5l-6.5-13.5z"/><path class="b" d="M415.2,413.5l6.4,11.5l1-3.6l-6.4-11.4z"/><path class="b" d="M421.6,425l6.1,9.5l1-3.6l-6.1-9.5z"/><path class="b" d="M427.7,434.5l6,7.7l.9-3.6l-5.9-7.7z"/><path class="b" d="M433.7,442.2l5.9,5.9l.9-3.6l-5.9-5.9z"/><path class="b" d="M439.6,448.1l5.7,4.2l.9-3.6l-5.7-4.2z"/><path class="b" d="M445.3,452.3l5.8,2.6l.8-3.6l-5.7-2.6z"/><path class="b" d="M451.1,454.9l5.7,1l.8-3.6l-5.7-1z"/><path class="b" d="M456.8,455.9l5.7-.7l.8-3.6l-5.7,.7z"/><path class="b" d="M462.5,455.2l5.7-2.3l.8-3.6l-5.7,2.3z"/><path class="b" d="M468.2,452.9l5.9-4l.7-3.7l-5.8,4.1z"/><path class="c" d="M474.1,448.9l6-5.8l.7-3.6l-6,5.7z"/><path class="c" d="M480.1,443.1l6.2-7.6l.7-3.7l-6.2,7.7z"/><path d="M486.3,435.5l6.3-9.6l.7-3.7l-6.3,9.6z"/><path d="M492.6,425.9l6.7-11.8l.7-3.7l-6.7,11.8z"/><path d="M499.3,414.1l7-14.1l.6-3.6l-6.9,14z"/><path d="M506.3,400l7.4-16.6l.6-3.7l-7.4,16.7z"/><path d="M513.7,383.4l7.9-19.5l.6-3.7l-7.9,19.5z"/><path d="M521.6,363.9l8.4-22.7l.6-3.7l-8.4,22.7z"/><path d="M530,341.2l9.2-26.4l.5-3.7l-9.1,26.4z"/><path d="M539.2,314.8l10-30.7l.5-3.6l-10,30.6z"/><path d="M549.2,284.1l11-35.7l.5-3.5l-11,35.6z"/><path d="M560.2,248.4l12.3-41.7l.4-3.4l-12.2,41.6z"/><path d="M572.5,206.7l13.7-48.8l.4-3.3l-13.7,48.7z"/><path d="M586.2,157.9l15.7-57.6l.2-3l-15.5,57.3z"/><path d="M601.9,100.3l18.1-68.5l.1-2.7l-18,68.2z"/><path class="b" d="M307.6,83.5l14.8,55.7l1.9-3l-14.6-55.4z"/><path class="b" d="M322.4,139.2l13.1,48l1.8-3.1l-13-47.9z"/><path class="b" d="M335.5,187.2l11.9,41.6l1.6-3.2l-11.7-41.5z"/><path class="b" d="M347.4,228.8l10.7,36.2l1.5-3.3l-10.6-36.1z"/><path class="c" d="M358.1,265l9.8,31.6l1.4-3.4l-9.7-31.5z"/><path class="c" d="M367.9,296.6l9,27.6l1.3-3.4l-8.9-27.6z"/><path class="c" d="M376.9,324.2l8.4,24.2l1.2-3.5l-8.3-24.1z"/><path class="c" d="M385.3,348.4l7.8,21l1.2-3.5l-7.8-21z"/><path class="c" d="M393.1,369.4l7.4,18.3l1.1-3.5l-7.3-18.3z"/><path class="b" d="M400.5,387.7l7,15.8l1.1-3.5l-7-15.8z"/><path class="b" d="M407.5,403.5l6.7,13.6l1-3.6l-6.6-13.5z"/><path class="b" d="M414.2,417.1l6.4,11.5l1-3.6l-6.4-11.5z"/><path class="b" d="M420.6,428.6l6.2,9.5l.9-3.6l-6.1-9.5z"/><path class="b" d="M426.8,438.1l6,7.7l.9-3.6l-6-7.7z"/><path class="b" d="M432.8,445.8l5.9,5.9l.9-3.6l-5.9-5.9z"/><path class="b" d="M438.7,451.7l5.8,4.3l.8-3.7l-5.7-4.2z"/><path class="b" d="M444.5,456l5.7,2.6l.9-3.7l-5.8-2.6z"/><path class="b" d="M450.2,458.6l5.7,.9l.9-3.6l-5.7-1z"/><path class="b" d="M455.9,459.5l5.8-.6l.8-3.7l-5.7,.7z"/><path class="b" d="M461.7,458.9l5.8-2.3l.7-3.7l-5.7,2.3z"/><path class="b" d="M467.5,456.6l5.8-4l.8-3.7l-5.9,4z"/><path class="c" d="M473.3,452.6l6.1-5.8l.7-3.7l-6,5.8z"/><path class="c" d="M479.4,446.8l6.1-7.6l.8-3.7l-6.2,7.6z"/><path d="M485.5,439.2l6.4-9.6l.7-3.7l-6.3,9.6z"/><path d="M491.9,429.6l6.7-11.8l.7-3.7l-6.7,11.8z"/><path d="M498.6,417.8l7-14l.7-3.8l-7,14.1z"/><path d="M505.6,403.8l7.5-16.7l.6-3.7l-7.4,16.6z"/><path d="M513.1,387.1l7.9-19.5l.6-3.7l-7.9,19.5z"/><path d="M521,367.6l8.5-22.7l.5-3.7l-8.4,22.7z"/><path d="M529.5,344.9l9.1-26.5l.6-3.6l-9.2,26.4z"/><path d="M538.6,318.4l10.1-30.7l.5-3.6l-10,30.7z"/><path d="M548.7,287.7l11-35.8l.5-3.5l-11,35.7z"/><path d="M559.7,251.9l12.3-41.7l.5-3.5l-12.3,41.7z"/><path d="M572,210.2l13.9-49l.3-3.3l-13.7,48.8z"/><path d="M585.9,161.2l15.8-57.8l.2-3.1l-15.7,57.6z"/><path d="M601.7,103.4l18.1-68.8l.2-2.8l-18.1,68.5z"/><path class="b" d="M305.5,86.3l15,55.9l1.9-3l-14.8-55.7z"/><path class="b" d="M320.5,142.2l13.3,48.1l1.7-3.1l-13.1-48z"/><path class="b" d="M333.8,190.3l11.9,41.8l1.7-3.3l-11.9-41.6z"/><path class="b" d="M345.7,232.1l10.8,36.3l1.6-3.4l-10.7-36.2z"/><path class="b" d="M356.5,268.4l9.9,31.6l1.5-3.4l-9.8-31.6z"/><path class="b" d="M366.4,300l9.1,27.7l1.4-3.5l-9-27.6z"/><path class="b" d="M375.5,327.7l8.5,24.2l1.3-3.5l-8.4-24.2z"/><path class="b" d="M384,351.9l7.9,21.1l1.2-3.6l-7.8-21z"/><path class="b" d="M391.9,373l7.4,18.3l1.2-3.6l-7.4-18.3z"/><path class="b" d="M399.3,391.3l7.1,15.8l1.1-3.6l-7-15.8z"/><path class="b" d="M406.4,407.1l6.7,13.6l1.1-3.6l-6.7-13.6z"/><path class="b" d="M413.1,420.7l6.5,11.5l1-3.6l-6.4-11.5z"/><path class="b" d="M419.6,432.2l6.2,9.5l1-3.6l-6.2-9.5z"/><path class="b" d="M425.8,441.7l6,7.7l1-3.6l-6-7.7z"/><path class="b" d="M431.8,449.4l6,6l.9-3.7l-5.9-5.9z"/><path class="b" d="M437.8,455.4l5.8,4.2l.9-3.6l-5.8-4.3z"/><path class="b" d="M443.6,459.6l5.8,2.6l.8-3.6l-5.7-2.6z"/><path class="b" d="M449.4,462.2l5.7,1l.8-3.7l-5.7-.9z"/><path class="b" d="M455.1,463.2l5.8-.6l.8-3.7l-5.8,.6z"/><path class="b" d="M460.9,462.6l5.8-2.3l.8-3.7l-5.8,2.3z"/><path class="b" d="M466.7,460.3l5.9-4l.7-3.7l-5.8,4z"/><path class="c" d="M472.6,456.3l6-5.8l.8-3.7l-6.1,5.8z"/><path class="c" d="M478.6,450.5l6.2-7.6l.7-3.7l-6.1,7.6z"/><path d="M484.8,442.9l6.4-9.6l.7-3.7l-6.4,9.6z"/><path d="M491.2,433.3l6.7-11.7l.7-3.8l-6.7,11.8z"/><path d="M497.9,421.6l7.1-14.1l.6-3.7l-7,14z"/><path d="M505,407.5l7.4-16.6l.7-3.8l-7.5,16.7z"/><path d="M512.4,390.9l8-19.5l.6-3.8l-7.9,19.5z"/><path d="M520.4,371.4l8.5-22.8l.6-3.7l-8.5,22.7z"/><path d="M528.9,348.6l9.2-26.4l.5-3.8l-9.1,26.5z"/><path d="M538.1,322.2l10.1-30.8l.5-3.7l-10.1,30.7z"/><path d="M548.2,291.4l11.1-35.9l.4-3.6l-11,35.8z"/><path d="M559.3,255.5l12.3-41.8l.4-3.5l-12.3,41.7z"/><path d="M571.6,213.7l14-49.1l.3-3.4l-13.9,49z"/><path d="M585.6,164.6l15.8-58l.3-3.2l-15.8,57.8z"/><path d="M601.4,106.6l18.3-69.2l.1-2.8l-18.1,68.8z"/><path class="b" d="M303.3,89.1l15.2,56.1l2-3l-15-55.9z"/><path class="b" d="M318.5,145.2l13.5,48.3l1.8-3.2l-13.3-48.1z"/><path class="b" d="M332,193.5l12,41.9l1.7-3.3l-11.9-41.8z"/><path class="b" d="M344,235.4l11,36.3l1.5-3.3l-10.8-36.3z"/><path class="b" d="M355,271.7l10,31.8l1.4-3.5l-9.9-31.6z"/><path class="c" d="M365,303.5l9.2,27.7l1.3-3.5l-9.1-27.7z"/><path class="c" d="M374.2,331.2l8.5,24.2l1.3-3.5l-8.5-24.2z"/><path class="b" d="M382.7,355.4l8,21.1l1.2-3.5l-7.9-21.1z"/><path class="b" d="M390.7,376.5l7.5,18.4l1.1-3.6l-7.4-18.3z"/><path class="b" d="M398.2,394.9l7.1,15.8l1.1-3.6l-7.1-15.8z"/><path class="b" d="M405.3,410.7l6.7,13.6l1.1-3.6l-6.7-13.6z"/><path class="b" d="M412,424.3l6.5,11.5l1.1-3.6l-6.5-11.5z"/><path class="b" d="M418.5,435.8l6.3,9.6l1-3.7l-6.2-9.5z"/><path class="b" d="M424.8,445.4l6.1,7.7l.9-3.7l-6-7.7z"/><path class="b" d="M430.9,453.1l5.9,5.9l1-3.6l-6-6z"/><path class="b" d="M436.8,459l5.9,4.3l.9-3.7l-5.8-4.2z"/><path class="b" d="M442.7,463.3l5.8,2.6l.9-3.7l-5.8-2.6z"/><path class="b" d="M448.5,465.9l5.8,1l.8-3.7l-5.7-1z"/><path class="b" d="M454.3,466.9l5.8-.6l.8-3.7l-5.8,.6z"/><path class="b" d="M460.1,466.3l5.8-2.3l.8-3.7l-5.8,2.3z"/><path class="b" d="M465.9,464l5.9-4l.8-3.7l-5.9,4z"/><path class="c" d="M471.8,460l6.1-5.7l.7-3.8l-6,5.8z"/><path class="c" d="M477.9,454.3l6.2-7.6l.7-3.8l-6.2,7.6z"/><path d="M484.1,446.7l6.4-9.6l.7-3.8l-6.4,9.6z"/><path d="M490.5,437.1l6.8-11.7l.6-3.8l-6.7,11.7z"/><path d="M497.3,425.4l7-14.1l.7-3.8l-7.1,14.1z"/><path d="M504.3,411.3l7.5-16.6l.6-3.8l-7.4,16.6z"/><path d="M511.8,394.7l7.9-19.5l.7-3.8l-8,19.5z"/><path d="M519.7,375.2l8.6-22.8l.6-3.8l-8.5,22.8z"/><path d="M528.3,352.4l9.2-26.5l.6-3.7l-9.2,26.4z"/><path d="M537.5,325.9l10.2-30.8l.5-3.7l-10.1,30.8z"/><path d="M547.7,295.1l11.1-35.9l.5-3.7l-11.1,35.9z"/><path d="M558.8,259.2l12.4-42l.4-3.5l-12.3,41.8z"/><path d="M571.2,217.2l14-49.2l.4-3.4l-14,49.1z"/><path d="M585.2,168l16-58.2l.2-3.2l-15.8,58z"/><path d="M601.2,109.8l18.4-69.5l.1-2.9l-18.3,69.2z"/><path class="b" d="M301.2,91.9l15.3,56.3l2-3l-15.2-56.1z"/><path class="b" d="M316.5,148.2l13.6,48.5l1.9-3.2l-13.5-48.3z"/><path class="b" d="M330.1,196.7l12.3,42l1.6-3.3l-12-41.9z"/><path class="b" d="M342.4,238.7l11,36.5l1.6-3.5l-11-36.3z"/><path class="b" d="M353.4,275.2l10.1,31.8l1.5-3.5l-10-31.8z"/><path class="b" d="M363.5,307l9.3,27.8l1.4-3.6l-9.2-27.7z"/><path class="b" d="M372.8,334.8l8.6,24.2l1.3-3.6l-8.5-24.2z"/><path class="b" d="M381.4,359l8,21.1l1.3-3.6l-8-21.1z"/><path class="b" d="M389.4,380.1l7.6,18.4l1.2-3.6l-7.5-18.4z"/><path class="b" d="M397,398.5l7.2,15.9l1.1-3.7l-7.1-15.8z"/><path class="b" d="M404.2,414.4l6.8,13.6l1-3.7l-6.7-13.6z"/><path class="b" d="M411,428l6.5,11.5l1-3.7l-6.5-11.5z"/><path class="b" d="M417.5,439.5l6.3,9.6l1-3.7l-6.3-9.6z"/><path class="b" d="M423.8,449.1l6.1,7.7l1-3.7l-6.1-7.7z"/><path class="b" d="M429.9,456.8l6,6l.9-3.8l-5.9-5.9z"/><path class="b" d="M435.9,462.8l5.9,4.2l.9-3.7l-5.9-4.3z"/><path class="b" d="M441.8,467l5.8,2.7l.9-3.8l-5.8-2.6z"/><path class="b" d="M447.6,469.7l5.8,1l.9-3.8l-5.8-1z"/><path class="b" d="M453.4,470.7l5.8-.6l.9-3.8l-5.8,.6z"/><path class="b" d="M459.2,470.1l5.9-2.3l.8-3.8l-5.8,2.3z"/><path class="b" d="M465.1,467.8l5.9-4l.8-3.8l-5.9,4z"/><path class="c" d="M471,463.8l6.1-5.7l.8-3.8l-6.1,5.7z"/><path class="c" d="M477.1,458.1l6.3-7.6l.7-3.8l-6.2,7.6z"/><path d="M483.4,450.5l6.4-9.6l.7-3.8l-6.4,9.6z"/><path d="M489.8,440.9l6.8-11.7l.7-3.8l-6.8,11.7z"/><path d="M496.6,429.2l7-14l.7-3.9l-7,14.1z"/><path d="M503.6,415.2l7.5-16.7l.7-3.8l-7.5,16.6z"/><path d="M511.1,398.5l8-19.5l.6-3.8l-7.9,19.5z"/><path d="M519.1,379l8.6-22.8l.6-3.8l-8.6,22.8z"/><path d="M527.7,356.2l9.3-26.5l.5-3.8l-9.2,26.5z"/><path d="M537,329.7l10.1-30.8l.6-3.8l-10.2,30.8z"/><path d="M547.1,298.9l11.2-36l.5-3.7l-11.1,35.9z"/><path d="M558.3,262.9l12.5-42.1l.4-3.6l-12.4,42z"/><path d="M570.8,220.8l14.1-49.4l.3-3.4l-14,49.2z"/><path d="M584.9,171.4l16-58.4l.3-3.2l-16,58.2z"/><path d="M600.9,113l18.6-69.8l.1-2.9l-18.4,69.5z"/><path class="b" d="M281.2,28.6l17.8,66.2l2.2-2.9l-17.5-65.9z"/><path class="b" d="M299,94.8l15.5,56.5l2-3.1l-15.3-56.3z"/><path class="b" d="M314.5,151.3l13.8,48.7l1.8-3.3l-13.6-48.5z"/><path class="b" d="M328.3,200l12.3,42.1l1.8-3.4l-12.3-42z"/><path class="b" d="M340.6,242.1l11.2,36.5l1.6-3.4l-11-36.5z"/><path class="b" d="M351.8,278.6l10.2,31.9l1.5-3.5l-10.1-31.8z"/><path class="b" d="M362,310.5l9.4,27.8l1.4-3.5l-9.3-27.8z"/><path class="b" d="M371.4,338.3l8.7,24.3l1.3-3.6l-8.6-24.2z"/><path class="b" d="M380.1,362.6l8.1,21.2l1.2-3.7l-8-21.1z"/><path class="b" d="M388.2,383.8l7.6,18.4l1.2-3.7l-7.6-18.4z"/><path class="b" d="M395.8,402.2l7.2,15.9l1.2-3.7l-7.2-15.9z"/><path class="b" d="M403,418.1l6.9,13.6l1.1-3.7l-6.8-13.6z"/><path class="b" d="M409.9,431.7l6.6,11.5l1-3.7l-6.5-11.5z"/><path class="b" d="M416.5,443.2l6.3,9.6l1-3.7l-6.3-9.6z"/><path class="b" d="M422.8,452.8l6.2,7.7l.9-3.7l-6.1-7.7z"/><path class="b" d="M429,460.5l6,6l.9-3.7l-6-6z"/><path class="b" d="M435,466.5l5.9,4.3l.9-3.8l-5.9-4.2z"/><path class="b" d="M440.9,470.8l5.9,2.6l.8-3.7l-5.8-2.7z"/><path class="b" d="M446.8,473.4l5.8,1.1l.8-3.8l-5.8-1z"/><path class="b" d="M452.6,474.5l5.8-.6l.8-3.8l-5.8,.6z"/><path class="b" d="M458.4,473.9l5.9-2.3l.8-3.8l-5.9,2.3z"/><path class="b" d="M464.3,471.6l6-4l.7-3.8l-5.9,4z"/><path class="c" d="M470.3,467.6l6-5.7l.8-3.8l-6.1,5.7z"/><path class="c" d="M476.3,461.9l6.3-7.6l.8-3.8l-6.3,7.6z"/><path d="M482.6,454.3l6.5-9.5l.7-3.9l-6.4,9.6z"/><path d="M489.1,444.8l6.8-11.7l.7-3.9l-6.8,11.7z"/><path d="M495.9,433.1l7.1-14.1l.6-3.8l-7,14z"/><path d="M503,419l7.5-16.6l.6-3.9l-7.5,16.7z"/><path d="M510.5,402.4l8-19.5l.6-3.9l-8,19.5z"/><path d="M518.5,382.9l8.6-22.8l.6-3.9l-8.6,22.8z"/><path d="M527.1,360.1l9.3-26.5l.6-3.9l-9.3,26.5z"/><path d="M536.4,333.6l10.2-30.9l.5-3.8l-10.1,30.8z"/><path d="M546.6,302.7l11.2-36.1l.5-3.7l-11.2,36z"/><path d="M557.8,266.6l12.6-42.1l.4-3.7l-12.5,42.1z"/><path d="M570.4,224.5l14.1-49.6l.4-3.5l-14.1,49.4z"/><path d="M584.5,174.9l16.2-58.6l.2-3.3l-16,58.4z"/><path d="M600.7,116.3l18.6-70.1l.2-3l-18.6,69.8z"/><path class="b" d="M278.8,31.2l17.9,66.5l2.3-2.9l-17.8-66.2z"/><path class="b" d="M296.7,97.7l15.8,56.8l2-3.2l-15.5-56.5z"/><path class="b" d="M312.5,154.5l13.9,48.8l1.9-3.3l-13.8-48.7z"/><path class="b" d="M326.4,203.3l12.5,42.2l1.7-3.4l-12.3-42.1z"/><path class="b" d="M338.9,245.5l11.3,36.6l1.6-3.5l-11.2-36.5z"/><path class="b" d="M350.2,282.1l10.3,32l1.5-3.6l-10.2-31.9z"/><path class="b" d="M360.5,314.1l9.5,27.9l1.4-3.7l-9.4-27.8z"/><path class="b" d="M370,342l8.8,24.3l1.3-3.7l-8.7-24.3z"/><path class="b" d="M378.8,366.3l8.1,21.2l1.3-3.7l-8.1-21.2z"/><path class="b" d="M386.9,387.5l7.7,18.4l1.2-3.7l-7.6-18.4z"/><path class="b" d="M394.6,405.9l7.3,15.9l1.1-3.7l-7.2-15.9z"/><path class="b" d="M401.9,421.8l6.9,13.7l1.1-3.8l-6.9-13.6z"/><path class="b" d="M408.8,435.5l6.6,11.5l1.1-3.8l-6.6-11.5z"/><path class="b" d="M415.4,447l6.4,9.6l1-3.8l-6.3-9.6z"/><path class="b" d="M421.8,456.6l6.2,7.7l1-3.8l-6.2-7.7z"/><path class="b" d="M428,464.3l6,6l1-3.8l-6-6z"/><path class="b" d="M434,470.3l6,4.3l.9-3.8l-5.9-4.3z"/><path class="b" d="M440,474.6l5.9,2.7l.9-3.9l-5.9-2.6z"/><path class="b" d="M445.9,477.3l5.8,1l.9-3.8l-5.8-1.1z"/><path class="b" d="M451.7,478.3l5.9-.6l.8-3.8l-5.8,.6z"/><path class="b" d="M457.6,477.7l5.9-2.3l.8-3.8l-5.9,2.3z"/><path class="b" d="M463.5,475.4l6-3.9l.8-3.9l-6,4z"/><path class="c" d="M469.5,471.5l6.1-5.7l.7-3.9l-6,5.7z"/><path class="c" d="M475.6,465.8l6.3-7.6l.7-3.9l-6.3,7.6z"/><path class="c" d="M481.9,458.2l6.5-9.5l.7-3.9l-6.5,9.5z"/><path d="M488.4,448.7l6.8-11.7l.7-3.9l-6.8,11.7z"/><path d="M495.2,437l7.1-14.1l.7-3.9l-7.1,14.1z"/><path d="M502.3,422.9l7.5-16.6l.7-3.9l-7.5,16.6z"/><path d="M509.8,406.3l8-19.5l.7-3.9l-8,19.5z"/><path d="M517.8,386.8l8.7-22.8l.6-3.9l-8.6,22.8z"/><path d="M526.5,364l9.3-26.6l.6-3.8l-9.3,26.5z"/><path d="M535.8,337.4l10.3-30.9l.5-3.8l-10.2,30.9z"/><path d="M546.1,306.5l11.3-36.1l.4-3.8l-11.2,36.1z"/><path d="M557.4,270.4l12.6-42.2l.4-3.7l-12.6,42.1z"/><path d="M570,228.2l14.2-49.7l.3-3.6l-14.1,49.6z"/><path d="M584.2,178.5l16.2-58.9l.3-3.3l-16.2,58.6z"/><path d="M600.4,119.6l18.8-70.4l.1-3l-18.6,70.1z"/><path class="b" d="M276.2,33.9l18.2,66.8l2.3-3l-17.9-66.5z"/><path class="b" d="M294.4,100.7l16,56.9l2.1-3.1l-15.8-56.8z"/><path class="b" d="M310.4,157.6l14.1,49l1.9-3.3l-13.9-48.8z"/><path class="b" d="M324.5,206.6l12.7,42.3l1.7-3.4l-12.5-42.2z"/><path class="b" d="M337.2,248.9l11.4,36.8l1.6-3.6l-11.3-36.6z"/><path class="b" d="M348.6,285.7l10.4,32l1.5-3.6l-10.3-32z"/><path class="b" d="M359,317.7l9.6,27.9l1.4-3.6l-9.5-27.9z"/><path class="b" d="M368.6,345.6l8.8,24.4l1.4-3.7l-8.8-24.3z"/><path class="b" d="M377.4,370l8.3,21.2l1.2-3.7l-8.1-21.2z"/><path class="b" d="M385.7,391.2l7.7,18.5l1.2-3.8l-7.7-18.4z"/><path class="b" d="M393.4,409.7l7.3,15.9l1.2-3.8l-7.3-15.9z"/><path class="b" d="M400.7,425.6l7,13.6l1.1-3.7l-6.9-13.7z"/><path class="b" d="M407.7,439.2l6.7,11.6l1-3.8l-6.6-11.5z"/><path class="b" d="M414.4,450.8l6.4,9.6l1-3.8l-6.4-9.6z"/><path class="b" d="M420.8,460.4l6.2,7.7l1-3.8l-6.2-7.7z"/><path class="b" d="M427,468.1l6.1,6l.9-3.8l-6-6z"/><path class="b" d="M433.1,474.1l6,4.3l.9-3.8l-6-4.3z"/><path class="b" d="M439.1,478.4l5.9,2.7l.9-3.8l-5.9-2.7z"/><path class="b" d="M445,481.1l5.8,1l.9-3.8l-5.8-1z"/><path class="b" d="M450.8,482.1l5.9-.5l.9-3.9l-5.9,.6z"/><path class="b" d="M456.7,481.6l6-2.3l.8-3.9l-5.9,2.3z"/><path class="b" d="M462.7,479.3l6-3.9l.8-3.9l-6,3.9z"/><path class="c" d="M468.7,475.4l6.1-5.7l.8-3.9l-6.1,5.7z"/><path class="c" d="M474.8,469.7l6.3-7.6l.8-3.9l-6.3,7.6z"/><path d="M481.1,462.1l6.5-9.5l.8-3.9l-6.5,9.5z"/><path d="M487.6,452.6l6.8-11.7l.8-3.9l-6.8,11.7z"/><path d="M494.4,440.9l7.2-14l.7-4l-7.1,14.1z"/><path d="M501.6,426.9l7.5-16.6l.7-4l-7.5,16.6z"/><path d="M509.1,410.3l8.1-19.5l.6-4l-8,19.5z"/><path d="M517.2,390.8l8.7-22.8l.6-4l-8.7,22.8z"/><path d="M525.9,368l9.4-26.6l.5-4l-9.3,26.6z"/><path d="M535.3,341.4l10.2-31l.6-3.9l-10.3,30.9z"/><path d="M545.5,310.4l11.4-36.2l.5-3.8l-11.3,36.1z"/><path d="M556.9,274.2l12.6-42.3l.5-3.7l-12.6,42.2z"/><path d="M569.5,231.9l14.3-49.8l.4-3.6l-14.2,49.7z"/><path d="M583.8,182.1l16.3-59.1l.3-3.4l-16.2,58.9z"/><path d="M600.1,123l19-70.7l.1-3.1l-18.8,70.4z"/><path class="b" d="M273.7,36.6l18.4,67.1l2.3-3l-18.2-66.8z"/><path class="b" d="M292.1,103.7l16.2,57.2l2.1-3.3l-16-56.9z"/><path class="b" d="M308.3,160.9l14.3,49.1l1.9-3.4l-14.1-49z"/><path class="b" d="M322.6,210l12.8,42.4l1.8-3.5l-12.7-42.3z"/><path class="b" d="M335.4,252.4l11.6,36.9l1.6-3.6l-11.4-36.8z"/><path class="b" d="M347,289.3l10.5,32.1l1.5-3.7l-10.4-32z"/><path class="b" d="M357.5,321.4l9.6,27.9l1.5-3.7l-9.6-27.9z"/><path class="b" d="M367.1,349.3l9,24.4l1.3-3.7l-8.8-24.4z"/><path class="b" d="M376.1,373.7l8.3,21.3l1.3-3.8l-8.3-21.2z"/><path class="b" d="M384.4,395l7.8,18.4l1.2-3.7l-7.7-18.5z"/><path class="b" d="M392.2,413.4l7.4,16l1.1-3.8l-7.3-15.9z"/><path class="b" d="M399.6,429.4l7,13.7l1.1-3.9l-7-13.6z"/><path class="b" d="M406.6,443.1l6.7,11.5l1.1-3.8l-6.7-11.6z"/><path class="b" d="M413.3,454.6l6.5,9.6l1-3.8l-6.4-9.6z"/><path class="b" d="M419.8,464.2l6.2,7.8l1-3.9l-6.2-7.7z"/><path class="b" d="M426,472l6.1,6l1-3.9l-6.1-6z"/><path class="b" d="M432.1,478l6,4.3l1-3.9l-6-4.3z"/><path class="b" d="M438.1,482.3l6,2.7l.9-3.9l-5.9-2.7z"/><path class="b" d="M444.1,485l5.9,1l.8-3.9l-5.8-1z"/><path class="b" d="M450,486l5.9-.5l.8-3.9l-5.9,.5z"/><path class="b" d="M455.9,485.5l5.9-2.3l.9-3.9l-6,2.3z"/><path class="b" d="M461.8,483.2l6.1-3.9l.8-3.9l-6,3.9z"/><path class="c" d="M467.9,479.3l6.1-5.7l.8-3.9l-6.1,5.7z"/><path class="c" d="M474,473.6l6.3-7.5l.8-4l-6.3,7.6z"/><path class="c" d="M480.3,466.1l6.6-9.5l.7-4l-6.5,9.5z"/><path d="M486.9,456.6l6.8-11.7l.7-4l-6.8,11.7z"/><path d="M493.7,444.9l7.2-14l.7-4l-7.2,14z"/><path d="M500.9,430.9l7.6-16.6l.6-4l-7.5,16.6z"/><path d="M508.5,414.3l8.1-19.5l.6-4l-8.1,19.5z"/><path d="M516.6,394.8l8.6-22.8l.7-4l-8.7,22.8z"/><path d="M525.2,372l9.5-26.7l.6-3.9l-9.4,26.6z"/><path d="M534.7,345.3l10.3-31l.5-3.9l-10.2,31z"/><path d="M545,314.3l11.4-36.2l.5-3.9l-11.4,36.2z"/><path d="M556.4,278.1l12.7-42.4l.4-3.8l-12.6,42.3z"/><path d="M569.1,235.7l14.3-50l.4-3.6l-14.3,49.8z"/><path d="M583.4,185.7l16.5-59.3l.2-3.4l-16.3,59.1z"/><path d="M599.9,126.4l19-71l.2-3.1l-19,70.7z"/><path class="b" d="M271.1,39.3l18.7,67.4l2.3-3l-18.4-67.1z"/><path class="b" d="M289.8,106.7l16.4,57.4l2.1-3.2l-16.2-57.2z"/><path class="b" d="M306.2,164.1l14.5,49.3l1.9-3.4l-14.3-49.1z"/><path class="b" d="M320.7,213.4l12.9,42.6l1.8-3.6l-12.8-42.4z"/><path class="b" d="M333.6,256l11.7,36.9l1.7-3.6l-11.6-36.9z"/><path class="b" d="M345.3,292.9l10.6,32.1l1.6-3.6l-10.5-32.1z"/><path class="b" d="M355.9,325l9.8,28.1l1.4-3.8l-9.6-27.9z"/><path class="b" d="M365.7,353.1l9,24.4l1.4-3.8l-9-24.4z"/><path class="b" d="M374.7,377.5l8.4,21.3l1.3-3.8l-8.3-21.3z"/><path class="b" d="M383.1,398.8l7.9,18.5l1.2-3.9l-7.8-18.4z"/><path class="b" d="M391,417.3l7.4,15.9l1.2-3.8l-7.4-16z"/><path class="b" d="M398.4,433.2l7,13.7l1.2-3.8l-7-13.7z"/><path class="b" d="M405.4,446.9l6.8,11.6l1.1-3.9l-6.7-11.5z"/><path class="b" d="M412.2,458.5l6.5,9.6l1.1-3.9l-6.5-9.6z"/><path class="b" d="M418.7,468.1l6.3,7.8l1-3.9l-6.2-7.8z"/><path class="b" d="M425,475.9l6.2,6l.9-3.9l-6.1-6z"/><path class="b" d="M431.2,481.9l6,4.3l.9-3.9l-6-4.3z"/><path class="b" d="M437.2,486.2l6,2.7l.9-3.9l-6-2.7z"/><path class="a" d="M443.2,488.9l5.9,1.1l.9-4l-5.9-1z"/><path class="b" d="M449.1,490l5.9-.6l.9-3.9l-5.9,.5z"/><path class="b" d="M455,489.4l6-2.2l.8-4l-5.9,2.3z"/><path class="b" d="M461,487.2l6-3.9l.9-4l-6.1,3.9z"/><path class="c" d="M467,483.3l6.2-5.7l.8-4l-6.1,5.7z"/><path class="c" d="M473.2,477.6l6.4-7.5l.7-4l-6.3,7.5z"/><path class="c" d="M479.6,470.1l6.5-9.5l.8-4l-6.6,9.5z"/><path d="M486.1,460.6l6.9-11.7l.7-4l-6.8,11.7z"/><path d="M493,448.9l7.2-14l.7-4l-7.2,14z"/><path d="M500.2,434.9l7.6-16.6l.7-4l-7.6,16.6z"/><path d="M507.8,418.3l8.1-19.5l.7-4l-8.1,19.5z"/><path d="M515.9,398.8l8.7-22.8l.6-4l-8.6,22.8z"/><path d="M524.6,376l9.5-26.6l.6-4.1l-9.5,26.7z"/><path d="M534.1,349.4l10.3-31.1l.6-4l-10.3,31z"/><path d="M544.4,318.3l11.5-36.2l.5-4l-11.4,36.2z"/><path d="M555.9,282.1l12.7-42.6l.5-3.8l-12.7,42.4z"/><path d="M568.6,239.5l14.5-50.1l.3-3.7l-14.3,50z"/><path d="M583.1,189.4l16.5-59.5l.3-3.5l-16.5,59.3z"/><path d="M599.6,129.9l19.2-71.4l.1-3.1l-19,71z"/><path class="b" d="M268.4,42l19.1,67.8l2.3-3.1l-18.7-67.4z"/><path class="b" d="M287.5,109.8l16.6,57.6l2.1-3.3l-16.4-57.4z"/><path class="b" d="M304.1,167.4l14.6,49.5l2-3.5l-14.5-49.3z"/><path class="b" d="M318.7,216.9l13.1,42.7l1.8-3.6l-12.9-42.6z"/><path class="b" d="M331.8,259.6l11.8,37l1.7-3.7l-11.7-36.9z"/><path class="b" d="M343.6,296.6l10.8,32.2l1.5-3.8l-10.6-32.1z"/><path class="b" d="M354.4,328.8l9.8,28l1.5-3.7l-9.8-28.1z"/><path class="b" d="M364.2,356.8l9.1,24.5l1.4-3.8l-9-24.4z"/><path class="b" d="M373.3,381.3l8.5,21.3l1.3-3.8l-8.4-21.3z"/><path class="b" d="M381.8,402.6l7.9,18.5l1.3-3.8l-7.9-18.5z"/><path class="b" d="M389.7,421.1l7.5,16l1.2-3.9l-7.4-15.9z"/><path class="b" d="M397.2,437.1l7.1,13.7l1.1-3.9l-7-13.7z"/><path class="b" d="M404.3,450.8l6.8,11.6l1.1-3.9l-6.8-11.6z"/><path class="b" d="M411.1,462.4l6.6,9.6l1-3.9l-6.5-9.6z"/><path class="b" d="M417.7,472l6.3,7.8l1-3.9l-6.3-7.8z"/><path class="b" d="M424,479.8l6.2,6l1-3.9l-6.2-6z"/><path class="b" d="M430.2,485.8l6.1,4.4l.9-4l-6-4.3z"/><path class="a" d="M436.3,490.2l5.9,2.7l1-4l-6-2.7z"/><path class="a" d="M442.2,492.9l6,1l.9-3.9l-5.9-1.1z"/><path class="b" d="M448.2,493.9l6-.5l.8-4l-5.9,.6z"/><path class="b" d="M454.2,493.4l5.9-2.2l.9-4l-6,2.2z"/><path class="b" d="M460.1,491.2l6.1-3.9l.8-4l-6,3.9z"/><path class="b" d="M466.2,487.3l6.2-5.7l.8-4l-6.2,5.7z"/><path class="c" d="M472.4,481.6l6.4-7.5l.8-4l-6.4,7.5z"/><path class="c" d="M478.8,474.1l6.6-9.5l.7-4l-6.5,9.5z"/><path d="M485.4,464.6l6.9-11.6l.7-4.1l-6.9,11.7z"/><path d="M492.3,453l7.2-14l.7-4.1l-7.2,14z"/><path d="M499.5,439l7.6-16.6l.7-4.1l-7.6,16.6z"/><path d="M507.1,422.4l8.1-19.5l.7-4.1l-8.1,19.5z"/><path d="M515.2,402.9l8.8-22.8l.6-4.1l-8.7,22.8z"/><path d="M524,380.1l9.5-26.7l.6-4l-9.5,26.6z"/><path d="M533.5,353.4l10.4-31l.5-4.1l-10.3,31.1z"/><path d="M543.9,322.4l11.4-36.4l.6-3.9l-11.5,36.2z"/><path d="M555.3,286l12.9-42.6l.4-3.9l-12.7,42.6z"/><path d="M568.2,243.4l14.5-50.3l.4-3.7l-14.5,50.1z"/><path d="M582.7,193.1l16.6-59.7l.3-3.5l-16.5,59.5z"/><path d="M599.3,133.4l19.3-71.7l.2-3.2l-19.2,71.4z"/><path class="b" d="M265.8,44.9l19.3,68l2.4-3.1l-19.1-67.8z"/><path class="b" d="M285.1,112.9l16.8,57.9l2.2-3.4l-16.6-57.6z"/><path class="b" d="M301.9,170.8l14.8,49.6l2-3.5l-14.6-49.5z"/><path class="b" d="M316.7,220.4l13.3,42.8l1.8-3.6l-13.1-42.7z"/><path class="b" d="M330,263.2l11.9,37.1l1.7-3.7l-11.8-37z"/><path class="b" d="M341.9,300.3l10.9,32.3l1.6-3.8l-10.8-32.2z"/><path class="b" d="M352.8,332.6l9.9,28.1l1.5-3.9l-9.8-28z"/><path class="b" d="M362.7,360.7l9.2,24.5l1.4-3.9l-9.1-24.5z"/><path class="b" d="M371.9,385.2l8.5,21.3l1.4-3.9l-8.5-21.3z"/><path class="b" d="M380.4,406.5l8,18.5l1.3-3.9l-7.9-18.5z"/><path class="b" d="M388.4,425l7.6,16l1.2-3.9l-7.5-16z"/><path class="b" d="M396,441l7.2,13.7l1.1-3.9l-7.1-13.7z"/><path class="b" d="M403.2,454.7l6.8,11.6l1.1-3.9l-6.8-11.6z"/><path class="b" d="M410,466.3l6.6,9.6l1.1-3.9l-6.6-9.6z"/><path class="b" d="M416.6,475.9l6.4,7.8l1-3.9l-6.3-7.8z"/><path class="b" d="M423,483.7l6.2,6.1l1-4l-6.2-6z"/><path class="b" d="M429.2,489.8l6.1,4.3l1-3.9l-6.1-4.4z"/><path class="b" d="M435.3,494.1l6,2.7l.9-3.9l-5.9-2.7z"/><path class="a" d="M441.3,496.8l6,1.1l.9-4l-6-1z"/><path class="b" d="M447.3,497.9l6-.5l.9-4l-6,.5z"/><path class="b" d="M453.3,497.4l6-2.2l.8-4l-5.9,2.2z"/><path class="b" d="M459.3,495.2l6.1-3.9l.8-4l-6.1,3.9z"/><path class="b" d="M465.4,491.3l6.2-5.6l.8-4.1l-6.2,5.7z"/><path class="c" d="M471.6,485.7l6.4-7.5l.8-4.1l-6.4,7.5z"/><path class="c" d="M478,478.2l6.6-9.5l.8-4.1l-6.6,9.5z"/><path d="M484.6,468.7l6.9-11.6l.8-4.1l-6.9,11.6z"/><path d="M491.5,457.1l7.2-14l.8-4.1l-7.2,14z"/><path d="M498.7,443.1l7.7-16.6l.7-4.1l-7.6,16.6z"/><path d="M506.4,426.5l8.2-19.5l.6-4.1l-8.1,19.5z"/><path d="M514.6,407l8.7-22.8l.7-4.1l-8.8,22.8z"/><path d="M523.3,384.2l9.6-26.6l.6-4.2l-9.5,26.7z"/><path d="M532.9,357.6l10.4-31.2l.6-4l-10.4,31z"/><path d="M543.3,326.4l11.5-36.3l.5-4.1l-11.4,36.4z"/><path d="M554.8,290.1l12.9-42.7l.5-4l-12.9,42.6z"/><path d="M567.7,247.4l14.6-50.5l.4-3.8l-14.5,50.3z"/><path d="M582.3,196.9l16.7-59.9l.3-3.6l-16.6,59.7z"/><path d="M599,137l19.5-72l.1-3.3l-19.3,71.7z"/><path class="b" d="M263.1,47.7l19.5,68.3l2.5-3.1l-19.3-68z"/><path class="b" d="M282.6,116l17.1,58.1l2.2-3.3l-16.8-57.9z"/><path class="b" d="M299.7,174.1l15,49.8l2-3.5l-14.8-49.6z"/><path class="b" d="M314.7,223.9l13.4,42.9l1.9-3.6l-13.3-42.8z"/><path class="b" d="M328.1,266.8l12.1,37.2l1.7-3.7l-11.9-37.1z"/><path class="b" d="M340.2,304l11,32.4l1.6-3.8l-10.9-32.3z"/><path class="b" d="M351.2,336.4l10,28.1l1.5-3.8l-9.9-28.1z"/><path class="b" d="M361.2,364.5l9.3,24.6l1.4-3.9l-9.2-24.5z"/><path class="b" d="M370.5,389.1l8.6,21.3l1.3-3.9l-8.5-21.3z"/><path class="b" d="M379.1,410.4l8.1,18.6l1.2-4l-8-18.5z"/><path class="b" d="M387.2,429l7.6,16l1.2-4l-7.6-16z"/><path class="b" d="M394.8,445l7.2,13.7l1.2-4l-7.2-13.7z"/><path class="b" d="M402,458.7l6.9,11.6l1.1-4l-6.8-11.6z"/><path class="b" d="M408.9,470.3l6.6,9.6l1.1-4l-6.6-9.6z"/><path class="b" d="M415.5,479.9l6.4,7.8l1.1-4l-6.4-7.8z"/><path class="b" d="M421.9,487.7l6.3,6.1l1-4l-6.2-6.1z"/><path class="b" d="M428.2,493.8l6.1,4.4l1-4.1l-6.1-4.3z"/><path class="a" d="M434.3,498.2l6.1,2.7l.9-4.1l-6-2.7z"/><path class="a" d="M440.4,500.9l6,1.1l.9-4.1l-6-1.1z"/><path class="b" d="M446.4,502l6-.6l.9-4l-6,.5z"/><path class="b" d="M452.4,501.4l6-2.1l.9-4.1l-6,2.2z"/><path class="b" d="M458.4,499.3l6.2-3.9l.8-4.1l-6.1,3.9z"/><path class="b" d="M464.6,495.4l6.2-5.6l.8-4.1l-6.2,5.6z"/><path class="c" d="M470.8,489.8l6.4-7.5l.8-4.1l-6.4,7.5z"/><path class="c" d="M477.2,482.3l6.6-9.4l.8-4.2l-6.6,9.5z"/><path d="M483.8,472.9l7-11.7l.7-4.1l-6.9,11.6z"/><path d="M490.8,461.2l7.2-13.9l.7-4.2l-7.2,14z"/><path d="M498,447.3l7.7-16.6l.7-4.2l-7.7,16.6z"/><path d="M505.7,430.7l8.2-19.5l.7-4.2l-8.2,19.5z"/><path d="M513.9,411.2l8.8-22.8l.6-4.2l-8.7,22.8z"/><path d="M522.7,388.4l9.5-26.7l.7-4.1l-9.6,26.6z"/><path d="M532.2,361.7l10.5-31.1l.6-4.2l-10.4,31.2z"/><path d="M542.7,330.6l11.6-36.5l.5-4l-11.5,36.3z"/><path d="M554.3,294.1l12.9-42.8l.5-3.9l-12.9,42.7z"/><path d="M567.2,251.3l14.7-50.5l.4-3.9l-14.6,50.5z"/><path d="M581.9,200.8l16.8-60.2l.3-3.6l-16.7,59.9z"/><path d="M598.7,140.6l19.6-72.3l.2-3.3l-19.5,72z"/><path class="b" d="M260.3,50.6l19.9,68.6l2.4-3.2l-19.5-68.3z"/><path class="b" d="M280.2,119.2l17.3,58.4l2.2-3.5l-17.1-58.1z"/><path class="b" d="M297.5,177.6l15.2,49.9l2-3.6l-15-49.8z"/><path class="b" d="M312.7,227.5l13.6,43.1l1.8-3.8l-13.4-42.9z"/><path class="b" d="M326.3,270.6l12.2,37.2l1.7-3.8l-12.1-37.2z"/><path class="b" d="M338.5,307.8l11.1,32.4l1.6-3.8l-11-32.4z"/><path class="b" d="M349.6,340.2l10.1,28.2l1.5-3.9l-10-28.1z"/><path class="b" d="M359.7,368.4l9.4,24.6l1.4-3.9l-9.3-24.6z"/><path class="b" d="M369.1,393l8.7,21.4l1.3-4l-8.6-21.3z"/><path class="b" d="M377.8,414.4l8.1,18.6l1.3-4l-8.1-18.6z"/><path class="b" d="M385.9,433l7.7,16l1.2-4l-7.6-16z"/><path class="b" d="M393.6,449l7.2,13.7l1.2-4l-7.2-13.7z"/><path class="b" d="M400.8,462.7l7,11.6l1.1-4l-6.9-11.6z"/><path class="b" d="M407.8,474.3l6.6,9.7l1.1-4.1l-6.6-9.6z"/><path class="b" d="M414.4,484l6.5,7.8l1-4.1l-6.4-7.8z"/><path class="b" d="M420.9,491.8l6.3,6l1-4l-6.3-6.1z"/><path class="b" d="M427.2,497.8l6.2,4.4l.9-4l-6.1-4.4z"/><path class="a" d="M433.4,502.2l6,2.7l1-4l-6.1-2.7z"/><path class="a" d="M439.4,504.9l6.1,1.2l.9-4.1l-6-1.1z"/><path class="b" d="M445.5,506.1l6-.6l.9-4.1l-6,.6z"/><path class="b" d="M451.5,505.5l6.1-2.1l.8-4.1l-6,2.1z"/><path class="b" d="M457.6,503.4l6.1-3.9l.9-4.1l-6.2,3.9z"/><path class="b" d="M463.7,499.5l6.3-5.6l.8-4.1l-6.2,5.6z"/><path class="c" d="M470,493.9l6.4-7.4l.8-4.2l-6.4,7.5z"/><path class="c" d="M476.4,486.5l6.7-9.5l.7-4.1l-6.6,9.4z"/><path d="M483.1,477l6.9-11.6l.8-4.2l-7,11.7z"/><path d="M490,465.4l7.3-13.9l.7-4.2l-7.2,13.9z"/><path d="M497.3,451.5l7.7-16.6l.7-4.2l-7.7,16.6z"/><path d="M505,434.9l8.2-19.5l.7-4.2l-8.2,19.5z"/><path d="M513.2,415.4l8.8-22.8l.7-4.2l-8.8,22.8z"/><path d="M522,392.6l9.6-26.7l.6-4.2l-9.5,26.7z"/><path d="M531.6,365.9l10.5-31.1l.6-4.2l-10.5,31.1z"/><path d="M542.1,334.8l11.7-36.5l.5-4.2l-11.6,36.5z"/><path d="M553.8,298.3l13-42.9l.4-4.1l-12.9,42.8z"/><path d="M566.8,255.4l14.7-50.7l.4-3.9l-14.7,50.5z"/><path d="M581.5,204.7l17-60.4l.2-3.7l-16.8,60.2z"/><path d="M598.5,144.3l19.7-72.7l.1-3.3l-19.6,72.3z"/><path class="b" d="M257.5,53.5l20.2,69l2.5-3.3l-19.9-68.6z"/><path class="b" d="M277.7,122.5l17.5,58.5l2.3-3.4l-17.3-58.4z"/><path class="b" d="M295.2,181l15.4,50.2l2.1-3.7l-15.2-49.9z"/><path class="b" d="M310.6,231.2l13.8,43.1l1.9-3.7l-13.6-43.1z"/><path class="b" d="M324.4,274.3l12.3,37.4l1.8-3.9l-12.2-37.2z"/><path class="b" d="M336.7,311.7l11.2,32.4l1.7-3.9l-11.1-32.4z"/><path class="b" d="M347.9,344.1l10.3,28.3l1.5-4l-10.1-28.2z"/><path class="b" d="M358.2,372.4l9.4,24.6l1.5-4l-9.4-24.6z"/><path class="b" d="M367.6,397l8.8,21.4l1.4-4l-8.7-21.4z"/><path class="b" d="M376.4,418.4l8.2,18.6l1.3-4l-8.1-18.6z"/><path class="b" d="M384.6,437l7.7,16l1.3-4l-7.7-16z"/><path class="b" d="M392.3,453l7.3,13.8l1.2-4.1l-7.2-13.7z"/><path class="b" d="M399.6,466.8l7,11.6l1.2-4.1l-7-11.6z"/><path class="b" d="M406.6,478.4l6.8,9.6l1-4l-6.6-9.7z"/><path class="b" d="M413.4,488l6.5,7.9l1-4.1l-6.5-7.8z"/><path class="b" d="M419.9,495.9l6.3,6l1-4.1l-6.3-6z"/><path class="b" d="M426.2,501.9l6.2,4.4l1-4.1l-6.2-4.4z"/><path class="a" d="M432.4,506.3l6.1,2.7l.9-4.1l-6-2.7z"/><path class="a" d="M438.5,509l6,1.2l1-4.1l-6.1-1.2z"/><path class="a" d="M444.5,510.2l6.1-.5l.9-4.2l-6,.6z"/><path class="b" d="M450.6,509.7l6.1-2.2l.9-4.1l-6.1,2.1z"/><path class="b" d="M456.7,507.5l6.2-3.8l.8-4.2l-6.1,3.9z"/><path class="b" d="M462.9,503.7l6.2-5.6l.9-4.2l-6.3,5.6z"/><path class="c" d="M469.1,498.1l6.5-7.4l.8-4.2l-6.4,7.4z"/><path class="c" d="M475.6,490.7l6.7-9.5l.8-4.2l-6.7,9.5z"/><path d="M482.3,481.2l6.9-11.5l.8-4.3l-6.9,11.6z"/><path d="M489.2,469.7l7.3-14l.8-4.2l-7.3,13.9z"/><path d="M496.5,455.7l7.8-16.5l.7-4.3l-7.7,16.6z"/><path d="M504.3,439.2l8.2-19.5l.7-4.3l-8.2,19.5z"/><path d="M512.5,419.7l8.9-22.8l.6-4.3l-8.8,22.8z"/><path d="M521.4,396.9l9.6-26.7l.6-4.3l-9.6,26.7z"/><path d="M531,370.2l10.5-31.2l.6-4.2l-10.5,31.1z"/><path d="M541.5,339l11.7-36.5l.6-4.2l-11.7,36.5z"/><path d="M553.2,302.5l13.1-43l.5-4.1l-13,42.9z"/><path d="M566.3,259.5l14.8-50.8l.4-4l-14.7,50.7z"/><path d="M581.1,208.7l17.1-60.6l.3-3.8l-17,60.4z"/><path d="M598.2,148.1l19.8-73.1l.2-3.4l-19.7,72.7z"/><path class="b" d="M254.7,56.5l20.4,69.3l2.6-3.3l-20.2-69z"/><path class="b" d="M275.1,125.8l17.8,58.8l2.3-3.6l-17.5-58.5z"/><path class="b" d="M292.9,184.6l15.6,50.2l2.1-3.6l-15.4-50.2z"/><path class="b" d="M308.5,234.8l13.9,43.3l2-3.8l-13.8-43.1z"/><path class="b" d="M322.4,278.1l12.5,37.5l1.8-3.9l-12.3-37.4z"/><path class="b" d="M334.9,315.6l11.4,32.5l1.6-4l-11.2-32.4z"/><path class="b" d="M346.3,348.1l10.3,28.3l1.6-4l-10.3-28.3z"/><path class="b" d="M356.6,376.4l9.6,24.6l1.4-4l-9.4-24.6z"/><path class="b" d="M366.2,401l8.8,21.5l1.4-4.1l-8.8-21.4z"/><path class="b" d="M375,422.5l8.3,18.6l1.3-4.1l-8.2-18.6z"/><path class="b" d="M383.3,441.1l7.8,16l1.2-4.1l-7.7-16z"/><path class="b" d="M391.1,457.1l7.3,13.8l1.2-4.1l-7.3-13.8z"/><path class="b" d="M398.4,470.9l7.1,11.6l1.1-4.1l-7-11.6z"/><path class="b" d="M405.5,482.5l6.8,9.6l1.1-4.1l-6.8-9.6z"/><path class="b" d="M412.3,492.1l6.5,7.9l1.1-4.1l-6.5-7.9z"/><path class="b" d="M418.8,500l6.4,6l1-4.1l-6.3-6z"/><path class="b" d="M425.2,506l6.2,4.4l1-4.1l-6.2-4.4z"/><path class="a" d="M431.4,510.4l6.1,2.8l1-4.2l-6.1-2.7z"/><path class="a" d="M437.5,513.2l6.1,1.1l.9-4.1l-6-1.2z"/><path class="a" d="M443.6,514.3l6.1-.5l.9-4.1l-6.1,.5z"/><path class="b" d="M449.7,513.8l6.1-2.1l.9-4.2l-6.1,2.2z"/><path class="b" d="M455.8,511.7l6.2-3.8l.9-4.2l-6.2,3.8z"/><path class="b" d="M462,507.9l6.3-5.6l.8-4.2l-6.2,5.6z"/><path class="c" d="M468.3,502.3l6.5-7.4l.8-4.2l-6.5,7.4z"/><path class="c" d="M474.8,494.9l6.7-9.4l.8-4.3l-6.7,9.5z"/><path d="M481.5,485.5l7-11.5l.7-4.3l-6.9,11.5z"/><path d="M488.5,474l7.3-14l.7-4.3l-7.3,14z"/><path d="M495.8,460l7.7-16.5l.8-4.3l-7.8,16.5z"/><path d="M503.5,443.5l8.3-19.5l.7-4.3l-8.2,19.5z"/><path d="M511.8,424l8.9-22.8l.7-4.3l-8.9,22.8z"/><path d="M520.7,401.2l9.6-26.7l.7-4.3l-9.6,26.7z"/><path d="M530.3,374.5l10.6-31.2l.6-4.3l-10.5,31.2z"/><path d="M540.9,343.3l11.8-36.6l.5-4.2l-11.7,36.5z"/><path d="M552.7,306.7l13.1-43l.5-4.2l-13.1,43z"/><path d="M565.8,263.7l14.9-51l.4-4l-14.8,50.8z"/><path d="M580.7,212.7l17.2-60.8l.3-3.8l-17.1,60.6z"/><path d="M597.9,151.9l20-73.4l.1-3.5l-19.8,73.1z"/><path class="b" d="M251.8,59.5l20.8,69.6l2.5-3.3l-20.4-69.3z"/><path class="b" d="M272.6,129.1l18,59l2.3-3.5l-17.8-58.8z"/><path class="b" d="M290.6,188.1l15.8,50.5l2.1-3.8l-15.6-50.2z"/><path class="b" d="M306.4,238.6l14.1,43.4l1.9-3.9l-13.9-43.3z"/><path class="b" d="M320.5,282l12.6,37.5l1.8-3.9l-12.5-37.5z"/><path class="b" d="M333.1,319.5l11.5,32.6l1.7-4l-11.4-32.5z"/><path class="b" d="M344.6,352.1l10.4,28.3l1.6-4l-10.3-28.3z"/><path class="b" d="M355,380.4l9.7,24.7l1.5-4.1l-9.6-24.6z"/><path class="b" d="M364.7,405.1l8.9,21.5l1.4-4.1l-8.8-21.5z"/><path class="b" d="M373.6,426.6l8.4,18.6l1.3-4.1l-8.3-18.6z"/><path class="b" d="M382,445.2l7.8,16l1.3-4.1l-7.8-16z"/><path class="b" d="M389.8,461.2l7.4,13.8l1.2-4.1l-7.3-13.8z"/><path class="b" d="M397.2,475l7.1,11.6l1.2-4.1l-7.1-11.6z"/><path class="b" d="M404.3,486.6l6.8,9.7l1.2-4.2l-6.8-9.6z"/><path class="b" d="M411.1,496.3l6.6,7.8l1.1-4.1l-6.5-7.9z"/><path class="b" d="M417.7,504.1l6.4,6.1l1.1-4.2l-6.4-6z"/><path class="a" d="M424.1,510.2l6.3,4.4l1-4.2l-6.2-4.4z"/><path class="a" d="M430.4,514.6l6.1,2.8l1-4.2l-6.1-2.8z"/><path class="a" d="M436.5,517.4l6.2,1.1l.9-4.2l-6.1-1.1z"/><path class="a" d="M442.7,518.5l6.1-.4l.9-4.3l-6.1,.5z"/><path class="b" d="M448.8,518.1l6.1-2.1l.9-4.3l-6.1,2.1z"/><path class="b" d="M454.9,516l6.2-3.8l.9-4.3l-6.2,3.8z"/><path class="b" d="M461.1,512.2l6.4-5.6l.8-4.3l-6.3,5.6z"/><path class="c" d="M467.5,506.6l6.5-7.4l.8-4.3l-6.5,7.4z"/><path class="c" d="M474,499.2l6.7-9.4l.8-4.3l-6.7,9.4z"/><path d="M480.7,489.8l7-11.5l.8-4.3l-7,11.5z"/><path d="M487.7,478.3l7.3-13.9l.8-4.4l-7.3,14z"/><path d="M495,464.4l7.8-16.5l.7-4.4l-7.7,16.5z"/><path d="M502.8,447.9l8.3-19.5l.7-4.4l-8.3,19.5z"/><path d="M511.1,428.4l8.9-22.8l.7-4.4l-8.9,22.8z"/><path d="M520,405.6l9.7-26.7l.6-4.4l-9.6,26.7z"/><path d="M529.7,378.9l10.6-31.3l.6-4.3l-10.6,31.2z"/><path d="M540.3,347.6l11.8-36.6l.6-4.3l-11.8,36.6z"/><path d="M552.1,311l13.2-43.1l.5-4.2l-13.1,43z"/><path d="M565.3,267.9l15-51.1l.4-4.1l-14.9,51z"/><path d="M580.3,216.8l17.3-61.1l.3-3.8l-17.2,60.8z"/><path d="M597.6,155.7l20.1-73.7l.2-3.5l-20,73.4z"/><path class="b" d="M248.9,62.6l21.1,69.9l2.6-3.4l-20.8-69.6z"/><path class="b" d="M270,132.5l18.2,59.3l2.4-3.7l-18-59z"/><path class="b" d="M288.2,191.8l16.1,50.6l2.1-3.8l-15.8-50.5z"/><path class="b" d="M304.3,242.4l14.2,43.5l2-3.9l-14.1-43.4z"/><path class="b" d="M318.5,285.9l12.8,37.6l1.8-4l-12.6-37.5z"/><path class="b" d="M331.3,323.5l11.6,32.6l1.7-4l-11.5-32.6z"/><path class="b" d="M342.9,356.1l10.6,28.4l1.5-4.1l-10.4-28.3z"/><path class="b" d="M353.5,384.5l9.7,24.7l1.5-4.1l-9.7-24.7z"/><path class="b" d="M363.2,409.2l9,21.5l1.4-4.1l-8.9-21.5z"/><path class="b" d="M372.2,430.7l8.4,18.6l1.4-4.1l-8.4-18.6z"/><path class="b" d="M380.6,449.3l7.9,16.1l1.3-4.2l-7.8-16z"/><path class="b" d="M388.5,465.4l7.5,13.8l1.2-4.2l-7.4-13.8z"/><path class="b" d="M396,479.2l7.2,11.6l1.1-4.2l-7.1-11.6z"/><path class="b" d="M403.2,490.8l6.8,9.7l1.1-4.2l-6.8-9.7z"/><path class="b" d="M410,500.5l6.6,7.8l1.1-4.2l-6.6-7.8z"/><path class="b" d="M416.6,508.3l6.5,6.1l1-4.2l-6.4-6.1z"/><path class="a" d="M423.1,514.4l6.3,4.4l1-4.2l-6.3-4.4z"/><path class="a" d="M429.4,518.8l6.2,2.8l.9-4.2l-6.1-2.8z"/><path class="a" d="M435.6,521.6l6.1,1.2l1-4.3l-6.2-1.1z"/><path class="a" d="M441.7,522.8l6.1-.5l1-4.2l-6.1,.4z"/><path class="b" d="M447.8,522.3l6.2-2.1l.9-4.2l-6.1,2.1z"/><path class="b" d="M454,520.2l6.2-3.7l.9-4.3l-6.2,3.8z"/><path class="b" d="M460.2,516.5l6.4-5.6l.9-4.3l-6.4,5.6z"/><path class="c" d="M466.6,510.9l6.5-7.4l.9-4.3l-6.5,7.4z"/><path class="c" d="M473.1,503.5l6.8-9.3l.8-4.4l-6.7,9.4z"/><path class="c" d="M479.9,494.2l7-11.5l.8-4.4l-7,11.5z"/><path d="M486.9,482.7l7.3-13.9l.8-4.4l-7.3,13.9z"/><path d="M494.2,468.8l7.8-16.5l.8-4.4l-7.8,16.5z"/><path d="M502,452.3l8.4-19.5l.7-4.4l-8.3,19.5z"/><path d="M510.4,432.8l8.9-22.8l.7-4.4l-8.9,22.8z"/><path d="M519.3,410l9.7-26.7l.7-4.4l-9.7,26.7z"/><path d="M529,383.3l10.7-31.2l.6-4.5l-10.6,31.3z"/><path d="M539.7,352.1l11.8-36.7l.6-4.4l-11.8,36.6z"/><path d="M551.5,315.4l13.3-43.3l.5-4.2l-13.2,43.1z"/><path d="M564.8,272.1l15.1-51.2l.4-4.1l-15,51.1z"/><path d="M579.9,220.9l17.4-61.2l.3-4l-17.3,61.1z"/><path d="M597.3,159.7l20.3-74.1l.1-3.6l-20.1,73.7z"/><path class="b" d="M245.9,65.7l21.4,70.2l2.7-3.4l-21.1-69.9z"/><path class="b" d="M267.3,135.9l18.6,59.5l2.3-3.6l-18.2-59.3z"/><path class="b" d="M285.9,195.4l16.2,50.8l2.2-3.8l-16.1-50.6z"/><path class="b" d="M302.1,246.2l14.4,43.6l2-3.9l-14.2-43.5z"/><path class="b" d="M316.5,289.8l13,37.7l1.8-4l-12.8-37.6z"/><path class="b" d="M329.5,327.5l11.7,32.7l1.7-4.1l-11.6-32.6z"/><path class="b" d="M341.2,360.2l10.7,28.4l1.6-4.1l-10.6-28.4z"/><path class="b" d="M351.9,388.6l9.8,24.8l1.5-4.2l-9.7-24.7z"/><path class="b" d="M361.7,413.4l9.1,21.5l1.4-4.2l-9-21.5z"/><path class="b" d="M370.8,434.9l8.5,18.6l1.3-4.2l-8.4-18.6z"/><path class="b" d="M379.3,453.5l7.9,16.1l1.3-4.2l-7.9-16.1z"/><path class="b" d="M387.2,469.6l7.6,13.8l1.2-4.2l-7.5-13.8z"/><path class="b" d="M394.8,483.4l7.2,11.6l1.2-4.2l-7.2-11.6z"/><path class="b" d="M402,495l6.9,9.7l1.1-4.2l-6.8-9.7z"/><path class="b" d="M408.9,504.7l6.6,7.9l1.1-4.3l-6.6-7.8z"/><path class="b" d="M415.5,512.6l6.5,6.1l1.1-4.3l-6.5-6.1z"/><path class="a" d="M422,518.7l6.3,4.4l1.1-4.3l-6.3-4.4z"/><path class="a" d="M428.3,523.1l6.3,2.8l1-4.3l-6.2-2.8z"/><path class="a" d="M434.6,525.9l6.1,1.2l1-4.3l-6.1-1.2z"/><path class="a" d="M440.7,527.1l6.2-.5l.9-4.3l-6.1,.5z"/><path class="b" d="M446.9,526.6l6.2-2.1l.9-4.3l-6.2,2.1z"/><path class="b" d="M453.1,524.5l6.3-3.7l.8-4.3l-6.2,3.7z"/><path class="b" d="M459.4,520.8l6.3-5.5l.9-4.4l-6.4,5.6z"/><path class="c" d="M465.7,515.3l6.6-7.4l.8-4.4l-6.5,7.4z"/><path class="c" d="M472.3,507.9l6.7-9.3l.9-4.4l-6.8,9.3z"/><path d="M479,498.6l7.1-11.5l.8-4.4l-7,11.5z"/><path d="M486.1,487.1l7.4-13.9l.7-4.4l-7.3,13.9z"/><path d="M493.5,473.2l7.8-16.4l.7-4.5l-7.8,16.5z"/><path d="M501.3,456.8l8.3-19.5l.8-4.5l-8.4,19.5z"/><path d="M509.6,437.3l9-22.8l.7-4.5l-8.9,22.8z"/><path d="M518.6,414.5l9.8-26.7l.6-4.5l-9.7,26.7z"/><path d="M528.4,387.8l10.7-31.3l.6-4.4l-10.7,31.2z"/><path d="M539.1,356.5l11.9-36.7l.5-4.4l-11.8,36.7z"/><path d="M551,319.8l13.3-43.3l.5-4.4l-13.3,43.3z"/><path d="M564.3,276.5l15.2-51.4l.4-4.2l-15.1,51.2z"/><path d="M579.5,225.1l17.4-61.5l.4-3.9l-17.4,61.2z"/><path d="M596.9,163.6l20.5-74.3l.2-3.7l-20.3,74.1z"/><path class="b" d="M242.9,68.8l21.7,70.6l2.7-3.5l-21.4-70.2z"/><path class="b" d="M264.6,139.4l18.8,59.7l2.5-3.7l-18.6-59.5z"/><path class="b" d="M283.4,199.1l16.5,51l2.2-3.9l-16.2-50.8z"/><path class="b" d="M299.9,250.1l14.6,43.7l2-4l-14.4-43.6z"/><path class="b" d="M314.5,293.8l13.1,37.8l1.9-4.1l-13-37.7z"/><path class="b" d="M327.6,331.6l11.8,32.7l1.8-4.1l-11.7-32.7z"/><path class="b" d="M339.4,364.3l10.8,28.5l1.7-4.2l-10.7-28.4z"/><path class="b" d="M350.2,392.8l9.9,24.8l1.6-4.2l-9.8-24.8z"/><path class="b" d="M360.1,417.6l9.2,21.5l1.5-4.2l-9.1-21.5z"/><path class="b" d="M369.3,439.1l8.6,18.7l1.4-4.3l-8.5-18.6z"/><path class="b" d="M377.9,457.8l8,16.1l1.3-4.3l-7.9-16.1z"/><path class="b" d="M385.9,473.9l7.6,13.7l1.3-4.2l-7.6-13.8z"/><path class="b" d="M393.5,487.6l7.3,11.7l1.2-4.3l-7.2-11.6z"/><path class="b" d="M400.8,499.3l6.9,9.7l1.2-4.3l-6.9-9.7z"/><path class="b" d="M407.7,509l6.7,7.9l1.1-4.3l-6.6-7.9z"/><path class="b" d="M414.4,516.9l6.5,6.1l1.1-4.3l-6.5-6.1z"/><path class="a" d="M420.9,523l6.4,4.4l1-4.3l-6.3-4.4z"/><path class="a" d="M427.3,527.4l6.3,2.8l1-4.3l-6.3-2.8z"/><path class="a" d="M433.6,530.2l6.2,1.2l.9-4.3l-6.1-1.2z"/><path class="a" d="M439.8,531.4l6.2-.4l.9-4.4l-6.2,.5z"/><path class="b" d="M446,531l6.2-2.1l.9-4.4l-6.2,2.1z"/><path class="b" d="M452.2,528.9l6.3-3.7l.9-4.4l-6.3,3.7z"/><path class="b" d="M458.5,525.2l6.4-5.5l.8-4.4l-6.3,5.5z"/><path class="c" d="M464.9,519.7l6.5-7.4l.9-4.4l-6.6,7.4z"/><path class="c" d="M471.4,512.3l6.8-9.3l.8-4.4l-6.7,9.3z"/><path class="c" d="M478.2,503l7.1-11.5l.8-4.4l-7.1,11.5z"/><path d="M485.3,491.5l7.4-13.8l.8-4.5l-7.4,13.9z"/><path d="M492.7,477.7l7.8-16.4l.8-4.5l-7.8,16.4z"/><path d="M500.5,461.3l8.4-19.5l.7-4.5l-8.3,19.5z"/><path d="M508.9,441.8l9-22.8l.7-4.5l-9,22.8z"/><path d="M517.9,419l9.8-26.7l.7-4.5l-9.8,26.7z"/><path d="M527.7,392.3l10.8-31.3l.6-4.5l-10.7,31.3z"/><path d="M538.5,361l11.9-36.7l.6-4.5l-11.9,36.7z"/><path d="M550.4,324.3l13.4-43.4l.5-4.4l-13.3,43.3z"/><path d="M563.8,280.9l15.2-51.5l.5-4.3l-15.2,51.4z"/><path d="M579,229.4l17.6-61.7l.3-4.1l-17.4,61.5z"/><path d="M596.6,167.7l20.6-74.7l.2-3.7l-20.5,74.3z"/><path d="M617.2,93l24.7-91.8l-.1-3.2l-24.4,91.3z"/><path class="b" d="M239.9,72l22,71l2.7-3.6l-21.7-70.6z"/><path class="b" d="M261.9,143l19.1,59.9l2.4-3.8l-18.8-59.7z"/><path class="b" d="M281,202.9l16.7,51.1l2.2-3.9l-16.5-51z"/><path class="b" d="M297.7,254l14.8,43.9l2-4.1l-14.6-43.7z"/><path class="b" d="M312.5,297.9l13.2,37.8l1.9-4.1l-13.1-37.8z"/><path class="b" d="M325.7,335.7l12,32.8l1.7-4.2l-11.8-32.7z"/><path class="b" d="M337.7,368.5l10.9,28.5l1.6-4.2l-10.8-28.5z"/><path class="b" d="M348.6,397l10,24.8l1.5-4.2l-9.9-24.8z"/><path class="b" d="M358.6,421.8l9.3,21.6l1.4-4.3l-9.2-21.5z"/><path class="b" d="M367.9,443.4l8.6,18.6l1.4-4.2l-8.6-18.7z"/><path class="b" d="M376.5,462l8.1,16.2l1.3-4.3l-8-16.1z"/><path class="b" d="M384.6,478.2l7.7,13.7l1.2-4.3l-7.6-13.7z"/><path class="b" d="M392.3,491.9l7.3,11.7l1.2-4.3l-7.3-11.7z"/><path class="b" d="M399.6,503.6l7,9.7l1.1-4.3l-6.9-9.7z"/><path class="b" d="M406.6,513.3l6.7,7.9l1.1-4.3l-6.7-7.9z"/><path class="b" d="M413.3,521.2l6.6,6.1l1-4.3l-6.5-6.1z"/><path class="a" d="M419.9,527.3l6.4,4.4l1-4.3l-6.4-4.4z"/><path class="a" d="M426.3,531.7l6.3,2.9l1-4.4l-6.3-2.8z"/><path class="a" d="M432.6,534.6l6.2,1.2l1-4.4l-6.2-1.2z"/><path class="a" d="M438.8,535.8l6.2-.5l1-4.3l-6.2,.4z"/><path class="b" d="M445,535.3l6.2-2l1-4.4l-6.2,2.1z"/><path class="b" d="M451.2,533.3l6.3-3.7l1-4.4l-6.3,3.7z"/><path class="b" d="M457.5,529.6l6.5-5.5l.9-4.4l-6.4,5.5z"/><path class="c" d="M464,524.1l6.6-7.3l.8-4.5l-6.5,7.4z"/><path class="c" d="M470.6,516.8l6.8-9.3l.8-4.5l-6.8,9.3z"/><path class="c" d="M477.4,507.5l7-11.4l.9-4.6l-7.1,11.5z"/><path d="M484.4,496.1l7.5-13.8l.8-4.6l-7.4,13.8z"/><path d="M491.9,482.3l7.9-16.5l.7-4.5l-7.8,16.4z"/><path d="M499.8,465.8l8.4-19.4l.7-4.6l-8.4,19.5z"/><path d="M508.2,446.4l9-22.8l.7-4.6l-9,22.8z"/><path d="M517.2,423.6l9.8-26.7l.7-4.6l-9.8,26.7z"/><path d="M527,396.9l10.8-31.3l.7-4.6l-10.8,31.3z"/><path d="M537.8,365.6l12-36.8l.6-4.5l-11.9,36.7z"/><path d="M549.8,328.8l13.5-43.5l.5-4.4l-13.4,43.4z"/><path d="M563.3,285.3l15.3-51.6l.4-4.3l-15.2,51.5z"/><path d="M578.6,233.7l17.7-61.9l.3-4.1l-17.6,61.7z"/><path d="M596.3,171.8l20.8-75l.1-3.8l-20.6,74.7z"/><path d="M617.1,96.8l24.8-92.4l0-3.2l-24.7,91.8z"/><path class="b" d="M236.8,75.3l22.4,71.3l2.7-3.6l-22-71z"/><path class="b" d="M259.2,146.6l19.3,60.1l2.5-3.8l-19.1-59.9z"/><path class="b" d="M278.5,206.7l16.9,51.3l2.3-4l-16.7-51.1z"/><path class="b" d="M295.4,258l15,44l2.1-4.1l-14.8-43.9z"/><path class="b" d="M310.4,302l13.4,37.9l1.9-4.2l-13.2-37.8z"/><path class="b" d="M323.8,339.9l12.1,32.9l1.8-4.3l-12-32.8z"/><path class="b" d="M335.9,372.8l11,28.5l1.7-4.3l-10.9-28.5z"/><path class="b" d="M346.9,401.3l10.1,24.8l1.6-4.3l-10-24.8z"/><path class="b" d="M357,426.1l9.4,21.6l1.5-4.3l-9.3-21.6z"/><path class="b" d="M366.4,447.7l8.7,18.7l1.4-4.4l-8.6-18.6z"/><path class="b" d="M375.1,466.4l8.2,16.1l1.3-4.3l-8.1-16.2z"/><path class="b" d="M383.3,482.5l7.7,13.8l1.3-4.4l-7.7-13.7z"/><path class="b" d="M391,496.3l7.4,11.7l1.2-4.4l-7.3-11.7z"/><path class="b" d="M398.4,508l7,9.7l1.2-4.4l-7-9.7z"/><path class="b" d="M405.4,517.7l6.8,7.8l1.1-4.3l-6.7-7.9z"/><path class="b" d="M412.2,525.5l6.6,6.2l1.1-4.4l-6.6-6.1z"/><path class="a" d="M418.8,531.7l6.4,4.4l1.1-4.4l-6.4-4.4z"/><path class="a" d="M425.2,536.1l6.3,2.9l1.1-4.4l-6.3-2.9z"/><path class="a" d="M431.5,539l6.3,1.2l1-4.4l-6.2-1.2z"/><path class="a" d="M437.8,540.2l6.2-.4l1-4.5l-6.2,.5z"/><path class="b" d="M444,539.8l6.3-2l.9-4.5l-6.2,2z"/><path class="b" d="M450.3,537.8l6.3-3.7l.9-4.5l-6.3,3.7z"/><path class="b" d="M456.6,534.1l6.5-5.5l.9-4.5l-6.5,5.5z"/><path class="c" d="M463.1,528.6l6.6-7.3l.9-4.5l-6.6,7.3z"/><path class="c" d="M469.7,521.3l6.8-9.3l.9-4.5l-6.8,9.3z"/><path class="c" d="M476.5,512l7.1-11.4l.8-4.5l-7,11.4z"/><path d="M483.6,500.6l7.5-13.8l.8-4.5l-7.5,13.8z"/><path d="M491.1,486.8l7.9-16.4l.8-4.6l-7.9,16.5z"/><path d="M499,470.4l8.4-19.3l.8-4.7l-8.4,19.4z"/><path d="M507.4,451.1l9.1-22.8l.7-4.7l-9,22.8z"/><path d="M516.5,428.3l9.8-26.7l.7-4.7l-9.8,26.7z"/><path d="M526.3,401.6l10.9-31.4l.6-4.6l-10.8,31.3z"/><path d="M537.2,370.2l12-36.8l.6-4.6l-12,36.8z"/><path d="M549.2,333.4l13.6-43.5l.5-4.6l-13.5,43.5z"/><path d="M562.8,289.9l15.4-51.8l.4-4.4l-15.3,51.6z"/><path d="M578.2,238.1l17.8-62.1l.3-4.2l-17.7,61.9z"/><path d="M596,176l20.9-75.4l.2-3.8l-20.8,75z"/><path d="M616.9,100.6l25.1-92.9l-.1-3.3l-24.8,92.4z"/><path class="b" d="M233.6,78.6l22.8,71.6l2.8-3.6l-22.4-71.3z"/><path class="b" d="M256.4,150.2l19.6,60.4l2.5-3.9l-19.3-60.1z"/><path class="b" d="M276,210.6l17.1,51.4l2.3-4l-16.9-51.3z"/><path class="b" d="M293.1,262l15.2,44.1l2.1-4.1l-15-44z"/><path class="b" d="M308.3,306.1l13.6,38l1.9-4.2l-13.4-37.9z"/><path class="b" d="M321.9,344.1l12.2,33l1.8-4.3l-12.1-32.9z"/><path class="b" d="M334.1,377.1l11.1,28.5l1.7-4.3l-11-28.5z"/><path class="b" d="M345.2,405.6l10.3,24.9l1.5-4.4l-10.1-24.8z"/><path class="b" d="M355.5,430.5l9.4,21.6l1.5-4.4l-9.4-21.6z"/><path class="b" d="M364.9,452.1l8.8,18.7l1.4-4.4l-8.7-18.7z"/><path class="b" d="M373.7,470.8l8.2,16.1l1.4-4.4l-8.2-16.1z"/><path class="b" d="M381.9,486.9l7.8,13.8l1.3-4.4l-7.7-13.8z"/><path class="b" d="M389.7,500.7l7.4,11.7l1.3-4.4l-7.4-11.7z"/><path class="b" d="M397.1,512.4l7.1,9.7l1.2-4.4l-7-9.7z"/><path class="b" d="M404.2,522.1l6.9,7.9l1.1-4.5l-6.8-7.8z"/><path class="a" d="M411.1,530l6.6,6.1l1.1-4.4l-6.6-6.2z"/><path class="a" d="M417.7,536.1l6.4,4.5l1.1-4.5l-6.4-4.4z"/><path class="a" d="M424.1,540.6l6.4,2.8l1-4.4l-6.3-2.9z"/><path class="a" d="M430.5,543.4l6.3,1.2l1-4.4l-6.3-1.2z"/><path class="a" d="M436.8,544.6l6.3-.3l.9-4.5l-6.2,.4z"/><path class="b" d="M443.1,544.3l6.3-2.1l.9-4.4l-6.3,2z"/><path class="b" d="M449.4,542.2l6.3-3.6l.9-4.5l-6.3,3.7z"/><path class="b" d="M455.7,538.6l6.5-5.5l.9-4.5l-6.5,5.5z"/><path class="c" d="M462.2,533.1l6.6-7.2l.9-4.6l-6.6,7.3z"/><path class="c" d="M468.8,525.9l6.9-9.3l.8-4.6l-6.8,9.3z"/><path class="c" d="M475.7,516.6l7.1-11.4l.8-4.6l-7.1,11.4z"/><path d="M482.8,505.2l7.5-13.7l.8-4.7l-7.5,13.8z"/><path d="M490.3,491.5l7.9-16.4l.8-4.7l-7.9,16.4z"/><path d="M498.2,475.1l8.4-19.4l.8-4.6l-8.4,19.3z"/><path d="M506.6,455.7l9.1-22.7l.8-4.7l-9.1,22.8z"/><path d="M515.7,433l9.9-26.7l.7-4.7l-9.8,26.7z"/><path d="M525.6,406.3l10.9-31.4l.7-4.7l-10.9,31.4z"/><path d="M536.5,374.9l12.1-36.9l.6-4.6l-12,36.8z"/><path d="M548.6,338l13.6-43.6l.6-4.5l-13.6,43.5z"/><path d="M562.2,294.4l15.5-51.8l.5-4.5l-15.4,51.8z"/><path d="M577.7,242.6l17.9-62.4l.4-4.2l-17.8,62.1z"/><path d="M595.6,180.2l21.1-75.7l.2-3.9l-20.9,75.4z"/><path d="M616.7,104.5l25.3-93.4l0-3.4l-25.1,92.9z"/><path class="b" d="M230.4,82l23.1,71.9l2.9-3.7l-22.8-71.6z"/><path class="b" d="M253.5,153.9l19.9,60.6l2.6-3.9l-19.6-60.4z"/><path class="b" d="M273.4,214.5l17.4,51.6l2.3-4.1l-17.1-51.4z"/><path class="b" d="M290.8,266.1l15.4,44.2l2.1-4.2l-15.2-44.1z"/><path class="b" d="M306.2,310.3l13.7,38.1l2-4.3l-13.6-38z"/><path class="b" d="M319.9,348.4l12.4,33l1.8-4.3l-12.2-33z"/><path class="b" d="M332.3,381.4l11.2,28.6l1.7-4.4l-11.1-28.5z"/><path class="b" d="M343.5,410l10.4,24.9l1.6-4.4l-10.3-24.9z"/><path class="b" d="M353.9,434.9l9.5,21.6l1.5-4.4l-9.4-21.6z"/><path class="b" d="M363.4,456.5l8.9,18.7l1.4-4.4l-8.8-18.7z"/><path class="b" d="M372.3,475.2l8.3,16.1l1.3-4.4l-8.2-16.1z"/><path class="b" d="M380.6,491.3l7.8,13.8l1.3-4.4l-7.8-13.8z"/><path class="b" d="M388.4,505.1l7.5,11.7l1.2-4.4l-7.4-11.7z"/><path class="b" d="M395.9,516.8l7.1,9.7l1.2-4.4l-7.1-9.7z"/><path class="b" d="M403,526.5l6.9,7.9l1.2-4.4l-6.9-7.9z"/><path class="a" d="M409.9,534.4l6.7,6.2l1.1-4.5l-6.6-6.1z"/><path class="a" d="M416.6,540.6l6.5,4.4l1-4.4l-6.4-4.5z"/><path class="a" d="M423.1,545l6.4,2.9l1-4.5l-6.4-2.8z"/><path class="a" d="M429.5,547.9l6.3,1.2l1-4.5l-6.3-1.2z"/><path class="a" d="M435.8,549.1l6.3-.3l1-4.5l-6.3,.3z"/><path class="a" d="M442.1,548.8l6.3-2l1-4.6l-6.3,2.1z"/><path class="b" d="M448.4,546.8l6.4-3.7l.9-4.5l-6.3,3.6z"/><path class="b" d="M454.8,543.1l6.5-5.4l.9-4.6l-6.5,5.5z"/><path class="b" d="M461.3,537.7l6.6-7.2l.9-4.6l-6.6,7.2z"/><path class="c" d="M467.9,530.5l6.9-9.2l.9-4.7l-6.9,9.3z"/><path class="c" d="M474.8,521.3l7.1-11.4l.9-4.7l-7.1,11.4z"/><path d="M481.9,509.9l7.5-13.7l.9-4.7l-7.5,13.7z"/><path d="M489.4,496.2l8-16.4l.8-4.7l-7.9,16.4z"/><path d="M497.4,479.8l8.5-19.3l.7-4.8l-8.4,19.4z"/><path d="M505.9,460.5l9.1-22.8l.7-4.7l-9.1,22.7z"/><path d="M515,437.7l9.9-26.7l.7-4.7l-9.9,26.7z"/><path d="M524.9,411l11-31.3l.6-4.8l-10.9,31.4z"/><path d="M535.9,379.7l12.1-36.9l.6-4.8l-12.1,36.9z"/><path d="M548,342.8l13.7-43.7l.5-4.7l-13.6,43.6z"/><path d="M561.7,299.1l15.6-52l.4-4.5l-15.5,51.8z"/><path d="M577.3,247.1l18-62.5l.3-4.4l-17.9,62.4z"/><path d="M595.3,184.6l21.2-76.1l.2-4l-21.1,75.7z"/><path d="M616.5,108.5l25.6-94l-.1-3.4l-25.3,93.4z"/><path class="a" d="M227.2,85.4l23.4,72.3l2.9-3.8l-23.1-71.9z"/><path class="b" d="M250.6,157.7l20.2,60.8l2.6-4l-19.9-60.6z"/><path class="b" d="M270.8,218.5l17.7,51.8l2.3-4.2l-17.4-51.6z"/><path class="b" d="M288.5,270.3l15.5,44.3l2.2-4.3l-15.4-44.2z"/><path class="b" d="M304,314.6l13.9,38.2l2-4.4l-13.7-38.1z"/><path class="b" d="M317.9,352.8l12.6,33l1.8-4.4l-12.4-33z"/><path class="b" d="M330.5,385.8l11.3,28.6l1.7-4.4l-11.2-28.6z"/><path class="b" d="M341.8,414.4l10.4,24.9l1.7-4.4l-10.4-24.9z"/><path class="b" d="M352.2,439.3l9.7,21.6l1.5-4.4l-9.5-21.6z"/><path class="b" d="M361.9,460.9l8.9,18.8l1.5-4.5l-8.9-18.7z"/><path class="b" d="M370.8,479.7l8.4,16.1l1.4-4.5l-8.3-16.1z"/><path class="b" d="M379.2,495.8l7.9,13.8l1.3-4.5l-7.8-13.8z"/><path class="b" d="M387.1,509.6l7.5,11.7l1.3-4.5l-7.5-11.7z"/><path class="b" d="M394.6,521.3l7.2,9.7l1.2-4.5l-7.1-9.7z"/><path class="b" d="M401.8,531l6.9,7.9l1.2-4.5l-6.9-7.9z"/><path class="a" d="M408.7,538.9l6.7,6.2l1.2-4.5l-6.7-6.2z"/><path class="a" d="M415.4,545.1l6.6,4.5l1.1-4.6l-6.5-4.4z"/><path class="a" d="M422,549.6l6.4,2.8l1.1-4.5l-6.4-2.9z"/><path class="a" d="M428.4,552.4l6.4,1.3l1-4.6l-6.3-1.2z"/><path class="a" d="M434.8,553.7l6.3-.4l1-4.5l-6.3,.3z"/><path class="a" d="M441.1,553.3l6.3-1.9l1-4.6l-6.3,2z"/><path class="b" d="M447.4,551.4l6.4-3.7l1-4.6l-6.4,3.7z"/><path class="b" d="M453.8,547.7l6.5-5.3l1-4.7l-6.5,5.4z"/><path class="b" d="M460.3,542.4l6.7-7.3l.9-4.6l-6.6,7.2z"/><path class="c" d="M467,535.1l6.9-9.1l.9-4.7l-6.9,9.2z"/><path class="c" d="M473.9,526l7.2-11.4l.8-4.7l-7.1,11.4z"/><path d="M481.1,514.6l7.5-13.7l.8-4.7l-7.5,13.7z"/><path d="M488.6,500.9l8-16.3l.8-4.8l-8,16.4z"/><path d="M496.6,484.6l8.5-19.3l.8-4.8l-8.5,19.3z"/><path d="M505.1,465.3l9.2-22.7l.7-4.9l-9.1,22.8z"/><path d="M514.3,442.6l9.9-26.7l.7-4.9l-9.9,26.7z"/><path d="M524.2,415.9l11-31.4l.7-4.8l-11,31.3z"/><path d="M535.2,384.5l12.2-36.9l.6-4.8l-12.1,36.9z"/><path d="M547.4,347.6l13.7-43.8l.6-4.7l-13.7,43.7z"/><path d="M561.1,303.8l15.7-52.1l.5-4.6l-15.6,52z"/><path d="M576.8,251.7l18.2-62.7l.3-4.4l-18,62.5z"/><path d="M595,189l21.4-76.4l.1-4.1l-21.2,76.1z"/><path d="M616.4,112.6l25.7-94.6l0-3.5l-25.6,94z"/><path class="a" d="M223.9,88.8l23.8,72.7l2.9-3.8l-23.4-72.3z"/><path class="b" d="M247.7,161.5l20.5,61.1l2.6-4.1l-20.2-60.8z"/><path class="b" d="M268.2,222.6l17.9,51.9l2.4-4.2l-17.7-51.8z"/><path class="b" d="M286.1,274.5l15.8,44.4l2.1-4.3l-15.5-44.3z"/><path class="b" d="M301.9,318.9l14,38.2l2-4.3l-13.9-38.2z"/><path class="b" d="M315.9,357.1l12.7,33.1l1.9-4.4l-12.6-33z"/><path class="b" d="M328.6,390.2l11.5,28.7l1.7-4.5l-11.3-28.6z"/><path class="b" d="M340.1,418.9l10.5,24.9l1.6-4.5l-10.4-24.9z"/><path class="b" d="M350.6,443.8l9.7,21.7l1.6-4.6l-9.7-21.6z"/><path class="b" d="M360.3,465.5l9.1,18.7l1.4-4.5l-8.9-18.8z"/><path class="b" d="M369.4,484.2l8.4,16.1l1.4-4.5l-8.4-16.1z"/><path class="b" d="M377.8,500.3l8,13.9l1.3-4.6l-7.9-13.8z"/><path class="b" d="M385.8,514.2l7.6,11.6l1.2-4.5l-7.5-11.7z"/><path class="b" d="M393.4,525.8l7.2,9.8l1.2-4.6l-7.2-9.7z"/><path class="b" d="M400.6,535.6l7,7.9l1.1-4.6l-6.9-7.9z"/><path class="a" d="M407.6,543.5l6.7,6.1l1.1-4.5l-6.7-6.2z"/><path class="a" d="M414.3,549.6l6.6,4.5l1.1-4.5l-6.6-4.5z"/><path class="a" d="M420.9,554.1l6.4,2.9l1.1-4.6l-6.4-2.8z"/><path class="a" d="M427.3,557l6.4,1.3l1.1-4.6l-6.4-1.3z"/><path class="a" d="M433.7,558.3l6.4-.3l1-4.7l-6.3,.4z"/><path class="a" d="M440.1,558l6.3-2l1-4.6l-6.3,1.9z"/><path class="b" d="M446.4,556l6.5-3.6l.9-4.7l-6.4,3.7z"/><path class="b" d="M452.9,552.4l6.5-5.4l.9-4.6l-6.5,5.3z"/><path class="b" d="M459.4,547l6.7-7.1l.9-4.8l-6.7,7.3z"/><path class="c" d="M466.1,539.9l6.9-9.2l.9-4.7l-6.9,9.1z"/><path class="c" d="M473,530.7l7.2-11.3l.9-4.8l-7.2,11.4z"/><path d="M480.2,519.4l7.6-13.7l.8-4.8l-7.5,13.7z"/><path d="M487.8,505.7l8-16.3l.8-4.8l-8,16.3z"/><path d="M495.8,489.4l8.5-19.3l.8-4.8l-8.5,19.3z"/><path d="M504.3,470.1l9.2-22.7l.8-4.8l-9.2,22.7z"/><path d="M513.5,447.4l10-26.6l.7-4.9l-9.9,26.7z"/><path d="M523.5,420.8l11-31.4l.7-4.9l-11,31.4z"/><path d="M534.5,389.4l12.3-37l.6-4.8l-12.2,36.9z"/><path d="M546.8,352.4l13.8-43.8l.5-4.8l-13.7,43.8z"/><path d="M560.6,308.6l15.7-52.2l.5-4.7l-15.7,52.1z"/><path d="M576.3,256.4l18.3-63l.4-4.4l-18.2,62.7z"/><path d="M594.6,193.4l21.6-76.7l.2-4.1l-21.4,76.4z"/><path d="M616.2,116.7l26-95.1l-.1-3.6l-25.7,94.6z"/><path class="a" d="M191.9,4.5l28.6,87.9l3.4-3.6l-28.1-87.3z"/><path class="a" d="M220.5,92.4l24.2,72.9l3-3.8l-23.8-72.7z"/><path class="b" d="M244.7,165.3l20.8,61.4l2.7-4.1l-20.5-61.1z"/><path class="b" d="M265.5,226.7l18.2,52l2.4-4.2l-17.9-51.9z"/><path class="b" d="M283.7,278.7l16,44.6l2.2-4.4l-15.8-44.4z"/><path class="b" d="M299.7,323.3l14.2,38.3l2-4.5l-14-38.2z"/><path class="b" d="M313.9,361.6l12.8,33.1l1.9-4.5l-12.7-33.1z"/><path class="b" d="M326.7,394.7l11.6,28.7l1.8-4.5l-11.5-28.7z"/><path class="b" d="M338.3,423.4l10.7,25l1.6-4.6l-10.5-24.9z"/><path class="b" d="M349,448.4l9.8,21.6l1.5-4.5l-9.7-21.7z"/><path class="b" d="M358.8,470l9.1,18.8l1.5-4.6l-9.1-18.7z"/><path class="b" d="M367.9,488.8l8.5,16.1l1.4-4.6l-8.4-16.1z"/><path class="b" d="M376.4,504.9l8.1,13.8l1.3-4.5l-8-13.9z"/><path class="b" d="M384.5,518.7l7.6,11.7l1.3-4.6l-7.6-11.6z"/><path class="b" d="M392.1,530.4l7.3,9.8l1.2-4.6l-7.2-9.8z"/><path class="b" d="M399.4,540.2l7,7.9l1.2-4.6l-7-7.9z"/><path class="a" d="M406.4,548.1l6.8,6.1l1.1-4.6l-6.7-6.1z"/><path class="a" d="M413.2,554.2l6.6,4.5l1.1-4.6l-6.6-4.5z"/><path class="a" d="M419.8,558.7l6.5,2.9l1-4.6l-6.4-2.9z"/><path class="a" d="M426.3,561.6l6.4,1.3l1-4.6l-6.4-1.3z"/><path class="a" d="M432.7,562.9l6.4-.3l1-4.6l-6.4,.3z"/><path class="a" d="M439.1,562.6l6.4-1.9l.9-4.7l-6.3,2z"/><path class="b" d="M445.5,560.7l6.4-3.6l1-4.7l-6.5,3.6z"/><path class="b" d="M451.9,557.1l6.6-5.3l.9-4.8l-6.5,5.4z"/><path class="b" d="M458.5,551.8l6.7-7.2l.9-4.7l-6.7,7.1z"/><path class="c" d="M465.2,544.6l6.9-9.1l.9-4.8l-6.9,9.2z"/><path class="c" d="M472.1,535.5l7.2-11.3l.9-4.8l-7.2,11.3z"/><path d="M479.3,524.2l7.6-13.6l.9-4.9l-7.6,13.7z"/><path d="M486.9,510.6l8-16.3l.9-4.9l-8,16.3z"/><path d="M494.9,494.3l8.6-19.2l.8-5l-8.5,19.3z"/><path d="M503.5,475.1l9.2-22.7l.8-5l-9.2,22.7z"/><path d="M512.7,452.4l10.1-26.7l.7-4.9l-10,26.6z"/><path d="M522.8,425.7l11-31.4l.7-4.9l-11,31.4z"/><path d="M533.8,394.3l12.3-37l.7-4.9l-12.3,37z"/><path d="M546.1,357.3l13.9-43.8l.6-4.9l-13.8,43.8z"/><path d="M560,313.5l15.8-52.4l.5-4.7l-15.7,52.2z"/><path d="M575.8,261.1l18.4-63.1l.4-4.6l-18.3,63z"/><path d="M594.2,198l21.8-77.1l.2-4.2l-21.6,76.7z"/><path d="M616,120.9l26.2-95.7l0-3.6l-26,95.1z"/><path class="a" d="M188,7.6l29.1,88.3l3.4-3.5l-28.6-87.9z"/><path class="a" d="M217.1,95.9l24.6,73.4l3-4l-24.2-72.9z"/><path class="a" d="M241.7,169.3l21.1,61.5l2.7-4.1l-20.8-61.4z"/><path class="b" d="M262.8,230.8l18.4,52.2l2.5-4.3l-18.2-52z"/><path class="b" d="M281.2,283l16.2,44.7l2.3-4.4l-16-44.6z"/><path class="b" d="M297.4,327.7l14.4,38.4l2.1-4.5l-14.2-38.3z"/><path class="b" d="M311.8,366.1l13,33.2l1.9-4.6l-12.8-33.1z"/><path class="b" d="M324.8,399.3l11.7,28.7l1.8-4.6l-11.6-28.7z"/><path class="b" d="M336.5,428l10.8,25l1.7-4.6l-10.7-25z"/><path class="b" d="M347.3,453l9.9,21.6l1.6-4.6l-9.8-21.6z"/><path class="b" d="M357.2,474.6l9.2,18.8l1.5-4.6l-9.1-18.8z"/><path class="b" d="M366.4,493.4l8.6,16.1l1.4-4.6l-8.5-16.1z"/><path class="b" d="M375,509.5l8.1,13.9l1.4-4.7l-8.1-13.8z"/><path class="b" d="M383.1,523.4l7.7,11.7l1.3-4.7l-7.6-11.7z"/><path class="b" d="M390.8,535.1l7.3,9.7l1.3-4.6l-7.3-9.8z"/><path class="b" d="M398.1,544.8l7.1,7.9l1.2-4.6l-7-7.9z"/><path class="a" d="M405.2,552.7l6.8,6.2l1.2-4.7l-6.8-6.1z"/><path class="a" d="M412,558.9l6.7,4.5l1.1-4.7l-6.6-4.5z"/><path class="a" d="M418.7,563.4l6.5,2.9l1.1-4.7l-6.5-2.9z"/><path class="a" d="M425.2,566.3l6.4,1.3l1.1-4.7l-6.4-1.3z"/><path class="a" d="M431.6,567.6l6.4-.3l1.1-4.7l-6.4,.3z"/><path class="a" d="M438,567.3l6.5-1.9l1-4.7l-6.4,1.9z"/><path class="b" d="M444.5,565.4l6.4-3.5l1-4.8l-6.4,3.6z"/><path class="b" d="M450.9,561.9l6.6-5.3l1-4.8l-6.6,5.3z"/><path class="b" d="M457.5,556.6l6.8-7.2l.9-4.8l-6.7,7.2z"/><path class="c" d="M464.3,549.4l6.9-9.1l.9-4.8l-6.9,9.1z"/><path class="c" d="M471.2,540.3l7.3-11.2l.8-4.9l-7.2,11.3z"/><path class="c" d="M478.5,529.1l7.6-13.6l.8-4.9l-7.6,13.6z"/><path d="M486.1,515.5l8-16.2l.8-5l-8,16.3z"/><path d="M494.1,499.3l8.6-19.3l.8-4.9l-8.6,19.2z"/><path d="M502.7,480l9.2-22.6l.8-5l-9.2,22.7z"/><path d="M511.9,457.4l10.1-26.7l.8-5l-10.1,26.7z"/><path d="M522,430.7l11.1-31.3l.7-5.1l-11,31.4z"/><path d="M533.1,399.4l12.4-37.1l.6-5l-12.3,37z"/><path d="M545.5,362.3l13.9-43.9l.6-4.9l-13.9,43.8z"/><path d="M559.4,318.4l16-52.5l.4-4.8l-15.8,52.4z"/><path d="M575.4,265.9l18.5-63.3l.3-4.6l-18.4,63.1z"/><path d="M593.9,202.6l21.9-77.5l.2-4.2l-21.8,77.1z"/><path d="M615.8,125.1l26.5-96.2l-.1-3.7l-26.2,95.7z"/><path class="a" d="M184,10.7l29.6,88.9l3.5-3.7l-29.1-88.3z"/><path class="a" d="M213.6,99.6l25,73.6l3.1-3.9l-24.6-73.4z"/><path class="a" d="M238.6,173.2l21.5,61.9l2.7-4.3l-21.1-61.5z"/><path class="b" d="M260.1,235.1l18.6,52.3l2.5-4.4l-18.4-52.2z"/><path class="b" d="M278.7,287.4l16.5,44.8l2.2-4.5l-16.2-44.7z"/><path class="b" d="M295.2,332.2l14.6,38.5l2-4.6l-14.4-38.4z"/><path class="b" d="M309.8,370.7l13.1,33.2l1.9-4.6l-13-33.2z"/><path class="b" d="M322.9,403.9l11.8,28.8l1.8-4.7l-11.7-28.7z"/><path class="b" d="M334.7,432.7l10.9,24.9l1.7-4.6l-10.8-25z"/><path class="b" d="M345.6,457.6l10,21.7l1.6-4.7l-9.9-21.6z"/><path class="b" d="M355.6,479.3l9.3,18.8l1.5-4.7l-9.2-18.8z"/><path class="b" d="M364.9,498.1l8.7,16.1l1.4-4.7l-8.6-16.1z"/><path class="b" d="M373.6,514.2l8.1,13.9l1.4-4.7l-8.1-13.9z"/><path class="b" d="M381.7,528.1l7.8,11.7l1.3-4.7l-7.7-11.7z"/><path class="b" d="M389.5,539.8l7.4,9.7l1.2-4.7l-7.3-9.7z"/><path class="a" d="M396.9,549.5l7.1,7.9l1.2-4.7l-7.1-7.9z"/><path class="a" d="M404,557.4l6.8,6.2l1.2-4.7l-6.8-6.2z"/><path class="a" d="M410.8,563.6l6.7,4.5l1.2-4.7l-6.7-4.5z"/><path class="a" d="M417.5,568.1l6.6,2.9l1.1-4.7l-6.5-2.9z"/><path class="a" d="M424.1,571l6.5,1.4l1-4.8l-6.4-1.3z"/><path class="a" d="M430.6,572.4l6.4-.3l1-4.8l-6.4,.3z"/><path class="a" d="M437,572.1l6.4-1.9l1.1-4.8l-6.5,1.9z"/><path class="b" d="M443.4,570.2l6.5-3.5l1-4.8l-6.4,3.5z"/><path class="b" d="M449.9,566.7l6.7-5.3l.9-4.8l-6.6,5.3z"/><path class="b" d="M456.6,561.4l6.7-7.1l1-4.9l-6.8,7.2z"/><path class="c" d="M463.3,554.3l7-9.1l.9-4.9l-6.9,9.1z"/><path class="c" d="M470.3,545.2l7.3-11.2l.9-4.9l-7.3,11.2z"/><path class="c" d="M477.6,534l7.6-13.5l.9-5l-7.6,13.6z"/><path d="M485.2,520.5l8.1-16.2l.8-5l-8,16.2z"/><path d="M493.3,504.3l8.6-19.2l.8-5.1l-8.6,19.3z"/><path d="M501.9,485.1l9.3-22.7l.7-5l-9.2,22.6z"/><path d="M511.2,462.4l10.1-26.6l.7-5.1l-10.1,26.7z"/><path d="M521.3,435.8l11.1-31.3l.7-5.1l-11.1,31.3z"/><path d="M532.4,404.5l12.4-37.1l.7-5.1l-12.4,37.1z"/><path d="M544.8,367.4l14-44l.6-5l-13.9,43.9z"/><path d="M558.8,323.4l16.1-52.6l.5-4.9l-16,52.5z"/><path d="M574.9,270.8l18.6-63.5l.4-4.7l-18.5,63.3z"/><path d="M593.5,207.3l22.1-77.8l.2-4.4l-21.9,77.5z"/><path d="M615.6,129.5l26.8-96.8l-.1-3.8l-26.5,96.2z"/><path class="a" d="M179.9,13.9l30.2,89.4l3.5-3.7l-29.6-88.9z"/><path class="a" d="M210.1,103.3l25.4,74l3.1-4.1l-25-73.6z"/><path class="a" d="M235.5,177.3l21.8,62l2.8-4.2l-21.5-61.9z"/><path class="b" d="M257.3,239.3l18.9,52.6l2.5-4.5l-18.6-52.3z"/><path class="b" d="M276.2,291.9l16.7,44.8l2.3-4.5l-16.5-44.8z"/><path class="b" d="M292.9,336.7l14.7,38.6l2.2-4.6l-14.6-38.5z"/><path class="b" d="M307.6,375.3l13.3,33.3l2-4.7l-13.1-33.2z"/><path class="b" d="M320.9,408.6l12,28.8l1.8-4.7l-11.8-28.8z"/><path class="b" d="M332.9,437.4l11,25l1.7-4.8l-10.9-24.9z"/><path class="b" d="M343.9,462.4l10.1,21.6l1.6-4.7l-10-21.7z"/><path class="b" d="M354,484l9.4,18.8l1.5-4.7l-9.3-18.8z"/><path class="b" d="M363.4,502.8l8.7,16.2l1.5-4.8l-8.7-16.1z"/><path class="b" d="M372.1,519l8.2,13.8l1.4-4.7l-8.1-13.9z"/><path class="b" d="M380.3,532.8l7.8,11.7l1.4-4.7l-7.8-11.7z"/><path class="b" d="M388.1,544.5l7.5,9.7l1.3-4.7l-7.4-9.7z"/><path class="a" d="M395.6,554.2l7.1,8l1.3-4.8l-7.1-7.9z"/><path class="a" d="M402.7,562.2l7,6.2l1.1-4.8l-6.8-6.2z"/><path class="a" d="M409.7,568.4l6.7,4.5l1.1-4.8l-6.7-4.5z"/><path class="a" d="M416.4,572.9l6.6,2.9l1.1-4.8l-6.6-2.9z"/><path class="a" d="M423,575.8l6.5,1.3l1.1-4.7l-6.5-1.4z"/><path class="a" d="M429.5,577.1l6.4-.2l1.1-4.8l-6.4,.3z"/><path class="a" d="M435.9,576.9l6.5-1.9l1-4.8l-6.4,1.9z"/><path class="b" d="M442.4,575l6.6-3.5l.9-4.8l-6.5,3.5z"/><path class="b" d="M449,571.5l6.6-5.2l1-4.9l-6.7,5.3z"/><path class="b" d="M455.6,566.3l6.8-7.1l.9-4.9l-6.7,7.1z"/><path class="c" d="M462.4,559.2l7-9l.9-5l-7,9.1z"/><path class="c" d="M469.4,550.2l7.3-11.2l.9-5l-7.3,11.2z"/><path class="c" d="M476.7,539l7.6-13.5l.9-5l-7.6,13.5z"/><path d="M484.3,525.5l8.1-16.2l.9-5l-8.1,16.2z"/><path d="M492.4,509.3l8.6-19.1l.9-5.1l-8.6,19.2z"/><path d="M501,490.2l9.4-22.6l.8-5.2l-9.3,22.7z"/><path d="M510.4,467.6l10.1-26.6l.8-5.2l-10.1,26.6z"/><path d="M520.5,441l11.2-31.4l.7-5.1l-11.1,31.3z"/><path d="M531.7,409.6l12.5-37l.6-5.2l-12.4,37.1z"/><path d="M544.2,372.6l14-44.1l.6-5.1l-14,44z"/><path d="M558.2,328.5l16.2-52.7l.5-5l-16.1,52.6z"/><path d="M574.4,275.8l18.7-63.7l.4-4.8l-18.6,63.5z"/><path d="M593.1,212.1l22.3-78.2l.2-4.4l-22.1,77.8z"/><path d="M615.4,133.9l27-97.3l0-3.9l-26.8,96.8z"/><path class="a" d="M175.8,17.1l30.7,90l3.6-3.8l-30.2-89.4z"/><path class="a" d="M206.5,107.1l25.9,74.3l3.1-4.1l-25.4-74z"/><path class="a" d="M232.4,181.4l22.1,62.3l2.8-4.4l-21.8-62z"/><path class="a" d="M254.5,243.7l19.2,52.7l2.5-4.5l-18.9-52.6z"/><path class="b" d="M273.7,296.4l16.8,44.9l2.4-4.6l-16.7-44.8z"/><path class="b" d="M290.5,341.3l15,38.7l2.1-4.7l-14.7-38.6z"/><path class="b" d="M305.5,380l13.4,33.3l2-4.7l-13.3-33.3z"/><path class="b" d="M318.9,413.3l12.2,28.8l1.8-4.7l-12-28.8z"/><path class="b" d="M331.1,442.1l11.1,25l1.7-4.7l-11-25z"/><path class="b" d="M342.2,467.1l10.2,21.7l1.6-4.8l-10.1-21.6z"/><path class="b" d="M352.4,488.8l9.4,18.8l1.6-4.8l-9.4-18.8z"/><path class="b" d="M361.8,507.6l8.8,16.1l1.5-4.7l-8.7-16.2z"/><path class="b" d="M370.6,523.7l8.3,13.9l1.4-4.8l-8.2-13.8z"/><path class="b" d="M378.9,537.6l7.9,11.7l1.3-4.8l-7.8-11.7z"/><path class="b" d="M386.8,549.3l7.5,9.7l1.3-4.8l-7.5-9.7z"/><path class="a" d="M394.3,559l7.2,8l1.2-4.8l-7.1-8z"/><path class="a" d="M401.5,567l7,6.2l1.2-4.8l-7-6.2z"/><path class="a" d="M408.5,573.2l6.7,4.5l1.2-4.8l-6.7-4.5z"/><path class="a" d="M415.2,577.7l6.7,2.9l1.1-4.8l-6.6-2.9z"/><path class="a" d="M421.9,580.6l6.5,1.4l1.1-4.9l-6.5-1.3z"/><path class="a" d="M428.4,582l6.5-.3l1-4.8l-6.4,.2z"/><path class="a" d="M434.9,581.7l6.5-1.8l1-4.9l-6.5,1.9z"/><path class="b" d="M441.4,579.9l6.5-3.5l1.1-4.9l-6.6,3.5z"/><path class="b" d="M447.9,576.4l6.7-5.2l1-4.9l-6.6,5.2z"/><path class="b" d="M454.6,571.2l6.8-7l1-5l-6.8,7.1z"/><path class="c" d="M461.4,564.2l7-9l1-5l-7,9z"/><path class="c" d="M468.4,555.2l7.4-11.2l.9-5l-7.3,11.2z"/><path class="c" d="M475.8,544l7.6-13.4l.9-5.1l-7.6,13.5z"/><path d="M483.4,530.6l8.1-16.2l.9-5.1l-8.1,16.2z"/><path d="M491.5,514.4l8.7-19.1l.8-5.1l-8.6,19.1z"/><path d="M500.2,495.3l9.4-22.5l.8-5.2l-9.4,22.6z"/><path d="M509.6,472.8l10.1-26.6l.8-5.2l-10.1,26.6z"/><path d="M519.7,446.2l11.3-31.4l.7-5.2l-11.2,31.4z"/><path d="M531,414.8l12.5-37l.7-5.2l-12.5,37z"/><path d="M543.5,377.8l14.1-44.1l.6-5.2l-14,44.1z"/><path d="M557.6,333.7l16.3-52.8l.5-5.1l-16.2,52.7z"/><path d="M573.9,280.9l18.9-64l.3-4.8l-18.7,63.7z"/><path d="M592.8,216.9l22.4-78.4l.2-4.6l-22.3,78.2z"/><path d="M615.2,138.5l27.3-98l-.1-3.9l-27,97.3z"/><path class="a" d="M171.6,20.4l31.3,90.5l3.6-3.8l-30.7-90z"/><path class="a" d="M202.9,110.9l26.3,74.7l3.2-4.2l-25.9-74.3z"/><path class="a" d="M229.2,185.6l22.4,62.5l2.9-4.4l-22.1-62.3z"/><path class="a" d="M251.6,248.1l19.5,52.9l2.6-4.6l-19.2-52.7z"/><path class="b" d="M271.1,301l17.1,45l2.3-4.7l-16.8-44.9z"/><path class="b" d="M288.2,346l15.1,38.7l2.2-4.7l-15-38.7z"/><path class="b" d="M303.3,384.7l13.6,33.4l2-4.8l-13.4-33.3z"/><path class="b" d="M316.9,418.1l12.3,28.8l1.9-4.8l-12.2-28.8z"/><path class="b" d="M329.2,446.9l11.2,25.1l1.8-4.9l-11.1-25z"/><path class="b" d="M340.4,472l10.3,21.6l1.7-4.8l-10.2-21.7z"/><path class="b" d="M350.7,493.6l9.6,18.8l1.5-4.8l-9.4-18.8z"/><path class="b" d="M360.3,512.4l8.9,16.2l1.4-4.9l-8.8-16.1z"/><path class="b" d="M369.2,528.6l8.3,13.8l1.4-4.8l-8.3-13.9z"/><path class="b" d="M377.5,542.4l8,11.7l1.3-4.8l-7.9-11.7z"/><path class="b" d="M385.5,554.1l7.5,9.8l1.3-4.9l-7.5-9.7z"/><path class="a" d="M393,563.9l7.3,7.9l1.2-4.8l-7.2-8z"/><path class="a" d="M400.3,571.8l6.9,6.2l1.3-4.8l-7-6.2z"/><path class="a" d="M407.2,578l6.9,4.6l1.1-4.9l-6.7-4.5z"/><path class="a" d="M414.1,582.6l6.6,2.9l1.2-4.9l-6.7-2.9z"/><path class="a" d="M420.7,585.5l6.6,1.4l1.1-4.9l-6.5-1.4z"/><path class="a" d="M427.3,586.9l6.5-.2l1.1-5l-6.5,.3z"/><path class="a" d="M433.8,586.7l6.5-1.9l1.1-4.9l-6.5,1.8z"/><path class="b" d="M440.3,584.8l6.6-3.4l1-5l-6.5,3.5z"/><path class="b" d="M446.9,581.4l6.7-5.2l1-5l-6.7,5.2z"/><path class="b" d="M453.6,576.2l6.8-7l1-5l-6.8,7z"/><path class="c" d="M460.4,569.2l7.1-9l.9-5l-7,9z"/><path class="c" d="M467.5,560.2l7.3-11l1-5.2l-7.4,11.2z"/><path class="c" d="M474.8,549.2l7.7-13.5l.9-5.1l-7.6,13.4z"/><path d="M482.5,535.7l8.2-16.1l.8-5.2l-8.1,16.2z"/><path d="M490.7,519.6l8.7-19.1l.8-5.2l-8.7,19.1z"/><path d="M499.4,500.5l9.3-22.5l.9-5.2l-9.4,22.5z"/><path d="M508.7,478l10.3-26.5l.7-5.3l-10.1,26.6z"/><path d="M519,451.5l11.2-31.4l.8-5.3l-11.3,31.4z"/><path d="M530.2,420.1l12.6-37l.7-5.3l-12.5,37z"/><path d="M542.8,383.1l14.2-44.2l.6-5.2l-14.1,44.1z"/><path d="M557,338.9l16.3-52.9l.6-5.1l-16.3,52.8z"/><path d="M573.3,286l19.1-64.1l.4-5l-18.9,64z"/><path d="M592.4,221.9l22.6-78.8l.2-4.6l-22.4,78.4z"/><path d="M615,143.1l27.5-98.6l0-4l-27.3,98z"/><path class="a" d="M167.3,23.8l31.9,91l3.7-3.9l-31.3-90.5z"/><path class="a" d="M199.2,114.8l26.7,75l3.3-4.2l-26.3-74.7z"/><path class="a" d="M225.9,189.8l22.8,62.8l2.9-4.5l-22.4-62.5z"/><path class="a" d="M248.7,252.6l19.8,53l2.6-4.6l-19.5-52.9z"/><path class="a" d="M268.5,305.6l17.3,45.2l2.4-4.8l-17.1-45z"/><path class="b" d="M285.8,350.8l15.3,38.7l2.2-4.8l-15.1-38.7z"/><path class="b" d="M301.1,389.5l13.8,33.4l2-4.8l-13.6-33.4z"/><path class="b" d="M314.9,422.9l12.4,28.9l1.9-4.9l-12.3-28.8z"/><path class="b" d="M327.3,451.8l11.3,25l1.8-4.8l-11.2-25.1z"/><path class="b" d="M338.6,476.8l10.4,21.7l1.7-4.9l-10.3-21.6z"/><path class="b" d="M349,498.5l9.7,18.8l1.6-4.9l-9.6-18.8z"/><path class="b" d="M358.7,517.3l9,16.2l1.5-4.9l-8.9-16.2z"/><path class="b" d="M367.7,533.5l8.4,13.8l1.4-4.9l-8.3-13.8z"/><path class="b" d="M376.1,547.3l8,11.7l1.4-4.9l-8-11.7z"/><path class="a" d="M384.1,559l7.6,9.8l1.3-4.9l-7.5-9.8z"/><path class="a" d="M391.7,568.8l7.3,7.9l1.3-4.9l-7.3-7.9z"/><path class="a" d="M399,576.7l7,6.2l1.2-4.9l-6.9-6.2z"/><path class="a" d="M406,582.9l6.9,4.6l1.2-4.9l-6.9-4.6z"/><path class="a" d="M412.9,587.5l6.7,2.9l1.1-4.9l-6.6-2.9z"/><path class="a" d="M419.6,590.4l6.6,1.4l1.1-4.9l-6.6-1.4z"/><path class="a" d="M426.2,591.8l6.5-.2l1.1-4.9l-6.5,.2z"/><path class="a" d="M432.7,591.6l6.6-1.8l1-5l-6.5,1.9z"/><path class="b" d="M439.3,589.8l6.6-3.4l1-5l-6.6,3.4z"/><path class="b" d="M445.9,586.4l6.7-5.1l1-5.1l-6.7,5.2z"/><path class="b" d="M452.6,581.3l6.9-7l.9-5.1l-6.8,7z"/><path class="b" d="M459.5,574.3l7-8.9l1-5.2l-7.1,9z"/><path class="c" d="M466.5,565.4l7.4-11.1l.9-5.1l-7.3,11z"/><path class="c" d="M473.9,554.3l7.7-13.4l.9-5.2l-7.7,13.5z"/><path d="M481.6,540.9l8.2-16l.9-5.3l-8.2,16.1z"/><path d="M489.8,524.9l8.7-19.1l.9-5.3l-8.7,19.1z"/><path d="M498.5,505.8l9.4-22.5l.8-5.3l-9.3,22.5z"/><path d="M507.9,483.3l10.3-26.5l.8-5.3l-10.3,26.5z"/><path d="M518.2,456.8l11.3-31.3l.7-5.4l-11.2,31.4z"/><path d="M529.5,425.5l12.6-37.1l.7-5.3l-12.6,37z"/><path d="M542.1,388.4l14.3-44.1l.6-5.4l-14.2,44.2z"/><path d="M556.4,344.3l16.4-53l.5-5.3l-16.3,52.9z"/><path d="M572.8,291.3l19.2-64.4l.4-5l-19.1,64.1z"/><path d="M592,226.9l22.8-79.1l.2-4.7l-22.6,78.8z"/><path d="M614.8,147.8l27.8-99.2l-.1-4.1l-27.5,98.6z"/><path class="a" d="M163,27.2l32.4,91.5l3.8-3.9l-31.9-91z"/><path class="a" d="M195.4,118.7l27.2,75.5l3.3-4.4l-26.7-75z"/><path class="a" d="M222.6,194.2l23.1,62.9l3-4.5l-22.8-62.8z"/><path class="a" d="M245.7,257.1l20.1,53.2l2.7-4.7l-19.8-53z"/><path class="a" d="M265.8,310.3l17.6,45.3l2.4-4.8l-17.3-45.2z"/><path class="b" d="M283.4,355.6l15.5,38.8l2.2-4.9l-15.3-38.7z"/><path class="b" d="M298.9,394.4l13.9,33.4l2.1-4.9l-13.8-33.4z"/><path class="b" d="M312.8,427.8l12.6,28.9l1.9-4.9l-12.4-28.9z"/><path class="b" d="M325.4,456.7l11.4,25.1l1.8-5l-11.3-25z"/><path class="b" d="M336.8,481.8l10.6,21.7l1.6-5l-10.4-21.7z"/><path class="b" d="M347.4,503.5l9.7,18.8l1.6-5l-9.7-18.8z"/><path class="b" d="M357.1,522.3l9,16.1l1.6-4.9l-9-16.2z"/><path class="b" d="M366.1,538.4l8.6,13.9l1.4-5l-8.4-13.8z"/><path class="b" d="M374.7,552.3l8,11.7l1.4-5l-8-11.7z"/><path class="a" d="M382.7,564l7.7,9.7l1.3-4.9l-7.6-9.8z"/><path class="a" d="M390.4,573.7l7.3,7.9l1.3-4.9l-7.3-7.9z"/><path class="a" d="M397.7,581.6l7.1,6.3l1.2-5l-7-6.2z"/><path class="a" d="M404.8,587.9l6.9,4.5l1.2-4.9l-6.9-4.6z"/><path class="a" d="M411.7,592.4l6.7,3l1.2-5l-6.7-2.9z"/><path class="a" d="M418.4,595.4l6.7,1.4l1.1-5l-6.6-1.4z"/><path class="a" d="M425.1,596.8l6.5-.2l1.1-5l-6.5,.2z"/><path class="a" d="M431.6,596.6l6.6-1.7l1.1-5.1l-6.6,1.8z"/><path class="a" d="M438.2,594.9l6.7-3.4l1-5.1l-6.6,3.4z"/><path class="b" d="M444.9,591.5l6.7-5.1l1-5.1l-6.7,5.1z"/><path class="b" d="M451.6,586.4l6.9-7l1-5.1l-6.9,7z"/><path class="b" d="M458.5,579.4l7.1-8.9l.9-5.1l-7,8.9z"/><path class="c" d="M465.6,570.5l7.3-11l1-5.2l-7.4,11.1z"/><path class="c" d="M472.9,559.5l7.8-13.3l.9-5.3l-7.7,13.4z"/><path class="c" d="M480.7,546.2l8.2-16l.9-5.3l-8.2,16z"/><path d="M488.9,530.2l8.7-19l.9-5.4l-8.7,19.1z"/><path d="M497.6,511.2l9.5-22.5l.8-5.4l-9.4,22.5z"/><path d="M507.1,488.7l10.3-26.4l.8-5.5l-10.3,26.5z"/><path d="M517.4,462.3l11.3-31.3l.8-5.5l-11.3,31.3z"/><path d="M528.7,431l12.7-37.1l.7-5.5l-12.6,37.1z"/><path d="M541.4,393.9l14.4-44.2l.6-5.4l-14.3,44.1z"/><path d="M555.8,349.7l16.5-53.1l.5-5.3l-16.4,53z"/><path d="M572.3,296.6l19.3-64.6l.4-5.1l-19.2,64.4z"/><path d="M591.6,232l23-79.5l.2-4.7l-22.8,79.1z"/><path d="M614.6,152.5l28.1-99.7l-.1-4.2l-27.8,99.2z"/><path class="a" d="M158.5,30.7l33,92.1l3.9-4.1l-32.4-91.5z"/><path class="a" d="M191.5,122.8l27.7,75.7l3.4-4.3l-27.2-75.5z"/><path class="a" d="M219.2,198.5l23.5,63.3l3-4.7l-23.1-62.9z"/><path class="a" d="M242.7,261.8l20.4,53.3l2.7-4.8l-20.1-53.2z"/><path class="a" d="M263.1,315.1l17.8,45.3l2.5-4.8l-17.6-45.3z"/><path class="b" d="M280.9,360.4l15.8,38.9l2.2-4.9l-15.5-38.8z"/><path class="b" d="M296.7,399.3l14,33.5l2.1-5l-13.9-33.4z"/><path class="b" d="M310.7,432.8l12.8,28.9l1.9-5l-12.6-28.9z"/><path class="b" d="M323.5,461.7l11.5,25.1l1.8-5l-11.4-25.1z"/><path class="b" d="M335,486.8l10.6,21.7l1.8-5l-10.6-21.7z"/><path class="b" d="M345.6,508.5l9.9,18.8l1.6-5l-9.7-18.8z"/><path class="b" d="M355.5,527.3l9.1,16.1l1.5-5l-9-16.1z"/><path class="b" d="M364.6,543.4l8.6,13.9l1.5-5l-8.6-13.9z"/><path class="a" d="M373.2,557.3l8.1,11.7l1.4-5l-8-11.7z"/><path class="a" d="M381.3,569l7.7,9.7l1.4-5l-7.7-9.7z"/><path class="a" d="M389,578.7l7.4,8l1.3-5.1l-7.3-7.9z"/><path class="a" d="M396.4,586.7l7.2,6.2l1.2-5l-7.1-6.3z"/><path class="a" d="M403.6,592.9l6.9,4.6l1.2-5.1l-6.9-4.5z"/><path class="a" d="M410.5,597.5l6.8,2.9l1.1-5l-6.7-3z"/><path class="a" d="M417.3,600.4l6.6,1.5l1.2-5.1l-6.7-1.4z"/><path class="a" d="M423.9,601.9l6.6-.2l1.1-5.1l-6.5,.2z"/><path class="a" d="M430.5,601.7l6.7-1.7l1-5.1l-6.6,1.7z"/><path class="a" d="M437.2,600l6.6-3.4l1.1-5.1l-6.7,3.4z"/><path class="b" d="M443.8,596.6l6.8-5.1l1-5.1l-6.7,5.1z"/><path class="b" d="M450.6,591.5l6.9-6.9l1-5.2l-6.9,7z"/><path class="b" d="M457.5,584.6l7.1-8.8l1-5.3l-7.1,8.9z"/><path class="c" d="M464.6,575.8l7.4-11l.9-5.3l-7.3,11z"/><path class="c" d="M472,564.8l7.8-13.3l.9-5.3l-7.8,13.3z"/><path class="c" d="M479.8,551.5l8.2-15.9l.9-5.4l-8.2,16z"/><path d="M488,535.6l8.7-19l.9-5.4l-8.7,19z"/><path d="M496.7,516.6l9.5-22.4l.9-5.5l-9.5,22.5z"/><path d="M506.2,494.2l10.3-26.4l.9-5.5l-10.3,26.4z"/><path d="M516.5,467.8l11.5-31.3l.7-5.5l-11.3,31.3z"/><path d="M528,436.5l12.7-37.1l.7-5.5l-12.7,37.1z"/><path d="M540.7,399.4l14.4-44.2l.7-5.5l-14.4,44.2z"/><path d="M555.1,355.2l16.6-53.2l.6-5.4l-16.5,53.1z"/><path d="M571.7,302l19.5-64.7l.4-5.3l-19.3,64.6z"/><path d="M591.2,237.3l23.2-79.9l.2-4.9l-23,79.5z"/><path d="M614.4,157.4l28.3-100.3l0-4.3l-28.1,99.7z"/><path class="a" d="M154,34.2l33.6,92.7l3.9-4.1l-33-92.1z"/><path class="a" d="M187.6,126.9l28.2,76.1l3.4-4.5l-27.7-75.7z"/><path class="a" d="M215.8,203l23.9,63.4l3-4.6l-23.5-63.3z"/><path class="a" d="M239.7,266.4l20.7,53.5l2.7-4.8l-20.4-53.3z"/><path class="a" d="M260.4,319.9l18,45.5l2.5-5l-17.8-45.3z"/><path class="a" d="M278.4,365.4l16,38.9l2.3-5l-15.8-38.9z"/><path class="b" d="M294.4,404.3l14.2,33.5l2.1-5l-14-33.5z"/><path class="b" d="M308.6,437.8l12.9,29l2-5.1l-12.8-28.9z"/><path class="b" d="M321.5,466.8l11.7,25.1l1.8-5.1l-11.5-25.1z"/><path class="b" d="M333.2,491.9l10.7,21.7l1.7-5.1l-10.6-21.7z"/><path class="b" d="M343.9,513.6l9.9,18.7l1.7-5l-9.9-18.8z"/><path class="b" d="M353.8,532.3l9.3,16.2l1.5-5.1l-9.1-16.1z"/><path class="b" d="M363.1,548.5l8.6,13.8l1.5-5l-8.6-13.9z"/><path class="a" d="M371.7,562.3l8.2,11.7l1.4-5l-8.1-11.7z"/><path class="a" d="M379.9,574l7.8,9.8l1.3-5.1l-7.7-9.7z"/><path class="a" d="M387.7,583.8l7.4,7.9l1.3-5l-7.4-8z"/><path class="a" d="M395.1,591.7l7.2,6.2l1.3-5l-7.2-6.2z"/><path class="a" d="M402.3,597.9l7,4.6l1.2-5l-6.9-4.6z"/><path class="a" d="M409.3,602.5l6.8,3l1.2-5.1l-6.8-2.9z"/><path class="a" d="M416.1,605.5l6.7,1.5l1.1-5.1l-6.6-1.5z"/><path class="a" d="M422.8,607l6.6-.2l1.1-5.1l-6.6,.2z"/><path class="a" d="M429.4,606.8l6.7-1.7l1.1-5.1l-6.7,1.7z"/><path class="a" d="M436.1,605.1l6.6-3.3l1.1-5.2l-6.6,3.4z"/><path class="b" d="M442.7,601.8l6.8-5.1l1.1-5.2l-6.8,5.1z"/><path class="b" d="M449.5,596.7l7-6.8l1-5.3l-6.9,6.9z"/><path class="b" d="M456.5,589.9l7.1-8.8l1-5.3l-7.1,8.8z"/><path class="c" d="M463.6,581.1l7.4-10.9l1-5.4l-7.4,11z"/><path class="c" d="M471,570.2l7.8-13.3l1-5.4l-7.8,13.3z"/><path d="M478.8,556.9l8.2-15.9l1-5.4l-8.2,15.9z"/><path d="M487,541l8.8-18.9l.9-5.5l-8.7,19z"/><path d="M495.8,522.1l9.6-22.3l.8-5.6l-9.5,22.4z"/><path d="M505.4,499.8l10.3-26.5l.8-5.5l-10.3,26.4z"/><path d="M515.7,473.3l11.5-31.2l.8-5.6l-11.5,31.3z"/><path d="M527.2,442.1l12.8-37.1l.7-5.6l-12.7,37.1z"/><path d="M540,405l14.5-44.2l.6-5.6l-14.4,44.2z"/><path d="M554.5,360.8l16.7-53.3l.5-5.5l-16.6,53.2z"/><path d="M571.2,307.5l19.6-64.9l.4-5.3l-19.5,64.7z"/><path d="M590.8,242.6l23.3-80.2l.3-5l-23.2,79.9z"/><path d="M614.1,162.4l28.7-100.9l-.1-4.4l-28.3,100.3z"/><path class="a" d="M149.4,37.8l34.3,93.2l3.9-4.1l-33.6-92.7z"/><path class="a" d="M183.7,131l28.6,76.5l3.5-4.5l-28.2-76.1z"/><path class="a" d="M212.3,207.5l24.3,63.7l3.1-4.8l-23.9-63.4z"/><path class="a" d="M236.6,271.2l21,53.6l2.8-4.9l-20.7-53.5z"/><path class="a" d="M257.6,324.8l18.3,45.6l2.5-5l-18-45.5z"/><path class="a" d="M275.9,370.4l16.2,39l2.3-5.1l-16-38.9z"/><path class="a" d="M292.1,409.4l14.4,33.5l2.1-5.1l-14.2-33.5z"/><path class="b" d="M306.5,442.9l13,29l2-5.1l-12.9-29z"/><path class="b" d="M319.5,471.9l11.8,25.1l1.9-5.1l-11.7-25.1z"/><path class="b" d="M331.3,497l10.9,21.7l1.7-5.1l-10.7-21.7z"/><path class="b" d="M342.2,518.7l10,18.7l1.6-5.1l-9.9-18.7z"/><path class="b" d="M352.2,537.4l9.3,16.2l1.6-5.1l-9.3-16.2z"/><path class="a" d="M361.5,553.6l8.7,13.8l1.5-5.1l-8.6-13.8z"/><path class="a" d="M370.2,567.4l8.3,11.7l1.4-5.1l-8.2-11.7z"/><path class="a" d="M378.5,579.1l7.8,9.8l1.4-5.1l-7.8-9.8z"/><path class="a" d="M386.3,588.9l7.5,7.9l1.3-5.1l-7.4-7.9z"/><path class="a" d="M393.8,596.8l7.2,6.3l1.3-5.2l-7.2-6.2z"/><path class="a" d="M401,603.1l7,4.6l1.3-5.2l-7-4.6z"/><path class="a" d="M408,607.7l6.9,3l1.2-5.2l-6.8-3z"/><path class="a" d="M414.9,610.7l6.7,1.4l1.2-5.1l-6.7-1.5z"/><path class="a" d="M421.6,612.1l6.7-.1l1.1-5.2l-6.6,.2z"/><path class="a" d="M428.3,612l6.7-1.7l1.1-5.2l-6.7,1.7z"/><path class="a" d="M435,610.3l6.7-3.3l1-5.2l-6.6,3.3z"/><path class="b" d="M441.7,607l6.8-5l1-5.3l-6.8,5.1z"/><path class="b" d="M448.5,602l6.9-6.8l1.1-5.3l-7,6.8z"/><path class="b" d="M455.4,595.2l7.2-8.8l1-5.3l-7.1,8.8z"/><path class="c" d="M462.6,586.4l7.4-10.8l1-5.4l-7.4,10.9z"/><path class="c" d="M470,575.6l7.8-13.2l1-5.5l-7.8,13.3z"/><path class="c" d="M477.8,562.4l8.3-15.9l.9-5.5l-8.2,15.9z"/><path d="M486.1,546.5l8.8-18.8l.9-5.6l-8.8,18.9z"/><path d="M494.9,527.7l9.6-22.3l.9-5.6l-9.6,22.3z"/><path d="M504.5,505.4l10.4-26.4l.8-5.7l-10.3,26.5z"/><path d="M514.9,479l11.5-31.2l.8-5.7l-11.5,31.2z"/><path d="M526.4,447.8l12.8-37.1l.8-5.7l-12.8,37.1z"/><path d="M539.2,410.7l14.6-44.3l.7-5.6l-14.5,44.2z"/><path d="M553.8,366.4l16.8-53.3l.6-5.6l-16.7,53.3z"/><path d="M570.6,313.1l19.7-65.1l.5-5.4l-19.6,64.9z"/><path d="M590.3,248l23.6-80.5l.2-5.1l-23.3,80.2z"/><path d="M613.9,167.5l28.9-101.6l0-4.4l-28.7,100.9z"/><path class="a" d="M144.7,41.5l34.9,93.8l4.1-4.3l-34.3-93.2z"/><path class="a" d="M179.6,135.3l29.1,76.8l3.6-4.6l-28.6-76.5z"/><path class="a" d="M208.7,212.1l24.8,63.9l3.1-4.8l-24.3-63.7z"/><path class="a" d="M233.5,276l21.2,53.8l2.9-5l-21-53.6z"/><path class="a" d="M254.7,329.8l18.6,45.7l2.6-5.1l-18.3-45.6z"/><path class="a" d="M273.3,375.5l16.4,39l2.4-5.1l-16.2-39z"/><path class="a" d="M289.7,414.5l14.6,33.6l2.2-5.2l-14.4-33.5z"/><path class="a" d="M304.3,448.1l13.2,29l2-5.2l-13-29z"/><path class="b" d="M317.5,477.1l11.9,25.1l1.9-5.2l-11.8-25.1z"/><path class="b" d="M329.4,502.2l11,21.7l1.8-5.2l-10.9-21.7z"/><path class="a" d="M340.4,523.9l10.1,18.7l1.7-5.2l-10-18.7z"/><path class="a" d="M350.5,542.6l9.4,16.2l1.6-5.2l-9.3-16.2z"/><path class="a" d="M359.9,558.8l8.8,13.8l1.5-5.2l-8.7-13.8z"/><path class="a" d="M368.7,572.6l8.3,11.7l1.5-5.2l-8.3-11.7z"/><path class="a" d="M377,584.3l7.9,9.7l1.4-5.1l-7.8-9.8z"/><path class="a" d="M384.9,594l7.6,8l1.3-5.2l-7.5-7.9z"/><path class="a" d="M392.5,602l7.2,6.2l1.3-5.1l-7.2-6.3z"/><path class="a" d="M399.7,608.2l7.1,4.6l1.2-5.1l-7-4.6z"/><path class="a" d="M406.8,612.8l6.9,3.1l1.2-5.2l-6.9-3z"/><path class="a" d="M413.7,615.9l6.7,1.4l1.2-5.2l-6.7-1.4z"/><path class="a" d="M420.4,617.3l6.8,0l1.1-5.3l-6.7,.1z"/><path class="a" d="M427.2,617.3l6.7-1.7l1.1-5.3l-6.7,1.7z"/><path class="a" d="M433.9,615.6l6.7-3.3l1.1-5.3l-6.7,3.3z"/><path class="b" d="M440.6,612.3l6.8-5l1.1-5.3l-6.8,5z"/><path class="b" d="M447.4,607.3l7-6.7l1-5.4l-6.9,6.8z"/><path class="b" d="M454.4,600.6l7.2-8.7l1-5.5l-7.2,8.8z"/><path class="c" d="M461.6,591.9l7.4-10.9l1-5.4l-7.4,10.8z"/><path class="c" d="M469,581l7.9-13.1l.9-5.5l-7.8,13.2z"/><path class="c" d="M476.9,567.9l8.3-15.8l.9-5.6l-8.3,15.9z"/><path d="M485.2,552.1l8.8-18.8l.9-5.6l-8.8,18.8z"/><path d="M494,533.3l9.6-22.2l.9-5.7l-9.6,22.3z"/><path d="M503.6,511.1l10.4-26.4l.9-5.7l-10.4,26.4z"/><path d="M514,484.7l11.6-31.1l.8-5.8l-11.5,31.2z"/><path d="M525.6,453.6l12.9-37.1l.7-5.8l-12.8,37.1z"/><path d="M538.5,416.5l14.6-44.3l.7-5.8l-14.6,44.3z"/><path d="M553.1,372.2l16.9-53.4l.6-5.7l-16.8,53.3z"/><path d="M570,318.8l19.9-65.3l.4-5.5l-19.7,65.1z"/><path d="M589.9,253.5l23.8-80.8l.2-5.2l-23.6,80.5z"/><path d="M613.7,172.7l29.2-102.2l-.1-4.6l-28.9,101.6z"/><path class="a" d="M139.9,45.3l35.6,94.3l4.1-4.3l-34.9-93.8z"/><path class="a" d="M175.5,139.6l29.6,77.2l3.6-4.7l-29.1-76.8z"/><path class="a" d="M205.1,216.8l25.2,64.2l3.2-5l-24.8-63.9z"/><path class="a" d="M230.3,281l21.6,53.9l2.8-5.1l-21.2-53.8z"/><path class="a" d="M251.9,334.9l18.8,45.7l2.6-5.1l-18.6-45.7z"/><path class="a" d="M270.7,380.6l16.6,39.1l2.4-5.2l-16.4-39z"/><path class="a" d="M287.3,419.7l14.8,33.6l2.2-5.2l-14.6-33.6z"/><path class="a" d="M302.1,453.3l13.3,29l2.1-5.2l-13.2-29z"/><path class="a" d="M315.4,482.3l12.1,25.1l1.9-5.2l-11.9-25.1z"/><path class="a" d="M327.5,507.4l11.1,21.7l1.8-5.2l-11-21.7z"/><path class="a" d="M338.6,529.1l10.2,18.8l1.7-5.3l-10.1-18.7z"/><path class="a" d="M348.8,547.9l9.5,16.1l1.6-5.2l-9.4-16.2z"/><path class="a" d="M358.3,564l8.9,13.8l1.5-5.2l-8.8-13.8z"/><path class="a" d="M367.2,577.8l8.4,11.7l1.4-5.2l-8.3-11.7z"/><path class="a" d="M375.6,589.5l7.9,9.8l1.4-5.3l-7.9-9.7z"/><path class="a" d="M383.5,599.3l7.6,7.9l1.4-5.2l-7.6-8z"/><path class="a" d="M391.1,607.2l7.3,6.3l1.3-5.3l-7.2-6.2z"/><path class="a" d="M398.4,613.5l7.1,4.6l1.3-5.3l-7.1-4.6z"/><path class="a" d="M405.5,618.1l6.9,3l1.3-5.2l-6.9-3.1z"/><path class="a" d="M412.4,621.1l6.9,1.5l1.1-5.3l-6.7-1.4z"/><path class="a" d="M419.3,622.6l6.7-.1l1.2-5.2l-6.8,0z"/><path class="a" d="M426,622.5l6.7-1.6l1.2-5.3l-6.7,1.7z"/><path class="a" d="M432.7,620.9l6.8-3.2l1.1-5.4l-6.7,3.3z"/><path class="b" d="M439.5,617.7l6.8-5l1.1-5.4l-6.8,5z"/><path class="b" d="M446.3,612.7l7-6.7l1.1-5.4l-7,6.7z"/><path class="b" d="M453.3,606l7.3-8.7l1-5.4l-7.2,8.7z"/><path class="c" d="M460.6,597.3l7.4-10.7l1-5.6l-7.4,10.9z"/><path class="c" d="M468,586.6l7.9-13.1l1-5.6l-7.9,13.1z"/><path class="c" d="M475.9,573.5l8.3-15.8l1-5.6l-8.3,15.8z"/><path d="M484.2,557.7l8.9-18.7l.9-5.7l-8.8,18.8z"/><path d="M493.1,539l9.6-22.2l.9-5.7l-9.6,22.2z"/><path d="M502.7,516.8l10.5-26.2l.8-5.9l-10.4,26.4z"/><path d="M513.2,490.6l11.6-31.2l.8-5.8l-11.6,31.1z"/><path d="M524.8,459.4l12.9-37l.8-5.9l-12.9,37.1z"/><path d="M537.7,422.4l14.8-44.3l.6-5.9l-14.6,44.3z"/><path d="M552.5,378.1l17-53.6l.5-5.7l-16.9,53.4z"/><path d="M569.5,324.5l20-65.4l.4-5.6l-19.9,65.3z"/><path d="M589.5,259.1l23.9-81.2l.3-5.2l-23.8,80.8z"/><path d="M613.4,177.9l29.6-102.7l-.1-4.7l-29.2,102.2z"/><path class="a" d="M135,49.1l36.3,94.9l4.2-4.4l-35.6-94.3z"/><path class="a" d="M171.3,144l30.2,77.6l3.6-4.8l-29.6-77.2z"/><path class="a" d="M201.5,221.6l25.5,64.4l3.3-5l-25.2-64.2z"/><path class="a" d="M227,286l22,54l2.9-5.1l-21.6-53.9z"/><path class="a" d="M249,340l19.1,45.8l2.6-5.2l-18.8-45.7z"/><path class="a" d="M268.1,385.8l16.8,39.2l2.4-5.3l-16.6-39.1z"/><path class="a" d="M284.9,425l15,33.6l2.2-5.3l-14.8-33.6z"/><path class="a" d="M299.9,458.6l13.5,29.1l2-5.4l-13.3-29z"/><path class="a" d="M313.4,487.7l12.2,25l1.9-5.3l-12.1-25.1z"/><path class="a" d="M325.6,512.7l11.2,21.7l1.8-5.3l-11.1-21.7z"/><path class="a" d="M336.8,534.4l10.3,18.8l1.7-5.3l-10.2-18.8z"/><path class="a" d="M347.1,553.2l9.6,16.1l1.6-5.3l-9.5-16.1z"/><path class="a" d="M356.7,569.3l8.9,13.8l1.6-5.3l-8.9-13.8z"/><path class="a" d="M365.6,583.1l8.5,11.7l1.5-5.3l-8.4-11.7z"/><path class="a" d="M374.1,594.8l8,9.8l1.4-5.3l-7.9-9.8z"/><path class="a" d="M382.1,604.6l7.6,7.9l1.4-5.3l-7.6-7.9z"/><path class="a" d="M389.7,612.5l7.4,6.3l1.3-5.3l-7.3-6.3z"/><path class="a" d="M397.1,618.8l7.1,4.6l1.3-5.3l-7.1-4.6z"/><path class="a" d="M404.2,623.4l7,3l1.2-5.3l-6.9-3z"/><path class="a" d="M411.2,626.4l6.9,1.5l1.2-5.3l-6.9-1.5z"/><path class="a" d="M418.1,627.9l6.7,0l1.2-5.4l-6.7,.1z"/><path class="a" d="M424.8,627.9l6.8-1.6l1.1-5.4l-6.7,1.6z"/><path class="a" d="M431.6,626.3l6.8-3.2l1.1-5.4l-6.8,3.2z"/><path class="b" d="M438.4,623.1l6.9-4.9l1-5.5l-6.8,5z"/><path class="b" d="M445.3,618.2l7-6.7l1-5.5l-7,6.7z"/><path class="b" d="M452.3,611.5l7.2-8.6l1.1-5.6l-7.3,8.7z"/><path class="c" d="M459.5,602.9l7.5-10.7l1-5.6l-7.4,10.7z"/><path class="c" d="M467,592.2l7.9-13.1l1-5.6l-7.9,13.1z"/><path class="c" d="M474.9,579.1l8.3-15.6l1-5.8l-8.3,15.8z"/><path class="c" d="M483.2,563.5l9-18.7l.9-5.8l-8.9,18.7z"/><path d="M492.2,544.8l9.6-22.1l.9-5.9l-9.6,22.2z"/><path d="M501.8,522.7l10.5-26.2l.9-5.9l-10.5,26.2z"/><path d="M512.3,496.5l11.6-31.1l.9-6l-11.6,31.2z"/><path d="M523.9,465.4l13.1-37l.7-6l-12.9,37z"/><path d="M537,428.4l14.8-44.4l.7-5.9l-14.8,44.3z"/><path d="M551.8,384l17.1-53.6l.6-5.9l-17,53.6z"/><path d="M568.9,330.4l20.1-65.6l.5-5.7l-20,65.4z"/><path d="M589,264.8l24.2-81.5l.2-5.4l-23.9,81.2z"/><path d="M613.2,183.3l29.9-103.4l-.1-4.7l-29.6,102.7z"/><path class="a" d="M130,53l37,95.5l4.3-4.5l-36.3-94.9z"/><path class="a" d="M167,148.5l30.8,77.9l3.7-4.8l-30.2-77.6z"/><path class="a" d="M197.8,226.4l25.9,64.6l3.3-5l-25.5-64.4z"/><path class="a" d="M223.7,291l22.3,54.2l3-5.2l-22-54z"/><path class="a" d="M246,345.2l19.4,45.9l2.7-5.3l-19.1-45.8z"/><path class="a" d="M265.4,391.1l17.1,39.3l2.4-5.4l-16.8-39.2z"/><path class="a" d="M282.5,430.4l15.1,33.6l2.3-5.4l-15-33.6z"/><path class="a" d="M297.6,464l13.7,29l2.1-5.3l-13.5-29.1z"/><path class="a" d="M311.3,493l12.3,25.1l2-5.4l-12.2-25z"/><path class="a" d="M323.6,518.1l11.4,21.7l1.8-5.4l-11.2-21.7z"/><path class="a" d="M335,539.8l10.4,18.8l1.7-5.4l-10.3-18.8z"/><path class="a" d="M345.4,558.6l9.6,16.1l1.7-5.4l-9.6-16.1z"/><path class="a" d="M355,574.7l9.1,13.8l1.5-5.4l-8.9-13.8z"/><path class="a" d="M364.1,588.5l8.5,11.7l1.5-5.4l-8.5-11.7z"/><path class="a" d="M372.6,600.2l8.1,9.7l1.4-5.3l-8-9.8z"/><path class="a" d="M380.7,609.9l7.7,7.9l1.3-5.3l-7.6-7.9z"/><path class="a" d="M388.4,617.8l7.4,6.3l1.3-5.3l-7.4-6.3z"/><path class="a" d="M395.8,624.1l7.2,4.6l1.2-5.3l-7.1-4.6z"/><path class="a" d="M403,628.7l7,3.1l1.2-5.4l-7-3z"/><path class="a" d="M410,631.8l6.8,1.5l1.3-5.4l-6.9-1.5z"/><path class="a" d="M416.8,633.3l6.9,0l1.1-5.4l-6.7,0z"/><path class="a" d="M423.7,633.3l6.7-1.6l1.2-5.4l-6.8,1.6z"/><path class="a" d="M430.4,631.7l6.9-3.1l1.1-5.5l-6.8,3.2z"/><path class="b" d="M437.3,628.6l6.9-4.9l1.1-5.5l-6.9,4.9z"/><path class="b" d="M444.2,623.7l7-6.6l1.1-5.6l-7,6.7z"/><path class="b" d="M451.2,617.1l7.3-8.6l1-5.6l-7.2,8.6z"/><path class="b" d="M458.5,608.5l7.5-10.6l1-5.7l-7.5,10.7z"/><path class="c" d="M466,597.9l7.9-13l1-5.8l-7.9,13.1z"/><path class="c" d="M473.9,584.9l8.4-15.6l.9-5.8l-8.3,15.6z"/><path class="c" d="M482.3,569.3l8.9-18.6l1-5.9l-9,18.7z"/><path d="M491.2,550.7l9.7-22.1l.9-5.9l-9.6,22.1z"/><path d="M500.9,528.6l10.5-26.2l.9-5.9l-10.5,26.2z"/><path d="M511.4,502.4l11.7-31l.8-6l-11.6,31.1z"/><path d="M523.1,471.4l13.1-37l.8-6l-13.1,37z"/><path d="M536.2,434.4l14.9-44.3l.7-6.1l-14.8,44.4z"/><path d="M551.1,390.1l17.2-53.7l.6-6l-17.1,53.6z"/><path d="M568.3,336.4l20.2-65.7l.5-5.9l-20.1,65.6z"/><path d="M588.5,270.7l24.5-81.9l.2-5.5l-24.2,81.5z"/><path d="M613,188.8l30.1-104l0-4.9l-29.9,103.4z"/><path class="a" d="M124.9,57l37.8,96.1l4.3-4.6l-37-95.5z"/><path class="a" d="M162.7,153.1l31.3,78.3l3.8-5l-30.8-77.9z"/><path class="a" d="M194,231.4l26.4,64.8l3.3-5.2l-25.9-64.6z"/><path class="a" d="M220.4,296.2l22.6,54.3l3-5.3l-22.3-54.2z"/><path class="a" d="M243,350.5l19.7,46l2.7-5.4l-19.4-45.9z"/><path class="a" d="M262.7,396.5l17.3,39.3l2.5-5.4l-17.1-39.3z"/><path class="a" d="M280,435.8l15.4,33.7l2.2-5.5l-15.1-33.6z"/><path class="a" d="M295.4,469.5l13.8,29l2.1-5.5l-13.7-29z"/><path class="a" d="M309.2,498.5l12.5,25.1l1.9-5.5l-12.3-25.1z"/><path class="a" d="M321.7,523.6l11.4,21.7l1.9-5.5l-11.4-21.7z"/><path class="a" d="M333.1,545.3l10.5,18.7l1.8-5.4l-10.4-18.8z"/><path class="a" d="M343.6,564l9.8,16.1l1.6-5.4l-9.6-16.1z"/><path class="a" d="M353.4,580.1l9.1,13.8l1.6-5.4l-9.1-13.8z"/><path class="a" d="M362.5,593.9l8.6,11.7l1.5-5.4l-8.5-11.7z"/><path class="a" d="M371.1,605.6l8.1,9.7l1.5-5.4l-8.1-9.7z"/><path class="a" d="M379.2,615.3l7.8,7.9l1.4-5.4l-7.7-7.9z"/><path class="a" d="M387,623.2l7.4,6.3l1.4-5.4l-7.4-6.3z"/><path class="a" d="M394.4,629.5l7.3,4.7l1.3-5.5l-7.2-4.6z"/><path class="a" d="M401.7,634.2l7,3l1.3-5.4l-7-3.1z"/><path class="a" d="M408.7,637.2l6.9,1.6l1.2-5.5l-6.8-1.5z"/><path class="a" d="M415.6,638.8l6.9,0l1.2-5.5l-6.9,0z"/><path class="a" d="M422.5,638.8l6.8-1.6l1.1-5.5l-6.7,1.6z"/><path class="a" d="M429.3,637.2l6.8-3.1l1.2-5.5l-6.9,3.1z"/><path class="b" d="M436.1,634.1l7-4.8l1.1-5.6l-6.9,4.9z"/><path class="b" d="M443.1,629.3l7-6.6l1.1-5.6l-7,6.6z"/><path class="b" d="M450.1,622.7l7.3-8.5l1.1-5.7l-7.3,8.6z"/><path class="b" d="M457.4,614.2l7.6-10.6l1-5.7l-7.5,10.6z"/><path class="c" d="M465,603.6l7.9-12.9l1-5.8l-7.9,13z"/><path class="c" d="M472.9,590.7l8.4-15.6l1-5.8l-8.4,15.6z"/><path class="c" d="M481.3,575.1l8.9-18.5l1-5.9l-8.9,18.6z"/><path d="M490.2,556.6l9.7-22l1-6l-9.7,22.1z"/><path d="M499.9,534.6l10.6-26.1l.9-6.1l-10.5,26.2z"/><path d="M510.5,508.5l11.7-31l.9-6.1l-11.7,31z"/><path d="M522.2,477.5l13.2-36.9l.8-6.2l-13.1,37z"/><path d="M535.4,440.6l14.9-44.3l.8-6.2l-14.9,44.3z"/><path d="M550.3,396.3l17.4-53.8l.6-6.1l-17.2,53.7z"/><path d="M567.7,342.5l20.4-65.9l.4-5.9l-20.2,65.7z"/><path d="M588.1,276.6l24.6-82.1l.3-5.7l-24.5,81.9z"/><path d="M612.7,194.5l30.5-104.7l-.1-5l-30.1,104z"/><path class="a" d="M119.7,61.1l38.5,96.6l4.5-4.6l-37.8-96.1z"/><path class="a" d="M158.2,157.7l31.9,78.7l3.9-5l-31.3-78.3z"/><path class="a" d="M190.1,236.4l26.9,65l3.4-5.2l-26.4-64.8z"/><path class="a" d="M217,301.4l23,54.5l3-5.4l-22.6-54.3z"/><path class="a" d="M240,355.9l19.9,46.1l2.8-5.5l-19.7-46z"/><path class="a" d="M259.9,402l17.6,39.3l2.5-5.5l-17.3-39.3z"/><path class="a" d="M277.5,441.3l15.5,33.7l2.4-5.5l-15.4-33.7z"/><path class="a" d="M293,475l14,29l2.2-5.5l-13.8-29z"/><path class="a" d="M307,504l12.7,25.1l2-5.5l-12.5-25.1z"/><path class="a" d="M319.7,529.1l11.5,21.7l1.9-5.5l-11.4-21.7z"/><path class="a" d="M331.2,550.8l10.6,18.7l1.8-5.5l-10.5-18.7z"/><path class="a" d="M341.8,569.5l9.9,16.1l1.7-5.5l-9.8-16.1z"/><path class="a" d="M351.7,585.6l9.2,13.8l1.6-5.5l-9.1-13.8z"/><path class="a" d="M360.9,599.4l8.6,11.6l1.6-5.4l-8.6-11.7z"/><path class="a" d="M369.5,611l8.2,9.8l1.5-5.5l-8.1-9.7z"/><path class="a" d="M377.7,620.8l7.9,7.9l1.4-5.5l-7.8-7.9z"/><path class="a" d="M385.6,628.7l7.5,6.3l1.3-5.5l-7.4-6.3z"/><path class="a" d="M393.1,635l7.2,4.6l1.4-5.4l-7.3-4.7z"/><path class="a" d="M400.3,639.6l7.1,3.1l1.3-5.5l-7-3z"/><path class="a" d="M407.4,642.7l7,1.6l1.2-5.5l-6.9-1.6z"/><path class="a" d="M414.4,644.3l6.9,0l1.2-5.5l-6.9,0z"/><path class="a" d="M421.3,644.3l6.8-1.5l1.2-5.6l-6.8,1.6z"/><path class="a" d="M428.1,642.8l6.9-3.1l1.1-5.6l-6.8,3.1z"/><path class="b" d="M435,639.7l6.9-4.8l1.2-5.6l-7,4.8z"/><path class="b" d="M441.9,634.9l7.1-6.5l1.1-5.7l-7,6.6z"/><path class="b" d="M449,628.4l7.3-8.5l1.1-5.7l-7.3,8.5z"/><path class="b" d="M456.3,619.9l7.6-10.5l1.1-5.8l-7.6,10.6z"/><path class="c" d="M463.9,609.4l8-12.9l1-5.8l-7.9,12.9z"/><path class="c" d="M471.9,596.5l8.4-15.4l1-6l-8.4,15.6z"/><path class="c" d="M480.3,581.1l9-18.5l.9-6l-8.9,18.5z"/><path class="c" d="M489.3,562.6l9.7-21.9l.9-6.1l-9.7,22z"/><path d="M499,540.7l10.6-26l.9-6.2l-10.6,26.1z"/><path d="M509.6,514.7l11.8-30.9l.8-6.3l-11.7,31z"/><path d="M521.4,483.8l13.2-36.9l.8-6.3l-13.2,36.9z"/><path d="M534.6,446.9l15-44.4l.7-6.2l-14.9,44.3z"/><path d="M549.6,402.5l17.4-53.8l.7-6.2l-17.4,53.8z"/><path d="M567,348.7l20.6-66l.5-6.1l-20.4,65.9z"/><path d="M587.6,282.7l24.9-82.5l.2-5.7l-24.6,82.1z"/><path d="M612.5,200.2l30.8-105.2l-.1-5.2l-30.5,104.7z"/><path d="M643.3,95l39.5-138.2l-.6-3.9l-39,136.9z"/><path class="a" d="M114.4,65.3l39.3,97.2l4.5-4.8l-38.5-96.6z"/><path class="a" d="M153.7,162.5l32.5,79l3.9-5.1l-31.9-78.7z"/><path class="a" d="M186.2,241.5l27.3,65.3l3.5-5.4l-26.9-65z"/><path class="a" d="M213.5,306.8l23.4,54.6l3.1-5.5l-23-54.5z"/><path class="a" d="M236.9,361.4l20.2,46.1l2.8-5.5l-19.9-46.1z"/><path class="a" d="M257.1,407.5l17.8,39.4l2.6-5.6l-17.6-39.3z"/><path class="a" d="M274.9,446.9l15.8,33.7l2.3-5.6l-15.5-33.7z"/><path class="a" d="M290.7,480.6l14.1,29l2.2-5.6l-14-29z"/><path class="a" d="M304.8,509.6l12.8,25.1l2.1-5.6l-12.7-25.1z"/><path class="a" d="M317.6,534.7l11.7,21.7l1.9-5.6l-11.5-21.7z"/><path class="a" d="M329.3,556.4l10.7,18.7l1.8-5.6l-10.6-18.7z"/><path class="a" d="M340,575.1l10,16l1.7-5.5l-9.9-16.1z"/><path class="a" d="M350,591.1l9.3,13.8l1.6-5.5l-9.2-13.8z"/><path class="a" d="M359.3,604.9l8.7,11.7l1.5-5.6l-8.6-11.6z"/><path class="a" d="M368,616.6l8.3,9.7l1.4-5.5l-8.2-9.8z"/><path class="a" d="M376.3,626.3l7.8,7.9l1.5-5.5l-7.9-7.9z"/><path class="a" d="M384.1,634.2l7.6,6.3l1.4-5.5l-7.5-6.3z"/><path class="a" d="M391.7,640.5l7.3,4.7l1.3-5.6l-7.2-4.6z"/><path class="a" d="M399,645.2l7.1,3.1l1.3-5.6l-7.1-3.1z"/><path class="a" d="M406.1,648.3l7,1.6l1.3-5.6l-7-1.6z"/><path class="a" d="M413.1,649.9l6.9,0l1.3-5.6l-6.9,0z"/><path class="a" d="M420,649.9l6.9-1.5l1.2-5.6l-6.8,1.5z"/><path class="a" d="M426.9,648.4l6.9-3l1.2-5.7l-6.9,3.1z"/><path class="a" d="M433.8,645.4l7-4.8l1.1-5.7l-6.9,4.8z"/><path class="b" d="M440.8,640.6l7.1-6.4l1.1-5.8l-7.1,6.5z"/><path class="b" d="M447.9,634.2l7.3-8.4l1.1-5.9l-7.3,8.5z"/><path class="b" d="M455.2,625.8l7.6-10.5l1.1-5.9l-7.6,10.5z"/><path class="c" d="M462.8,615.3l8-12.8l1.1-6l-8,12.9z"/><path class="c" d="M470.8,602.5l8.4-15.4l1.1-6l-8.4,15.4z"/><path class="c" d="M479.2,587.1l9.1-18.4l1-6.1l-9,18.5z"/><path d="M488.3,568.7l9.7-21.8l1-6.2l-9.7,21.9z"/><path d="M498,546.9l10.7-26l.9-6.2l-10.6,26z"/><path d="M508.7,520.9l11.8-30.8l.9-6.3l-11.8,30.9z"/><path d="M520.5,490.1l13.2-36.9l.9-6.3l-13.2,36.9z"/><path d="M533.7,453.2l15.2-44.3l.7-6.4l-15,44.4z"/><path d="M548.9,408.9l17.5-53.8l.6-6.4l-17.4,53.8z"/><path d="M566.4,355.1l20.7-66.2l.5-6.2l-20.6,66z"/><path d="M587.1,288.9l25.1-82.8l.3-5.9l-24.9,82.5z"/><path d="M612.2,206.1l31.2-105.9l-.1-5.2l-30.8,105.2z"/><path class="c" d="M643.4,100.2l40-139.3l-.6-4.1l-39.5,138.2z"/><path class="a" d="M109,69.5l40.1,97.8l4.6-4.8l-39.3-97.2z"/><path class="a" d="M149.1,167.3l33.1,79.4l4-5.2l-32.5-79z"/><path class="a" d="M182.2,246.7l27.8,65.5l3.5-5.4l-27.3-65.3z"/><path class="a" d="M210,312.2l23.7,54.7l3.2-5.5l-23.4-54.6z"/><path class="a" d="M233.7,366.9l20.6,46.3l2.8-5.7l-20.2-46.1z"/><path class="a" d="M254.3,413.2l18,39.3l2.6-5.6l-17.8-39.4z"/><path class="a" d="M272.3,452.5l16,33.8l2.4-5.7l-15.8-33.7z"/><path class="a" d="M288.3,486.3l14.3,29l2.2-5.7l-14.1-29z"/><path class="a" d="M302.6,515.3l13,25.1l2-5.7l-12.8-25.1z"/><path class="a" d="M315.6,540.4l11.8,21.6l1.9-5.6l-11.7-21.7z"/><path class="a" d="M327.4,562l10.8,18.7l1.8-5.6l-10.7-18.7z"/><path class="a" d="M338.2,580.7l10.1,16.1l1.7-5.7l-10-16z"/><path class="a" d="M348.3,596.8l9.3,13.7l1.7-5.6l-9.3-13.8z"/><path class="a" d="M357.6,610.5l8.8,11.7l1.6-5.6l-8.7-11.7z"/><path class="a" d="M366.4,622.2l8.4,9.7l1.5-5.6l-8.3-9.7z"/><path class="a" d="M374.8,631.9l7.9,7.9l1.4-5.6l-7.8-7.9z"/><path class="a" d="M382.7,639.8l7.6,6.3l1.4-5.6l-7.6-6.3z"/><path class="a" d="M390.3,646.1l7.4,4.7l1.3-5.6l-7.3-4.7z"/><path class="a" d="M397.7,650.8l7.1,3.1l1.3-5.6l-7.1-3.1z"/><path class="a" d="M404.8,653.9l7.1,1.6l1.2-5.6l-7-1.6z"/><path class="a" d="M411.9,655.5l6.9,.1l1.2-5.7l-6.9,0z"/><path class="a" d="M418.8,655.6l6.9-1.5l1.2-5.7l-6.9,1.5z"/><path class="a" d="M425.7,654.1l6.9-3l1.2-5.7l-6.9,3z"/><path class="a" d="M432.6,651.1l7-4.7l1.2-5.8l-7,4.8z"/><path class="b" d="M439.6,646.4l7.2-6.4l1.1-5.8l-7.1,6.4z"/><path class="b" d="M446.8,640l7.3-8.3l1.1-5.9l-7.3,8.4z"/><path class="b" d="M454.1,631.7l7.7-10.5l1-5.9l-7.6,10.5z"/><path class="c" d="M461.8,621.2l8-12.7l1-6l-8,12.8z"/><path class="c" d="M469.8,608.5l8.4-15.3l1-6.1l-8.4,15.4z"/><path class="c" d="M478.2,593.2l9.1-18.3l1-6.2l-9.1,18.4z"/><path class="c" d="M487.3,574.9l9.7-21.8l1-6.2l-9.7,21.8z"/><path d="M497,553.1l10.7-25.8l1-6.4l-10.7,26z"/><path d="M507.7,527.3l11.9-30.8l.9-6.4l-11.8,30.8z"/><path d="M519.6,496.5l13.3-36.8l.8-6.5l-13.2,36.9z"/><path d="M532.9,459.7l15.2-44.3l.8-6.5l-15.2,44.3z"/><path d="M548.1,415.4l17.6-53.9l.7-6.4l-17.5,53.8z"/><path d="M565.7,361.5l20.9-66.3l.5-6.3l-20.7,66.2z"/><path d="M586.6,295.2l25.3-83.1l.3-6l-25.1,82.8z"/><path d="M611.9,212.1l31.5-106.5l0-5.4l-31.2,105.9z"/><path class="c" d="M643.4,105.6l40.6-140.5l-.6-4.2l-40,139.3z"/><path class="a" d="M103.5,73.8l40.9,98.4l4.7-4.9l-40.1-97.8z"/><path class="a" d="M144.4,172.2l33.7,79.8l4.1-5.3l-33.1-79.4z"/><path class="a" d="M178.1,252l28.3,65.7l3.6-5.5l-27.8-65.5z"/><path class="a" d="M206.4,317.7l24.1,54.9l3.2-5.7l-23.7-54.7z"/><path class="a" d="M230.5,372.6l20.9,46.3l2.9-5.7l-20.6-46.3z"/><path class="a" d="M251.4,418.9l18.3,39.4l2.6-5.8l-18-39.3z"/><path class="a" d="M269.7,458.3l16.2,33.7l2.4-5.7l-16-33.8z"/><path class="a" d="M285.9,492l14.5,29.1l2.2-5.8l-14.3-29z"/><path class="a" d="M300.4,521.1l13.1,25l2.1-5.7l-13-25.1z"/><path class="a" d="M313.5,546.1l11.9,21.6l2-5.7l-11.8-21.6z"/><path class="a" d="M325.4,567.7l11,18.7l1.8-5.7l-10.8-18.7z"/><path class="a" d="M336.4,586.4l10.1,16.1l1.8-5.7l-10.1-16.1z"/><path class="a" d="M346.5,602.5l9.5,13.7l1.6-5.7l-9.3-13.7z"/><path class="a" d="M356,616.2l8.8,11.6l1.6-5.6l-8.8-11.7z"/><path class="a" d="M364.8,627.8l8.4,9.7l1.6-5.6l-8.4-9.7z"/><path class="a" d="M373.2,637.5l8,8l1.5-5.7l-7.9-7.9z"/><path class="a" d="M381.2,645.5l7.7,6.3l1.4-5.7l-7.6-6.3z"/><path class="a" d="M388.9,651.8l7.4,4.6l1.4-5.6l-7.4-4.7z"/><path class="a" d="M396.3,656.4l7.2,3.2l1.3-5.7l-7.1-3.1z"/><path class="a" d="M403.5,659.6l7.1,1.6l1.3-5.7l-7.1-1.6z"/><path class="a" d="M410.6,661.2l7,.1l1.2-5.7l-6.9-.1z"/><path class="a" d="M417.6,661.3l6.9-1.4l1.2-5.8l-6.9,1.5z"/><path class="a" d="M424.5,659.9l6.9-3l1.2-5.8l-6.9,3z"/><path class="a" d="M431.4,656.9l7.1-4.6l1.1-5.9l-7,4.7z"/><path class="b" d="M438.5,652.3l7.1-6.4l1.2-5.9l-7.2,6.4z"/><path class="b" d="M445.6,645.9l7.4-8.3l1.1-5.9l-7.3,8.3z"/><path class="b" d="M453,637.6l7.7-10.3l1.1-6.1l-7.7,10.5z"/><path class="c" d="M460.7,627.3l8-12.7l1.1-6.1l-8,12.7z"/><path class="c" d="M468.7,614.6l8.5-15.2l1-6.2l-8.4,15.3z"/><path class="c" d="M477.2,599.4l9-18.2l1.1-6.3l-9.1,18.3z"/><path class="c" d="M486.2,581.2l9.9-21.7l.9-6.4l-9.7,21.8z"/><path class="c" d="M496.1,559.5l10.7-25.8l.9-6.4l-10.7,25.8z"/><path d="M506.8,533.7l11.9-30.7l.9-6.5l-11.9,30.8z"/><path d="M518.7,503l13.4-36.8l.8-6.5l-13.3,36.8z"/><path d="M532.1,466.2l15.2-44.2l.8-6.6l-15.2,44.3z"/><path d="M547.3,422l17.8-53.9l.6-6.6l-17.6,53.9z"/><path d="M565.1,368.1l21-66.5l.5-6.4l-20.9,66.3z"/><path d="M586.1,301.6l25.6-83.4l.2-6.1l-25.3,83.1z"/><path class="c" d="M611.7,218.2l31.8-107.1l-.1-5.5l-31.5,106.5z"/><path class="c" d="M643.5,111.1l41.2-141.8l-.7-4.2l-40.6,140.5z"/><path class="a" d="M97.9,78.3l41.8,98.9l4.7-5l-40.9-98.4z"/><path class="a" d="M139.7,177.2l34.3,80.1l4.1-5.3l-33.7-79.8z"/><path class="a" d="M174,257.3l28.8,66l3.6-5.6l-28.3-65.7z"/><path class="a" d="M202.8,323.3l24.5,55l3.2-5.7l-24.1-54.9z"/><path class="a" d="M227.3,378.3l21.2,46.4l2.9-5.8l-20.9-46.3z"/><path class="a" d="M248.5,424.7l18.5,39.4l2.7-5.8l-18.3-39.4z"/><path class="a" d="M267,464.1l16.5,33.8l2.4-5.9l-16.2-33.7z"/><path class="a" d="M283.5,497.9l14.6,29l2.3-5.8l-14.5-29.1z"/><path class="a" d="M298.1,526.9l13.3,25l2.1-5.8l-13.1-25z"/><path class="a" d="M311.4,551.9l12,21.6l2-5.8l-11.9-21.6z"/><path class="a" d="M323.4,573.5l11.1,18.7l1.9-5.8l-11-18.7z"/><path class="a" d="M334.5,592.2l10.3,16l1.7-5.7l-10.1-16.1z"/><path class="a" d="M344.8,608.2l9.5,13.7l1.7-5.7l-9.5-13.7z"/><path class="a" d="M354.3,621.9l8.9,11.7l1.6-5.8l-8.8-11.6z"/><path class="a" d="M363.2,633.6l8.5,9.7l1.5-5.8l-8.4-9.7z"/><path class="a" d="M371.7,643.3l8.1,7.9l1.4-5.7l-8-8z"/><path class="a" d="M379.8,651.2l7.7,6.3l1.4-5.7l-7.7-6.3z"/><path class="a" d="M387.5,657.5l7.4,4.7l1.4-5.8l-7.4-4.6z"/><path class="a" d="M394.9,662.2l7.3,3.1l1.3-5.7l-7.2-3.2z"/><path class="a" d="M402.2,665.3l7.1,1.7l1.3-5.8l-7.1-1.6z"/><path class="a" d="M409.3,667l7,.1l1.3-5.8l-7-.1z"/><path class="a" d="M416.3,667.1l7-1.4l1.2-5.8l-6.9,1.4z"/><path class="a" d="M423.3,665.7l6.9-2.9l1.2-5.9l-6.9,3z"/><path class="a" d="M430.2,662.8l7.1-4.6l1.2-5.9l-7.1,4.6z"/><path class="b" d="M437.3,658.2l7.2-6.3l1.1-6l-7.1,6.4z"/><path class="b" d="M444.5,651.9l7.4-8.3l1.1-6l-7.4,8.3z"/><path class="b" d="M451.9,643.6l7.7-10.2l1.1-6.1l-7.7,10.3z"/><path class="c" d="M459.6,633.4l8-12.6l1.1-6.2l-8,12.7z"/><path class="c" d="M467.6,620.8l8.5-15.2l1.1-6.2l-8.5,15.2z"/><path class="c" d="M476.1,605.6l9.1-18.1l1-6.3l-9,18.2z"/><path class="c" d="M485.2,587.5l9.9-21.6l1-6.4l-9.9,21.7z"/><path d="M495.1,565.9l10.7-25.7l1-6.5l-10.7,25.8z"/><path d="M505.8,540.2l12-30.6l.9-6.6l-11.9,30.7z"/><path d="M517.8,509.6l13.4-36.7l.9-6.7l-13.4,36.8z"/><path d="M531.2,472.9l15.4-44.2l.7-6.7l-15.2,44.2z"/><path d="M546.6,428.7l17.8-53.9l.7-6.7l-17.8,53.9z"/><path d="M564.4,374.8l21.2-66.6l.5-6.6l-21,66.5z"/><path d="M585.6,308.2l25.8-83.7l.3-6.3l-25.6,83.4z"/><path class="c" d="M611.4,224.5l32.2-107.8l-.1-5.6l-31.8,107.1z"/><path class="c" d="M643.6,116.7l41.8-143l-.7-4.4l-41.2,141.8z"/><path class="a" d="M92.1,82.8l42.7,99.6l4.9-5.2l-41.8-98.9z"/><path class="a" d="M134.8,182.4l35,80.4l4.2-5.5l-34.3-80.1z"/><path class="a" d="M169.8,262.8l29.3,66.2l3.7-5.7l-28.8-66z"/><path class="a" d="M199.1,329l24.9,55.1l3.3-5.8l-24.5-55z"/><path class="a" d="M224,384.1l21.5,46.4l3-5.8l-21.2-46.4z"/><path class="a" d="M245.5,430.5l18.8,39.5l2.7-5.9l-18.5-39.4z"/><path class="a" d="M264.3,470l16.7,33.8l2.5-5.9l-16.5-33.8z"/><path class="a" d="M281,503.8l14.8,29l2.3-5.9l-14.6-29z"/><path class="a" d="M295.8,532.8l13.4,25l2.2-5.9l-13.3-25z"/><path class="a" d="M309.2,557.8l12.2,21.6l2-5.9l-12-21.6z"/><path class="a" d="M321.4,579.4l11.2,18.6l1.9-5.8l-11.1-18.7z"/><path class="a" d="M332.6,598l10.4,16l1.8-5.8l-10.3-16z"/><path class="a" d="M343,614l9.6,13.7l1.7-5.8l-9.5-13.7z"/><path class="a" d="M352.6,627.7l9,11.7l1.6-5.8l-8.9-11.7z"/><path class="a" d="M361.6,639.4l8.6,9.7l1.5-5.8l-8.5-9.7z"/><path class="a" d="M370.2,649.1l8.1,7.9l1.5-5.8l-8.1-7.9z"/><path class="a" d="M378.3,657l7.7,6.3l1.5-5.8l-7.7-6.3z"/><path class="a" d="M386,663.3l7.5,4.7l1.4-5.8l-7.4-4.7z"/><path class="a" d="M393.5,668l7.3,3.1l1.4-5.8l-7.3-3.1z"/><path class="a" d="M400.8,671.1l7.2,1.7l1.3-5.8l-7.1-1.7z"/><path class="a" d="M408,672.8l7,.2l1.3-5.9l-7-.1z"/><path class="a" d="M415,673l7-1.4l1.3-5.9l-7,1.4z"/><path class="a" d="M422,671.6l7-2.9l1.2-5.9l-6.9,2.9z"/><path class="a" d="M429,668.7l7.1-4.5l1.2-6l-7.1,4.6z"/><path class="b" d="M436.1,664.2l7.2-6.3l1.2-6l-7.2,6.3z"/><path class="b" d="M443.3,657.9l7.4-8.1l1.2-6.2l-7.4,8.3z"/><path class="b" d="M450.7,649.8l7.7-10.2l1.2-6.2l-7.7,10.2z"/><path class="b" d="M458.4,639.6l8.1-12.5l1.1-6.3l-8,12.6z"/><path class="c" d="M466.5,627.1l8.5-15.1l1.1-6.4l-8.5,15.2z"/><path class="c" d="M475,612l9.2-18l1-6.5l-9.1,18.1z"/><path class="c" d="M484.2,594l9.8-21.5l1.1-6.6l-9.9,21.6z"/><path class="c" d="M494,572.5l10.8-25.6l1-6.7l-10.7,25.7z"/><path d="M504.8,546.9l12-30.6l1-6.7l-12,30.6z"/><path d="M516.8,516.3l13.5-36.6l.9-6.8l-13.4,36.7z"/><path d="M530.3,479.7l15.5-44.2l.8-6.8l-15.4,44.2z"/><path d="M545.8,435.5l17.9-53.9l.7-6.8l-17.8,53.9z"/><path d="M563.7,381.6l21.4-66.7l.5-6.7l-21.2,66.6z"/><path d="M585.1,314.9l26-84l.3-6.4l-25.8,83.7z"/><path class="c" d="M611.1,230.9l32.6-108.4l-.1-5.8l-32.2,107.8z"/><path class="c" d="M643.7,122.5l42.3-144.2l-.6-4.6l-41.8,143z"/><path class="a" d="M86.2,87.4l43.6,100.2l5-5.2l-42.7-99.6z"/><path class="a" d="M129.8,187.6l35.7,80.8l4.3-5.6l-35-80.4z"/><path class="a" d="M165.5,268.4l29.8,66.4l3.8-5.8l-29.3-66.2z"/><path class="a" d="M195.3,334.8l25.3,55.2l3.4-5.9l-24.9-55.1z"/><path class="a" d="M220.6,390l21.9,46.5l3-6l-21.5-46.4z"/><path class="a" d="M242.5,436.5l19.1,39.5l2.7-6l-18.8-39.5z"/><path class="a" d="M261.6,476l16.9,33.8l2.5-6l-16.7-33.8z"/><path class="a" d="M278.5,509.8l15,29l2.3-6l-14.8-29z"/><path class="a" d="M293.5,538.8l13.6,25l2.1-6l-13.4-25z"/><path class="a" d="M307.1,563.8l12.3,21.5l2-5.9l-12.2-21.6z"/><path class="a" d="M319.4,585.3l11.3,18.6l1.9-5.9l-11.2-18.6z"/><path class="a" d="M330.7,603.9l10.5,16l1.8-5.9l-10.4-16z"/><path class="a" d="M341.2,619.9l9.7,13.7l1.7-5.9l-9.6-13.7z"/><path class="a" d="M350.9,633.6l9.1,11.6l1.6-5.8l-9-11.7z"/><path class="a" d="M360,645.2l8.6,9.7l1.6-5.8l-8.6-9.7z"/><path class="a" d="M368.6,654.9l8.2,7.9l1.5-5.8l-8.1-7.9z"/><path class="a" d="M376.8,662.8l7.8,6.3l1.4-5.8l-7.7-6.3z"/><path class="a" d="M384.6,669.1l7.5,4.7l1.4-5.8l-7.5-4.7z"/><path class="a" d="M392.1,673.8l7.4,3.2l1.3-5.9l-7.3-3.1z"/><path class="a" d="M399.5,677l7.1,1.7l1.4-5.9l-7.2-1.7z"/><path class="a" d="M406.6,678.7l7.1,.2l1.3-5.9l-7-.2z"/><path class="a" d="M413.7,678.9l7.1-1.3l1.2-6l-7,1.4z"/><path class="a" d="M420.8,677.6l7-2.9l1.2-6l-7,2.9z"/><path class="a" d="M427.8,674.7l7.1-4.5l1.2-6l-7.1,4.5z"/><path class="b" d="M434.9,670.2l7.2-6.2l1.2-6.1l-7.2,6.3z"/><path class="b" d="M442.1,664l7.5-8.1l1.1-6.1l-7.4,8.1z"/><path class="b" d="M449.6,655.9l7.7-10.1l1.1-6.2l-7.7,10.2z"/><path class="b" d="M457.3,645.8l8.1-12.4l1.1-6.3l-8.1,12.5z"/><path class="c" d="M465.4,633.4l8.6-15l1-6.4l-8.5,15.1z"/><path class="c" d="M474,618.4l9.1-17.9l1.1-6.5l-9.2,18z"/><path class="c" d="M483.1,600.5l9.9-21.4l1-6.6l-9.8,21.5z"/><path class="c" d="M493,579.1l10.8-25.5l1-6.7l-10.8,25.6z"/><path d="M503.8,553.6l12.1-30.5l.9-6.8l-12,30.6z"/><path d="M515.9,523.1l13.5-36.5l.9-6.9l-13.5,36.6z"/><path d="M529.4,486.6l15.5-44.1l.9-7l-15.5,44.2z"/><path d="M544.9,442.5l18.1-54l.7-6.9l-17.9,53.9z"/><path d="M563,388.5l21.5-66.8l.6-6.8l-21.4,66.7z"/><path d="M584.5,321.7l26.3-84.3l.3-6.5l-26,84z"/><path class="c" d="M610.8,237.4l33-109l-.1-5.9l-32.6,108.4z"/><path class="c" d="M643.8,128.4l43-145.5l-.8-4.6l-42.3,144.2z"/><path class="a" d="M24.4-35.9l55.8,128l6-4.7l-54.5-127z"/><path class="a" d="M80.2,92.1l44.5,100.8l5.1-5.3l-43.6-100.2z"/><path class="a" d="M124.7,192.9l36.4,81.2l4.4-5.7l-35.7-80.8z"/><path class="a" d="M161.1,274.1l30.4,66.6l3.8-5.9l-29.8-66.4z"/><path class="a" d="M191.5,340.7l25.7,55.3l3.4-6l-25.3-55.2z"/><path class="a" d="M217.2,396l22.2,46.6l3.1-6.1l-21.9-46.5z"/><path class="a" d="M239.4,442.6l19.4,39.5l2.8-6.1l-19.1-39.5z"/><path class="a" d="M258.8,482.1l17.1,33.8l2.6-6.1l-16.9-33.8z"/><path class="a" d="M275.9,515.9l15.3,28.9l2.3-6l-15-29z"/><path class="a" d="M291.2,544.8l13.7,25l2.2-6l-13.6-25z"/><path class="a" d="M304.9,569.8l12.5,21.6l2-6.1l-12.3-21.5z"/><path class="a" d="M317.4,591.4l11.4,18.5l1.9-6l-11.3-18.6z"/><path class="a" d="M328.8,609.9l10.5,16l1.9-6l-10.5-16z"/><path class="a" d="M339.3,625.9l9.8,13.7l1.8-6l-9.7-13.7z"/><path class="a" d="M349.1,639.6l9.2,11.6l1.7-6l-9.1-11.6z"/><path class="a" d="M358.3,651.2l8.7,9.6l1.6-5.9l-8.6-9.7z"/><path class="a" d="M367,660.8l8.2,8l1.6-6l-8.2-7.9z"/><path class="a" d="M375.2,668.8l7.9,6.2l1.5-5.9l-7.8-6.3z"/><path class="a" d="M383.1,675l7.6,4.8l1.4-6l-7.5-4.7z"/><path class="a" d="M390.7,679.8l7.4,3.1l1.4-5.9l-7.4-3.2z"/><path class="a" d="M398.1,682.9l7.2,1.8l1.3-6l-7.1-1.7z"/><path class="a" d="M405.3,684.7l7.1,.2l1.3-6l-7.1-.2z"/><path class="a" d="M412.4,684.9l7.1-1.3l1.3-6l-7.1,1.3z"/><path class="a" d="M419.5,683.6l7-2.8l1.3-6.1l-7,2.9z"/><path class="a" d="M426.5,680.8l7.2-4.4l1.2-6.2l-7.1,4.5z"/><path class="b" d="M433.7,676.4l7.3-6.2l1.1-6.2l-7.2,6.2z"/><path class="b" d="M441,670.2l7.4-8l1.2-6.3l-7.5,8.1z"/><path class="b" d="M448.4,662.2l7.8-10l1.1-6.4l-7.7,10.1z"/><path class="b" d="M456.2,652.2l8.1-12.4l1.1-6.4l-8.1,12.4z"/><path class="c" d="M464.3,639.8l8.5-14.8l1.2-6.6l-8.6,15z"/><path class="c" d="M472.8,625l9.2-17.9l1.1-6.6l-9.1,17.9z"/><path class="c" d="M482,607.1l10-21.3l1-6.7l-9.9,21.4z"/><path class="c" d="M492,585.8l10.8-25.4l1-6.8l-10.8,25.5z"/><path class="c" d="M502.8,560.4l12.1-30.3l1-7l-12.1,30.5z"/><path d="M514.9,530.1l13.6-36.5l.9-7l-13.5,36.5z"/><path d="M528.5,493.6l15.6-44.1l.8-7l-15.5,44.1z"/><path d="M544.1,449.5l18.2-53.9l.7-7.1l-18.1,54z"/><path d="M562.3,395.6l21.7-66.9l.5-7l-21.5,66.8z"/><path class="c" d="M584,328.7l26.5-84.6l.3-6.7l-26.3,84.3z"/><path class="c" d="M610.5,244.1l33.4-109.6l-.1-6.1l-33,109z"/><path class="c" d="M643.9,134.5l43.6-146.8l-.7-4.8l-43,145.5z"/><path class="a" d="M16.9-32.1l57.2,129l6.1-4.8l-55.8-128z"/><path class="a" d="M74.1,96.9l45.5,101.4l5.1-5.4l-44.5-100.8z"/><path class="a" d="M119.6,198.3l37.1,81.6l4.4-5.8l-36.4-81.2z"/><path class="a" d="M156.7,279.9l30.9,66.8l3.9-6l-30.4-66.6z"/><path class="a" d="M187.6,346.7l26.2,55.4l3.4-6.1l-25.7-55.3z"/><path class="a" d="M213.8,402.1l22.5,46.7l3.1-6.2l-22.2-46.6z"/><path class="a" d="M236.3,448.8l19.7,39.5l2.8-6.2l-19.4-39.5z"/><path class="a" d="M256,488.3l17.3,33.7l2.6-6.1l-17.1-33.8z"/><path class="a" d="M273.3,522l15.5,29l2.4-6.2l-15.3-28.9z"/><path class="a" d="M288.8,551l13.9,25l2.2-6.2l-13.7-25z"/><path class="a" d="M302.7,576l12.6,21.5l2.1-6.1l-12.5-21.6z"/><path class="a" d="M315.3,597.5l11.5,18.5l2-6.1l-11.4-18.5z"/><path class="a" d="M326.8,616l10.7,16l1.8-6.1l-10.5-16z"/><path class="a" d="M337.5,632l9.9,13.6l1.7-6l-9.8-13.7z"/><path class="a" d="M347.4,645.6l9.2,11.6l1.7-6l-9.2-11.6z"/><path class="a" d="M356.6,657.2l8.8,9.6l1.6-6l-8.7-9.6z"/><path class="a" d="M365.4,666.8l8.3,8l1.5-6l-8.2-8z"/><path class="a" d="M373.7,674.8l7.9,6.2l1.5-6l-7.9-6.2z"/><path class="a" d="M381.6,681l7.7,4.8l1.4-6l-7.6-4.8z"/><path class="a" d="M389.3,685.8l7.4,3.2l1.4-6.1l-7.4-3.1z"/><path class="a" d="M396.7,689l7.2,1.7l1.4-6l-7.2-1.8z"/><path class="a" d="M403.9,690.7l7.2,.3l1.3-6.1l-7.1-.2z"/><path class="a" d="M411.1,691l7.1-1.3l1.3-6.1l-7.1,1.3z"/><path class="a" d="M418.2,689.7l7.1-2.7l1.2-6.2l-7,2.8z"/><path class="a" d="M425.3,687l7.1-4.4l1.3-6.2l-7.2,4.4z"/><path class="b" d="M432.4,682.6l7.3-6.1l1.3-6.3l-7.3,6.2z"/><path class="b" d="M439.7,676.5l7.5-7.9l1.2-6.4l-7.4,8z"/><path class="b" d="M447.2,668.6l7.8-10l1.2-6.4l-7.8,10z"/><path class="b" d="M455,658.6l8.1-12.2l1.2-6.6l-8.1,12.4z"/><path class="c" d="M463.1,646.4l8.6-14.8l1.1-6.6l-8.5,14.8z"/><path class="c" d="M471.7,631.6l9.2-17.8l1.1-6.7l-9.2,17.9z"/><path class="c" d="M480.9,613.8l10-21.2l1.1-6.8l-10,21.3z"/><path class="c" d="M490.9,592.6l10.9-25.3l1-6.9l-10.8,25.4z"/><path class="c" d="M501.8,567.3l12.1-30.2l1-7l-12.1,30.3z"/><path class="c" d="M513.9,537.1l13.7-36.3l.9-7.2l-13.6,36.5z"/><path class="c" d="M527.6,500.8l15.7-44.1l.8-7.2l-15.6,44.1z"/><path d="M543.3,456.7l18.3-53.9l.7-7.2l-18.2,53.9z"/><path d="M561.6,402.8l21.8-67l.6-7.1l-21.7,66.9z"/><path class="c" d="M583.4,335.8l26.8-84.8l.3-6.9l-26.5,84.6z"/><path class="c" d="M610.2,251l33.8-110.3l-.1-6.2l-33.4,109.6z"/><path class="c" d="M644,140.7l44.2-148l-.7-5l-43.6,146.8z"/><path class="a" d="M9.2-28.2l58.6,130.1l6.3-5l-57.2-129z"/><path class="a" d="M67.8,101.9l46.5,102l5.3-5.6l-45.5-101.4z"/><path class="a" d="M114.3,203.9l37.8,81.9l4.6-5.9l-37.1-81.6z"/><path class="a" d="M152.1,285.8l31.5,67l4-6.1l-30.9-66.8z"/><path class="a" d="M183.6,352.8l26.7,55.5l3.5-6.2l-26.2-55.4z"/><path class="a" d="M210.3,408.3l22.9,46.7l3.1-6.2l-22.5-46.7z"/><path class="a" d="M233.2,455l19.9,39.6l2.9-6.3l-19.7-39.5z"/><path class="a" d="M253.1,494.6l17.6,33.7l2.6-6.3l-17.3-33.7z"/><path class="a" d="M270.7,528.3l15.6,28.9l2.5-6.2l-15.5-29z"/><path class="a" d="M286.3,557.2l14.1,25l2.3-6.2l-13.9-25z"/><path class="a" d="M300.4,582.2l12.8,21.4l2.1-6.1l-12.6-21.5z"/><path class="a" d="M313.2,603.6l11.6,18.6l2-6.2l-11.5-18.5z"/><path class="a" d="M324.8,622.2l10.8,15.9l1.9-6.1l-10.7-16z"/><path class="a" d="M335.6,638.1l10,13.6l1.8-6.1l-9.9-13.6z"/><path class="a" d="M345.6,651.7l9.3,11.5l1.7-6l-9.2-11.6z"/><path class="a" d="M354.9,663.2l8.9,9.7l1.6-6.1l-8.8-9.6z"/><path class="a" d="M363.8,672.9l8.3,7.9l1.6-6l-8.3-8z"/><path class="a" d="M372.1,680.8l8,6.3l1.5-6.1l-7.9-6.2z"/><path class="a" d="M380.1,687.1l7.7,4.7l1.5-6l-7.7-4.8z"/><path class="a" d="M387.8,691.8l7.5,3.3l1.4-6.1l-7.4-3.2z"/><path class="a" d="M395.3,695.1l7.3,1.7l1.3-6.1l-7.2-1.7z"/><path class="a" d="M402.6,696.8l7.2,.3l1.3-6.1l-7.2-.3z"/><path class="a" d="M409.8,697.1l7.1-1.2l1.3-6.2l-7.1,1.3z"/><path class="a" d="M416.9,695.9l7.1-2.7l1.3-6.2l-7.1,2.7z"/><path class="a" d="M424,693.2l7.2-4.3l1.2-6.3l-7.1,4.4z"/><path class="a" d="M431.2,688.9l7.3-6.1l1.2-6.3l-7.3,6.1z"/><path class="b" d="M438.5,682.8l7.5-7.8l1.2-6.4l-7.5,7.9z"/><path class="b" d="M446,675l7.8-9.9l1.2-6.5l-7.8,10z"/><path class="b" d="M453.8,665.1l8.2-12.1l1.1-6.6l-8.1,12.2z"/><path class="c" d="M462,653l8.6-14.7l1.1-6.7l-8.6,14.8z"/><path class="c" d="M470.6,638.3l9.2-17.7l1.1-6.8l-9.2,17.8z"/><path class="c" d="M479.8,620.6l10-21l1.1-7l-10,21.2z"/><path class="c" d="M489.8,599.6l11-25.2l1-7.1l-10.9,25.3z"/><path class="c" d="M500.8,574.4l12.1-30.1l1-7.2l-12.1,30.2z"/><path class="c" d="M512.9,544.3l13.8-36.3l.9-7.2l-13.7,36.3z"/><path class="c" d="M526.7,508l15.7-43.9l.9-7.4l-15.7,44.1z"/><path class="c" d="M542.4,464.1l18.5-53.9l.7-7.4l-18.3,53.9z"/><path class="c" d="M560.9,410.2l22-67.1l.5-7.3l-21.8,67z"/><path class="c" d="M582.9,343.1l27-85.1l.3-7l-26.8,84.8z"/><path class="c" d="M609.9,258l34.1-110.9l0-6.4l-33.8,110.3z"/><path class="c" d="M644,147.1l45-149.4l-.8-5l-44.2,148z"/><path class="a" d="M1.4-24.3l60,131.2l6.4-5l-58.6-130.1z"/><path class="a" d="M61.4,106.9l47.5,102.6l5.4-5.6l-46.5-102z"/><path class="a" d="M108.9,209.5l38.6,82.3l4.6-6l-37.8-81.9z"/><path class="a" d="M147.5,291.8l32.1,67.2l4-6.2l-31.5-67z"/><path class="a" d="M179.6,359l27.1,55.7l3.6-6.4l-26.7-55.5z"/><path class="a" d="M206.7,414.7l23.2,46.7l3.3-6.4l-22.9-46.7z"/><path class="a" d="M229.9,461.4l20.3,39.5l2.9-6.3l-19.9-39.6z"/><path class="a" d="M250.2,500.9l17.8,33.8l2.7-6.4l-17.6-33.7z"/><path class="a" d="M268,534.7l15.9,28.9l2.4-6.4l-15.6-28.9z"/><path class="a" d="M283.9,563.6l14.2,24.9l2.3-6.3l-14.1-25z"/><path class="a" d="M298.1,588.5l12.9,21.4l2.2-6.3l-12.8-21.4z"/><path class="a" d="M311,609.9l11.8,18.5l2-6.2l-11.6-18.6z"/><path class="a" d="M322.8,628.4l10.9,15.9l1.9-6.2l-10.8-15.9z"/><path class="a" d="M333.7,644.3l10.1,13.6l1.8-6.2l-10-13.6z"/><path class="a" d="M343.8,657.9l9.4,11.5l1.7-6.2l-9.3-11.5z"/><path class="a" d="M353.2,669.4l8.9,9.6l1.7-6.1l-8.9-9.7z"/><path class="a" d="M362.1,679l8.4,8l1.6-6.2l-8.3-7.9z"/><path class="a" d="M370.5,687l8.1,6.2l1.5-6.1l-8-6.3z"/><path class="a" d="M378.6,693.2l7.7,4.8l1.5-6.2l-7.7-4.7z"/><path class="a" d="M386.3,698l7.5,3.2l1.5-6.1l-7.5-3.3z"/><path class="a" d="M393.8,701.2l7.4,1.8l1.4-6.2l-7.3-1.7z"/><path class="a" d="M401.2,703l7.2,.3l1.4-6.2l-7.2-.3z"/><path class="a" d="M408.4,703.3l7.2-1.1l1.3-6.3l-7.1,1.2z"/><path class="a" d="M415.6,702.2l7.1-2.7l1.3-6.3l-7.1,2.7z"/><path class="a" d="M422.7,699.5l7.2-4.3l1.3-6.3l-7.2,4.3z"/><path class="a" d="M429.9,695.2l7.4-5.9l1.2-6.5l-7.3,6.1z"/><path class="b" d="M437.3,689.3l7.5-7.8l1.2-6.5l-7.5,7.8z"/><path class="b" d="M444.8,681.5l7.8-9.8l1.2-6.6l-7.8,9.9z"/><path class="b" d="M452.6,671.7l8.2-12.1l1.2-6.6l-8.2,12.1z"/><path class="b" d="M460.8,659.6l8.7-14.5l1.1-6.8l-8.6,14.7z"/><path class="c" d="M469.5,645.1l9.2-17.6l1.1-6.9l-9.2,17.7z"/><path class="c" d="M478.7,627.5l10-20.9l1.1-7l-10,21z"/><path class="c" d="M488.7,606.6l11-25.1l1.1-7.1l-11,25.2z"/><path class="c" d="M499.7,581.5l12.2-30l1-7.2l-12.1,30.1z"/><path class="c" d="M511.9,551.5l13.8-36.1l1-7.4l-13.8,36.3z"/><path class="c" d="M525.7,515.4l15.9-43.9l.8-7.4l-15.7,43.9z"/><path class="c" d="M541.6,471.5l18.5-53.8l.8-7.5l-18.5,53.9z"/><path class="c" d="M560.1,417.7l22.2-67.2l.6-7.4l-22,67.1z"/><path class="c" d="M582.3,350.5l27.3-85.3l.3-7.2l-27,85.1z"/><path class="c" d="M609.6,265.2l34.5-111.5l-.1-6.6l-34.1,110.9z"/><path class="c" d="M644.1,153.7l45.7-150.7l-.8-5.3l-45,149.4z"/><path class="a" d="M-6.7-20.2l61.5,132.2l6.6-5.1l-60-131.2z"/><path class="a" d="M54.8,112l48.6,103.3l5.5-5.8l-47.5-102.6z"/><path class="a" d="M103.4,215.3l39.4,82.6l4.7-6.1l-38.6-82.3z"/><path class="a" d="M142.8,297.9l32.7,67.4l4.1-6.3l-32.1-67.2z"/><path class="a" d="M175.5,365.3l27.5,55.8l3.7-6.4l-27.1-55.7z"/><path class="a" d="M203,421.1l23.7,46.7l3.2-6.4l-23.2-46.7z"/><path class="a" d="M226.7,467.8l20.5,39.6l3-6.5l-20.3-39.5z"/><path class="a" d="M247.2,507.4l18.1,33.7l2.7-6.4l-17.8-33.8z"/><path class="a" d="M265.3,541.1l16.1,28.9l2.5-6.4l-15.9-28.9z"/><path class="a" d="M281.4,570l14.4,24.8l2.3-6.3l-14.2-24.9z"/><path class="a" d="M295.8,594.8l13.1,21.5l2.1-6.4l-12.9-21.4z"/><path class="a" d="M308.9,616.3l11.9,18.4l2-6.3l-11.8-18.5z"/><path class="a" d="M320.8,634.7l11,15.9l1.9-6.3l-10.9-15.9z"/><path class="a" d="M331.8,650.6l10.2,13.5l1.8-6.2l-10.1-13.6z"/><path class="a" d="M342,664.1l9.5,11.5l1.7-6.2l-9.4-11.5z"/><path class="a" d="M351.5,675.6l8.9,9.7l1.7-6.3l-8.9-9.6z"/><path class="a" d="M360.4,685.3l8.5,7.9l1.6-6.2l-8.4-8z"/><path class="a" d="M368.9,693.2l8.1,6.2l1.6-6.2l-8.1-6.2z"/><path class="a" d="M377,699.4l7.8,4.8l1.5-6.2l-7.7-4.8z"/><path class="a" d="M384.8,704.2l7.6,3.2l1.4-6.2l-7.5-3.2z"/><path class="a" d="M392.4,707.4l7.4,1.8l1.4-6.2l-7.4-1.8z"/><path class="a" d="M399.8,709.2l7.2,.4l1.4-6.3l-7.2-.3z"/><path class="a" d="M407,709.6l7.2-1.1l1.4-6.3l-7.2,1.1z"/><path class="a" d="M414.2,708.5l7.2-2.6l1.3-6.4l-7.1,2.7z"/><path class="a" d="M421.4,705.9l7.3-4.2l1.2-6.5l-7.2,4.3z"/><path class="a" d="M428.7,701.7l7.3-5.9l1.3-6.5l-7.4,5.9z"/><path class="b" d="M436,695.8l7.6-7.7l1.2-6.6l-7.5,7.8z"/><path class="b" d="M443.6,688.1l7.8-9.7l1.2-6.7l-7.8,9.8z"/><path class="b" d="M451.4,678.4l8.2-12l1.2-6.8l-8.2,12.1z"/><path class="b" d="M459.6,666.4l8.7-14.5l1.2-6.8l-8.7,14.5z"/><path class="c" d="M468.3,651.9l9.3-17.4l1.1-7l-9.2,17.6z"/><path class="c" d="M477.6,634.5l10-20.8l1.1-7.1l-10,20.9z"/><path class="c" d="M487.6,613.7l11-24.9l1.1-7.3l-11,25.1z"/><path class="c" d="M498.6,588.8l12.3-29.9l1-7.4l-12.2,30z"/><path class="c" d="M510.9,558.9l13.8-36l1-7.5l-13.8,36.1z"/><path class="c" d="M524.7,522.9l16-43.8l.9-7.6l-15.9,43.9z"/><path class="c" d="M540.7,479.1l18.6-53.8l.8-7.6l-18.5,53.8z"/><path class="c" d="M559.3,425.3l22.4-67.2l.6-7.6l-22.2,67.2z"/><path class="c" d="M581.7,358.1l27.5-85.6l.4-7.3l-27.3,85.3z"/><path class="c" d="M609.2,272.5l35-112.1l-.1-6.7l-34.5,111.5z"/><path class="c" d="M644.2,160.4l46.4-152l-.8-5.4l-45.7,150.7z"/><path class="a" d="M-15-16.1l63.1,133.4l6.7-5.3l-61.5-132.2z"/><path class="a" d="M48.1,117.3l49.7,103.9l5.6-5.9l-48.6-103.3z"/><path class="a" d="M97.8,221.2l40.2,83l4.8-6.3l-39.4-82.6z"/><path class="a" d="M138,304.2l33.3,67.5l4.2-6.4l-32.7-67.4z"/><path class="a" d="M171.3,371.7l28,55.9l3.7-6.5l-27.5-55.8z"/><path class="a" d="M199.3,427.6l24.1,46.8l3.3-6.6l-23.7-46.7z"/><path class="a" d="M223.4,474.4l20.8,39.6l3-6.6l-20.5-39.6z"/><path class="a" d="M244.2,514l18.4,33.6l2.7-6.5l-18.1-33.7z"/><path class="a" d="M262.6,547.6l16.3,28.9l2.5-6.5l-16.1-28.9z"/><path class="a" d="M278.9,576.5l14.6,24.8l2.3-6.5l-14.4-24.8z"/><path class="a" d="M293.5,601.3l13.2,21.4l2.2-6.4l-13.1-21.5z"/><path class="a" d="M306.7,622.7l12,18.4l2.1-6.4l-11.9-18.4z"/><path class="a" d="M318.7,641.1l11.1,15.8l2-6.3l-11-15.9z"/><path class="a" d="M329.8,656.9l10.3,13.6l1.9-6.4l-10.2-13.5z"/><path class="a" d="M340.1,670.5l9.6,11.4l1.8-6.3l-9.5-11.5z"/><path class="a" d="M349.7,681.9l9,9.7l1.7-6.3l-8.9-9.7z"/><path class="a" d="M358.7,691.6l8.6,7.8l1.6-6.2l-8.5-7.9z"/><path class="a" d="M367.3,699.4l8.2,6.3l1.5-6.3l-8.1-6.2z"/><path class="a" d="M375.5,705.7l7.8,4.8l1.5-6.3l-7.8-4.8z"/><path class="a" d="M383.3,710.5l7.6,3.2l1.5-6.3l-7.6-3.2z"/><path class="a" d="M390.9,713.7l7.4,1.9l1.5-6.4l-7.4-1.8z"/><path class="a" d="M398.3,715.6l7.3,.4l1.4-6.4l-7.2-.4z"/><path class="a" d="M405.6,716l7.3-1.1l1.3-6.4l-7.2,1.1z"/><path class="a" d="M412.9,714.9l7.2-2.6l1.3-6.4l-7.2,2.6z"/><path class="a" d="M420.1,712.3l7.3-4.1l1.3-6.5l-7.3,4.2z"/><path class="a" d="M427.4,708.2l7.3-5.8l1.3-6.6l-7.3,5.9z"/><path class="b" d="M434.7,702.4l7.6-7.7l1.3-6.6l-7.6,7.7z"/><path class="b" d="M442.3,694.7l7.9-9.6l1.2-6.7l-7.8,9.7z"/><path class="b" d="M450.2,685.1l8.2-11.8l1.2-6.9l-8.2,12z"/><path class="b" d="M458.4,673.3l8.7-14.4l1.2-7l-8.7,14.5z"/><path class="c" d="M467.1,658.9l9.3-17.3l1.2-7.1l-9.3,17.4z"/><path class="c" d="M476.4,641.6l10.1-20.7l1.1-7.2l-10,20.8z"/><path class="c" d="M486.5,620.9l11-24.7l1.1-7.4l-11,24.9z"/><path class="c" d="M497.5,596.2l12.3-29.8l1.1-7.5l-12.3,29.9z"/><path class="c" d="M509.8,566.4l14-35.9l.9-7.6l-13.8,36z"/><path class="c" d="M523.8,530.5l16-43.6l.9-7.8l-16,43.8z"/><path class="c" d="M539.8,486.9l18.7-53.8l.8-7.8l-18.6,53.8z"/><path class="c" d="M558.5,433.1l22.6-67.2l.6-7.8l-22.4,67.2z"/><path class="c" d="M581.1,365.9l27.8-85.8l.3-7.6l-27.5,85.6z"/><path class="c" d="M608.9,280.1l35.4-112.7l-.1-7l-35,112.1z"/><path class="c" d="M644.3,167.4l47.2-153.4l-.9-5.6l-46.4,152z"/><path class="a" d="M-23.4-11.8l64.6,134.5l6.9-5.4l-63.1-133.4z"/><path class="a" d="M41.2,122.7l50.8,104.5l5.8-6l-49.7-103.9z"/><path class="a" d="M92,227.2l41.1,83.3l4.9-6.3l-40.2-83z"/><path class="a" d="M133.1,310.5l33.9,67.8l4.3-6.6l-33.3-67.5z"/><path class="a" d="M167,378.3l28.6,56l3.7-6.7l-28-55.9z"/><path class="a" d="M195.6,434.3l24.4,46.8l3.4-6.7l-24.1-46.8z"/><path class="a" d="M220,481.1l21.2,39.5l3-6.6l-20.8-39.6z"/><path class="a" d="M241.2,520.6l18.6,33.7l2.8-6.7l-18.4-33.6z"/><path class="a" d="M259.8,554.3l16.5,28.8l2.6-6.6l-16.3-28.9z"/><path class="a" d="M276.3,583.1l14.8,24.8l2.4-6.6l-14.6-24.8z"/><path class="a" d="M291.1,607.9l13.3,21.3l2.3-6.5l-13.2-21.4z"/><path class="a" d="M304.4,629.2l12.2,18.4l2.1-6.5l-12-18.4z"/><path class="a" d="M316.6,647.6l11.2,15.8l2-6.5l-11.1-15.8z"/><path class="a" d="M327.8,663.4l10.4,13.5l1.9-6.4l-10.3-13.6z"/><path class="a" d="M338.2,676.9l9.7,11.4l1.8-6.4l-9.6-11.4z"/><path class="a" d="M347.9,688.3l9.1,9.6l1.7-6.3l-9-9.7z"/><path class="a" d="M357,697.9l8.7,7.9l1.6-6.4l-8.6-7.8z"/><path class="a" d="M365.7,705.8l8.2,6.3l1.6-6.4l-8.2-6.3z"/><path class="a" d="M373.9,712.1l7.9,4.7l1.5-6.3l-7.8-4.8z"/><path class="a" d="M381.8,716.8l7.6,3.3l1.5-6.4l-7.6-3.2z"/><path class="a" d="M389.4,720.1l7.5,1.9l1.4-6.4l-7.4-1.9z"/><path class="a" d="M396.9,722l7.3,.4l1.4-6.4l-7.3-.4z"/><path class="a" d="M404.2,722.4l7.3-1l1.4-6.5l-7.3,1.1z"/><path class="a" d="M411.5,721.4l7.2-2.5l1.4-6.6l-7.2,2.6z"/><path class="a" d="M418.7,718.9l7.3-4.1l1.4-6.6l-7.3,4.1z"/><path class="a" d="M426,714.8l7.5-5.8l1.2-6.6l-7.3,5.8z"/><path class="b" d="M433.5,709l7.6-7.5l1.2-6.8l-7.6,7.7z"/><path class="b" d="M441.1,701.5l7.8-9.5l1.3-6.9l-7.9,9.6z"/><path class="b" d="M448.9,692l8.3-11.7l1.2-7l-8.2,11.8z"/><path class="b" d="M457.2,680.3l8.7-14.3l1.2-7.1l-8.7,14.4z"/><path class="c" d="M465.9,666l9.3-17.1l1.2-7.3l-9.3,17.3z"/><path class="c" d="M475.2,648.9l10.1-20.6l1.2-7.4l-10.1,20.7z"/><path class="c" d="M485.3,628.3l11.1-24.6l1.1-7.5l-11,24.7z"/><path class="c" d="M496.4,603.7l12.4-29.6l1-7.7l-12.3,29.8z"/><path class="c" d="M508.8,574.1l14-35.8l1-7.8l-14,35.9z"/><path class="c" d="M522.8,538.3l16-43.5l1-7.9l-16,43.6z"/><path class="c" d="M538.8,494.8l18.9-53.7l.8-8l-18.7,53.8z"/><path class="c" d="M557.7,441.1l22.8-67.3l.6-7.9l-22.6,67.2z"/><path class="c" d="M580.5,373.8l28-86l.4-7.7l-27.8,85.8z"/><path class="c" d="M608.5,287.8l36-113.3l-.2-7.1l-35.4,112.7z"/><path class="b" d="M644.5,174.5l47.9-154.8l-.9-5.7l-47.2,153.4z"/><path d="M-23.4,-11.8L41.2,122.7L92.0,227.2L133.1,310.5L167.0,378.3L195.6,434.3L220.0,481.1L241.2,520.6L259.8,554.3L276.3,583.1L291.1,607.9L304.4,629.2L316.6,647.6L327.8,663.4L338.2,676.9L347.9,688.3L357.0,697.9L365.7,705.8L373.9,712.1L381.8,716.8L389.4,720.1L396.9,722.0L404.2,722.4L411.5,721.4L418.7,718.9L426.0,714.8L433.5,709.0L441.1,701.5L448.9,692.0L457.2,680.3L465.9,666.0L475.2,648.9L485.3,628.3L496.4,603.7L508.8,574.1L522.8,538.3L538.8,494.8L557.7,441.1L580.5,373.8L608.5,287.8L644.5,174.5L692.4,19.7M412.1,52.0L418.9,87.1L425.2,118.2L431.2,145.7L436.8,170.0L442.2,191.5L447.4,210.4L452.4,226.9L457.2,241.3L461.9,253.7L466.6,264.1L471.1,272.8L475.6,279.7L480.1,285.1L484.6,288.8L489.2,290.9L493.7,291.4L498.4,290.4L503.1,287.8L508.0,283.6L513.0,277.7L518.2,270.1L523.6,260.6L529.2,249.2L535.1,235.6L541.3,219.8L548.0,201.6L555.0,180.6L562.6,156.6L570.8,129.1L579.6,97.8L589.3,62.1L600.0,21.3" style="fill:none;stroke-width:1px"/></g>
<path d="M455.500,94V455.500" stroke="#404040" stroke-width="3" fill="none"/>
</svg>
</body></html>
